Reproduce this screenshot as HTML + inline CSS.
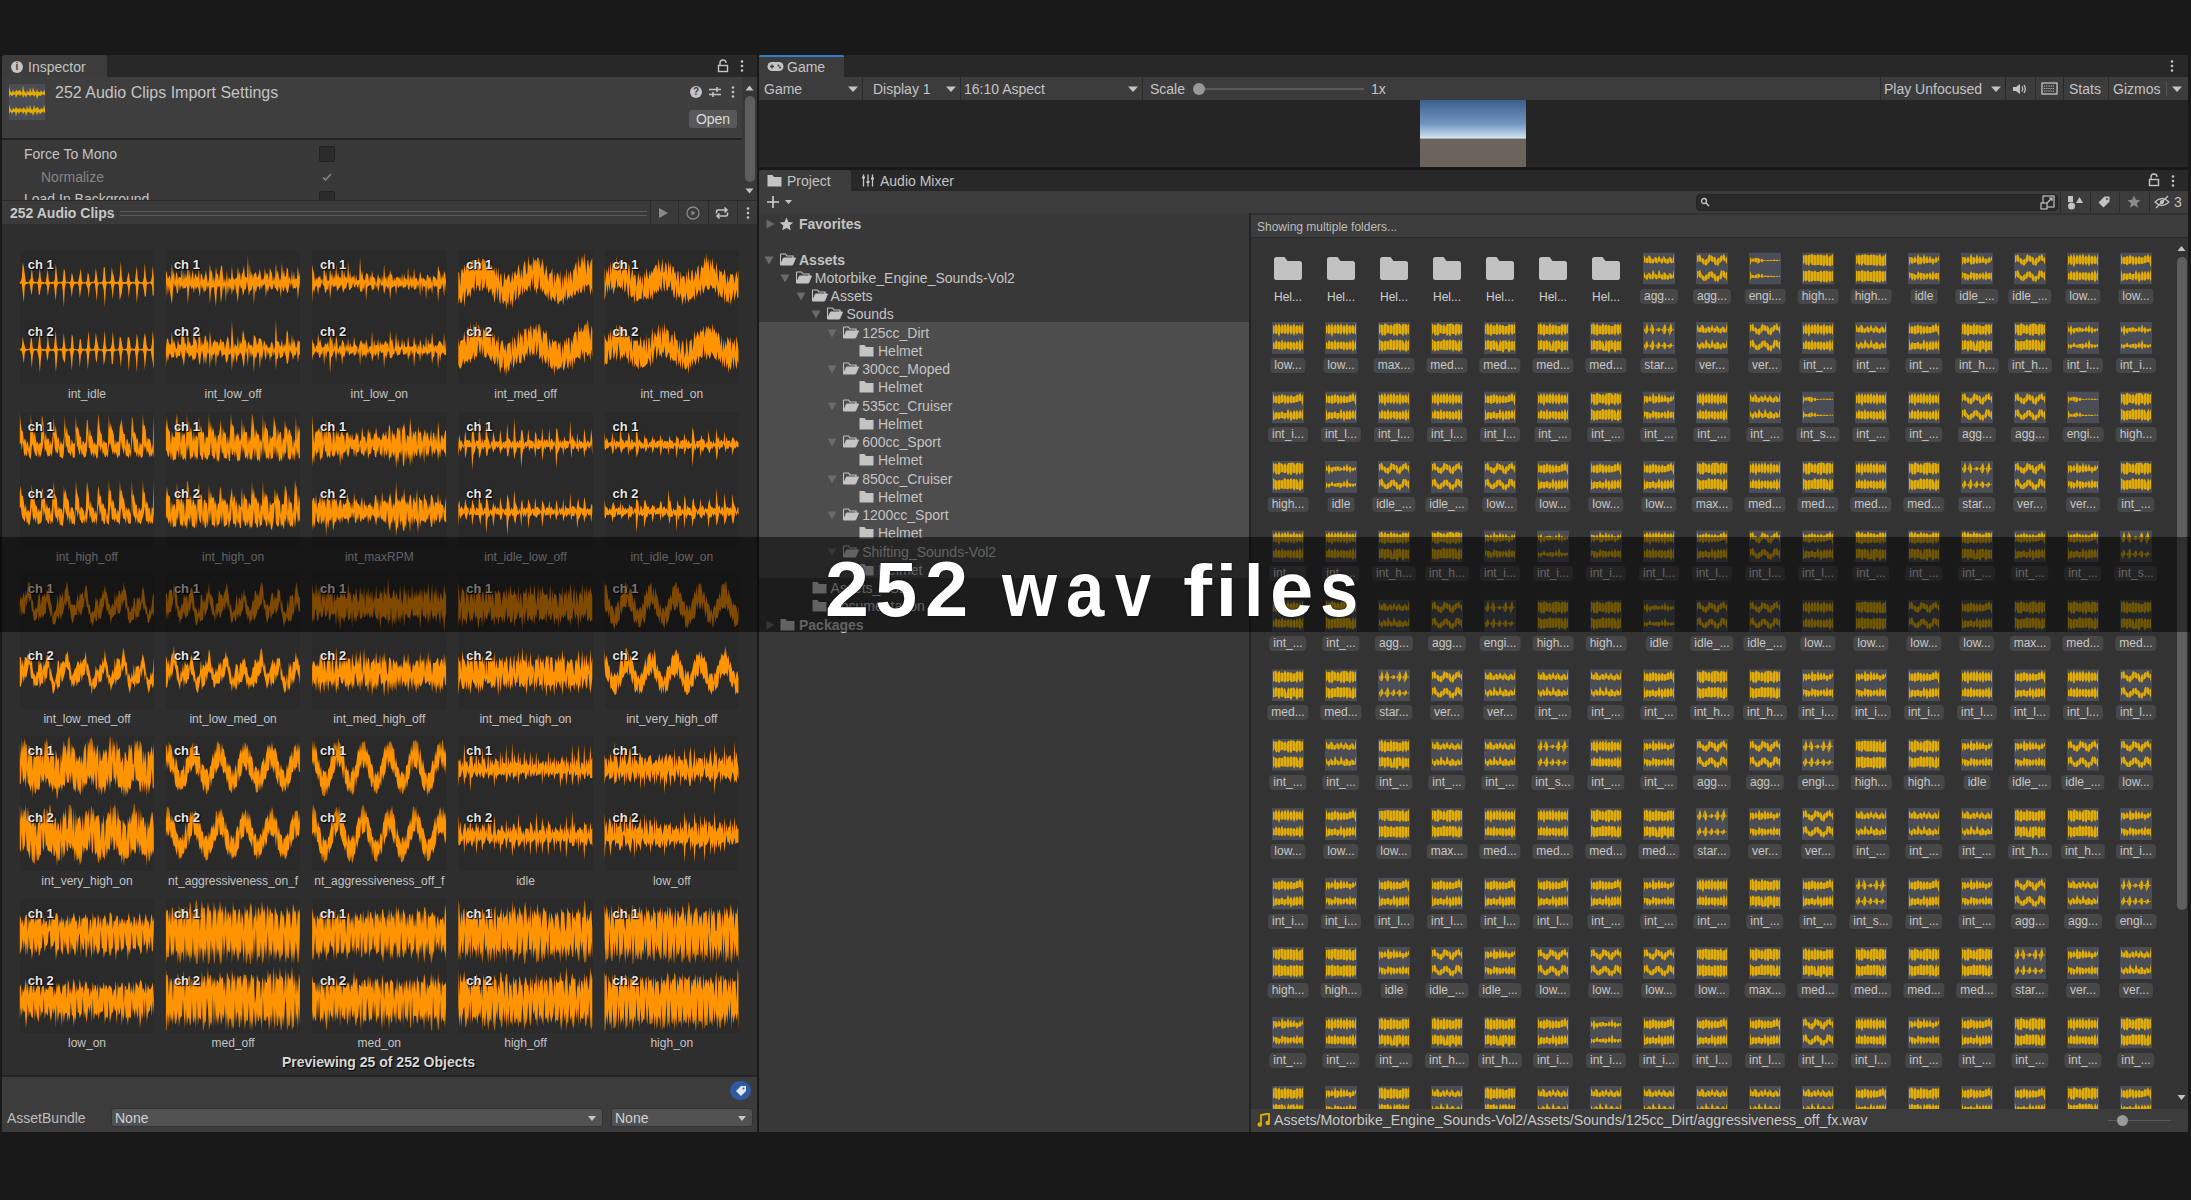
<!DOCTYPE html><html><head><meta charset="utf-8"><style>
html,body{margin:0;padding:0;}
body{width:2191px;height:1200px;overflow:hidden;background:#191919;position:relative;font-family:"Liberation Sans", sans-serif;}
body div{position:absolute;box-sizing:border-box;}
.t{white-space:nowrap;}
.lb{white-space:nowrap;transform:translateX(-50%);padding:0 4px;height:15px;line-height:15px;font-size:12px;color:#c8c8c8;background:#474747;border-radius:4px;}
svg{position:absolute;overflow:hidden;}
</style></head><body>
<div style="left:2px;top:55px;width:755px;height:22px;background:#282828;"></div>
<div style="left:2px;top:55px;width:105px;height:22px;background:#3c3c3c;border-radius:3px 3px 0 0"></div>
<div style="left:11px;top:61px;width:12px;height:12px;border-radius:6px;background:#c4c4c4"></div>
<div class="t" style="left:11px;top:60px;width:12px;text-align:center;font-size:10px;line-height:14px;font-weight:bold;color:#3c3c3c">i</div>
<div class="t" style="left:28px;top:58.0px;font-size:14px;line-height:18px;color:#c4c4c4;font-weight:normal;">Inspector</div>
<svg style="left:716px;top:59px" width="14" height="14" viewBox="0 0 14 14"><path d="M4 6V4a3 3 0 0 1 6 0" fill="none" stroke="#c4c4c4" stroke-width="1.4"/><rect x="2.5" y="6.5" width="9" height="6" fill="none" stroke="#c4c4c4" stroke-width="1.4"/></svg>
<svg style="left:738px;top:59px" width="8" height="14" viewBox="0 0 8 14"><circle cx="4" cy="2.5" r="1.3" fill="#c4c4c4"/><circle cx="4" cy="7" r="1.3" fill="#c4c4c4"/><circle cx="4" cy="11.5" r="1.3" fill="#c4c4c4"/></svg>
<div style="left:2px;top:77px;width:740px;height:61px;background:#3e3e3e;"></div>
<div style="left:9px;top:84px;width:36px;height:36px;background:#4a4d55;"></div>
<svg style="left:9px;top:84px" width="36" height="36" viewBox="0 0 36 36"><path transform="translate(0 1)" d="M0 0.5 1 5.5 2 7.0 3 7.4 4 4.3 5 7.2 6 7.1 7 5.2 8 5.2 9 6.6 10 5.3 11 5.1 12 6.6 13 7.7 14 0.5 15 5.4 16 6.7 17 9.1 18 4.9 19 6.4 20 7.8 21 2.6 22 5.9 23 7.6 24 2.1 25 5.3 26 7.1 27 7.4 28 3.7 29 6.4 30 7.2 31 7.0 32 5.3 33 7.0 34 7.2 35 4.7 36 6.9 36 9.4 35 10.5 34 9.3 33 9.5 32 10.5 31 11.2 30 10.0 29 11.5 28 14.7 27 9.4 26 10.4 25 11.9 24 9.8 23 9.9 22 9.9 21 11.9 20 9.9 19 9.9 18 10.0 17 13.1 16 10.2 15 10.3 14 13.5 13 9.2 12 10.0 11 11.0 10 9.6 9 9.7 8 10.6 7 13.2 6 9.6 5 9.5 4 10.3 3 11.4 2 10.3 1 9.7 0 12.6Z" fill="#e2ad00"/><path transform="translate(0 18)" d="M0 2.2 1 5.9 2 7.1 3 9.1 4 5.5 5 7.0 6 7.2 7 4.4 8 6.7 9 6.3 10 7.6 11 5.4 12 6.7 13 7.6 14 5.7 15 5.4 16 6.9 17 7.9 18 3.3 19 6.5 20 6.9 21 3.0 22 6.3 23 7.8 24 7.2 25 2.8 26 5.8 27 7.1 28 5.1 29 5.3 30 7.1 31 8.0 32 5.7 33 6.7 34 7.2 35 3.1 36 6.4 36 10.1 35 11.3 34 9.3 33 10.6 32 11.1 31 12.4 30 9.9 29 10.4 28 13.6 27 10.3 26 9.4 25 11.7 24 14.0 23 10.2 22 11.6 21 11.1 20 10.1 19 9.7 18 11.4 17 14.2 16 9.8 15 10.4 14 12.6 13 9.2 12 10.6 11 9.8 10 12.3 9 10.1 8 10.5 7 14.2 6 9.9 5 9.9 4 10.0 3 12.2 2 9.7 1 10.1 0 12.3Z" fill="#e2ad00"/></svg>
<div class="t" style="left:55px;top:83.0px;font-size:16px;line-height:20px;color:#c4c4c4;font-weight:normal;">252 Audio Clips Import Settings</div>
<div style="left:690px;top:86px;width:12px;height:12px;border-radius:6px;background:#c4c4c4"></div>
<div class="t" style="left:690px;top:85px;width:12px;text-align:center;font-size:10px;line-height:14px;font-weight:bold;color:#3e3e3e">?</div>
<svg style="left:708px;top:85px" width="14" height="14" viewBox="0 0 14 14"><path d="M1 4.5h12M1 9.5h12" stroke="#c4c4c4" stroke-width="1.4"/><path d="M9 2v5M5 7v5" stroke="#c4c4c4" stroke-width="1.6"/></svg>
<svg style="left:729px;top:85px" width="8" height="14" viewBox="0 0 8 14"><circle cx="4" cy="2.5" r="1.3" fill="#c4c4c4"/><circle cx="4" cy="7" r="1.3" fill="#c4c4c4"/><circle cx="4" cy="11.5" r="1.3" fill="#c4c4c4"/></svg>
<div style="left:689px;top:110px;width:48px;height:18px;background:#585858;border-radius:3px"></div>
<div class="t" style="left:689.0px;top:110.0px;width:48px;text-align:center;font-size:14px;line-height:18px;color:#dcdcdc;font-weight:normal;">Open</div>
<div style="left:2px;top:138px;width:740px;height:2px;background:#242424;"></div>
<div style="left:2px;top:140px;width:740px;height:60px;background:#383838;"></div>
<div class="t" style="left:24px;top:145.0px;font-size:14px;line-height:18px;color:#c4c4c4;font-weight:normal;">Force To Mono</div>
<div style="left:319px;top:146px;width:16px;height:16px;background:#2b2b2b;border:1px solid #222;border-radius:2px"></div>
<div class="t" style="left:41px;top:168.0px;font-size:14px;line-height:18px;color:#858585;font-weight:normal;">Normalize</div>
<svg style="left:320px;top:170px" width="14" height="14" viewBox="0 0 14 14"><path d="M3 7.5l2.5 2.5L11 4" fill="none" stroke="#8a8a8a" stroke-width="1.5"/></svg>
<div style="left:2px;top:140px;width:740px;height:60px;overflow:hidden"><div class="t" style="left:22px;top:50px;font-size:14px;line-height:18px;color:#c4c4c4">Load In Background</div><div style="left:317px;top:51px;width:16px;height:16px;background:#2b2b2b;border:1px solid #222;border-radius:2px"></div></div>
<div style="left:742px;top:77px;width:15px;height:123px;background:#383838;"></div>
<svg style="left:742px;top:80px" width="15" height="120" viewBox="0 0 15 120"><path d="M3.5 10.5h8l-4-5z" fill="#c4c4c4"/><rect x="3" y="16" width="10" height="86" rx="5" fill="#5e5e5e"/><path d="M3.5 108.5h8l-4 5z" fill="#c4c4c4"/></svg>
<div style="left:2px;top:200px;width:755px;height:24px;background:#3a3a3a;border-top:1px solid #2a2a2a"></div>
<div class="t" style="left:10px;top:204.0px;font-size:14px;line-height:18px;color:#c8c8c8;font-weight:bold;">252 Audio Clips</div>
<div style="left:120px;top:211px;width:527px;height:1px;background:#5a5a5a;"></div>
<div style="left:120px;top:215px;width:527px;height:1px;background:#5a5a5a;"></div>
<div style="left:650px;top:201px;width:1px;height:23px;background:#2c2c2c;"></div>
<div style="left:678px;top:201px;width:1px;height:23px;background:#2c2c2c;"></div>
<div style="left:708px;top:201px;width:1px;height:23px;background:#2c2c2c;"></div>
<div style="left:737px;top:201px;width:1px;height:23px;background:#2c2c2c;"></div>
<svg style="left:656px;top:206px" width="14" height="14" viewBox="0 0 14 14"><path d="M3 2l9 5-9 5z" fill="#8a8a8a"/></svg>
<svg style="left:685px;top:205px" width="16" height="16" viewBox="0 0 16 16"><circle cx="8" cy="8" r="6" fill="none" stroke="#8a8a8a" stroke-width="1.3"/><path d="M6.5 5.5l4 2.5-4 2.5z" fill="#8a8a8a"/></svg>
<svg style="left:714px;top:205px" width="16" height="16" viewBox="0 0 16 16"><path d="M2.5 8.5V6.5A1.5 1.5 0 0 1 4 5h8.5M10.5 2.5l2.5 2.5-2.5 2.5M13.5 7.5v2A1.5 1.5 0 0 1 12 11H3.5M5.5 13.5L3 11l2.5-2.5" fill="none" stroke="#c4c4c4" stroke-width="1.6"/></svg>
<svg style="left:744px;top:206px" width="8" height="14" viewBox="0 0 8 14"><circle cx="4" cy="2.5" r="1.3" fill="#c4c4c4"/><circle cx="4" cy="7" r="1.3" fill="#c4c4c4"/><circle cx="4" cy="11.5" r="1.3" fill="#c4c4c4"/></svg>
<div style="left:2px;top:224px;width:755px;height:851px;background:#2e2e2e;"></div>
<div style="left:19.75px;top:249.75px;width:134.4px;height:134.4px;background:#2a2a2a"></div>
<div class="t" style="left:12.0px;top:386.2px;width:150px;text-align:center;font-size:12px;line-height:16px;color:#c4c4c4;font-weight:normal;">int_idle</div>
<div style="left:165.95px;top:249.75px;width:134.4px;height:134.4px;background:#2a2a2a"></div>
<div class="t" style="left:158.1px;top:386.2px;width:150px;text-align:center;font-size:12px;line-height:16px;color:#c4c4c4;font-weight:normal;">int_low_off</div>
<div style="left:312.15px;top:249.75px;width:134.4px;height:134.4px;background:#2a2a2a"></div>
<div class="t" style="left:304.3px;top:386.2px;width:150px;text-align:center;font-size:12px;line-height:16px;color:#c4c4c4;font-weight:normal;">int_low_on</div>
<div style="left:458.35px;top:249.75px;width:134.4px;height:134.4px;background:#2a2a2a"></div>
<div class="t" style="left:450.5px;top:386.2px;width:150px;text-align:center;font-size:12px;line-height:16px;color:#c4c4c4;font-weight:normal;">int_med_off</div>
<div style="left:604.55px;top:249.75px;width:134.4px;height:134.4px;background:#2a2a2a"></div>
<div class="t" style="left:596.8px;top:386.2px;width:150px;text-align:center;font-size:12px;line-height:16px;color:#c4c4c4;font-weight:normal;">int_med_on</div>
<div style="left:19.75px;top:411.95px;width:134.4px;height:134.4px;background:#2a2a2a"></div>
<div class="t" style="left:12.0px;top:548.5px;width:150px;text-align:center;font-size:12px;line-height:16px;color:#c4c4c4;font-weight:normal;">int_high_off</div>
<div style="left:165.95px;top:411.95px;width:134.4px;height:134.4px;background:#2a2a2a"></div>
<div class="t" style="left:158.1px;top:548.5px;width:150px;text-align:center;font-size:12px;line-height:16px;color:#c4c4c4;font-weight:normal;">int_high_on</div>
<div style="left:312.15px;top:411.95px;width:134.4px;height:134.4px;background:#2a2a2a"></div>
<div class="t" style="left:304.3px;top:548.5px;width:150px;text-align:center;font-size:12px;line-height:16px;color:#c4c4c4;font-weight:normal;">int_maxRPM</div>
<div style="left:458.35px;top:411.95px;width:134.4px;height:134.4px;background:#2a2a2a"></div>
<div class="t" style="left:450.5px;top:548.5px;width:150px;text-align:center;font-size:12px;line-height:16px;color:#c4c4c4;font-weight:normal;">int_idle_low_off</div>
<div style="left:604.55px;top:411.95px;width:134.4px;height:134.4px;background:#2a2a2a"></div>
<div class="t" style="left:596.8px;top:548.5px;width:150px;text-align:center;font-size:12px;line-height:16px;color:#c4c4c4;font-weight:normal;">int_idle_low_on</div>
<div style="left:19.75px;top:574.15px;width:134.4px;height:134.4px;background:#2a2a2a"></div>
<div class="t" style="left:12.0px;top:710.6px;width:150px;text-align:center;font-size:12px;line-height:16px;color:#c4c4c4;font-weight:normal;">int_low_med_off</div>
<div style="left:165.95px;top:574.15px;width:134.4px;height:134.4px;background:#2a2a2a"></div>
<div class="t" style="left:158.1px;top:710.6px;width:150px;text-align:center;font-size:12px;line-height:16px;color:#c4c4c4;font-weight:normal;">int_low_med_on</div>
<div style="left:312.15px;top:574.15px;width:134.4px;height:134.4px;background:#2a2a2a"></div>
<div class="t" style="left:304.3px;top:710.6px;width:150px;text-align:center;font-size:12px;line-height:16px;color:#c4c4c4;font-weight:normal;">int_med_high_off</div>
<div style="left:458.35px;top:574.15px;width:134.4px;height:134.4px;background:#2a2a2a"></div>
<div class="t" style="left:450.5px;top:710.6px;width:150px;text-align:center;font-size:12px;line-height:16px;color:#c4c4c4;font-weight:normal;">int_med_high_on</div>
<div style="left:604.55px;top:574.15px;width:134.4px;height:134.4px;background:#2a2a2a"></div>
<div class="t" style="left:596.8px;top:710.6px;width:150px;text-align:center;font-size:12px;line-height:16px;color:#c4c4c4;font-weight:normal;">int_very_high_off</div>
<div style="left:19.75px;top:736.35px;width:134.4px;height:134.4px;background:#2a2a2a"></div>
<div class="t" style="left:12.0px;top:872.8px;width:150px;text-align:center;font-size:12px;line-height:16px;color:#c4c4c4;font-weight:normal;">int_very_high_on</div>
<div style="left:165.95px;top:736.35px;width:134.4px;height:134.4px;background:#2a2a2a"></div>
<div class="t" style="left:158.1px;top:872.8px;width:150px;text-align:center;font-size:12px;line-height:16px;color:#c4c4c4;font-weight:normal;">nt_aggressiveness_on_f</div>
<div style="left:312.15px;top:736.35px;width:134.4px;height:134.4px;background:#2a2a2a"></div>
<div class="t" style="left:304.3px;top:872.8px;width:150px;text-align:center;font-size:12px;line-height:16px;color:#c4c4c4;font-weight:normal;">nt_aggressiveness_off_f</div>
<div style="left:458.35px;top:736.35px;width:134.4px;height:134.4px;background:#2a2a2a"></div>
<div class="t" style="left:450.5px;top:872.8px;width:150px;text-align:center;font-size:12px;line-height:16px;color:#c4c4c4;font-weight:normal;">idle</div>
<div style="left:604.55px;top:736.35px;width:134.4px;height:134.4px;background:#2a2a2a"></div>
<div class="t" style="left:596.8px;top:872.8px;width:150px;text-align:center;font-size:12px;line-height:16px;color:#c4c4c4;font-weight:normal;">low_off</div>
<div style="left:19.75px;top:898.55px;width:134.4px;height:134.4px;background:#2a2a2a"></div>
<div class="t" style="left:12.0px;top:1035.0px;width:150px;text-align:center;font-size:12px;line-height:16px;color:#c4c4c4;font-weight:normal;">low_on</div>
<div style="left:165.95px;top:898.55px;width:134.4px;height:134.4px;background:#2a2a2a"></div>
<div class="t" style="left:158.1px;top:1035.0px;width:150px;text-align:center;font-size:12px;line-height:16px;color:#c4c4c4;font-weight:normal;">med_off</div>
<div style="left:312.15px;top:898.55px;width:134.4px;height:134.4px;background:#2a2a2a"></div>
<div class="t" style="left:304.3px;top:1035.0px;width:150px;text-align:center;font-size:12px;line-height:16px;color:#c4c4c4;font-weight:normal;">med_on</div>
<div style="left:458.35px;top:898.55px;width:134.4px;height:134.4px;background:#2a2a2a"></div>
<div class="t" style="left:450.5px;top:1035.0px;width:150px;text-align:center;font-size:12px;line-height:16px;color:#c4c4c4;font-weight:normal;">high_off</div>
<div style="left:604.55px;top:898.55px;width:134.4px;height:134.4px;background:#2a2a2a"></div>
<div class="t" style="left:596.8px;top:1035.0px;width:150px;text-align:center;font-size:12px;line-height:16px;color:#c4c4c4;font-weight:normal;">high_on</div>
<svg style="left:0;top:0" width="760" height="1080" viewBox="0 0 760 1080"><defs><linearGradient id="og" gradientUnits="userSpaceOnUse" x1="0" y1="0" x2="0" y2="66"><stop offset="0" stop-color="#8a5210"/><stop offset="0.25" stop-color="#ff9300"/><stop offset="0.75" stop-color="#ff9300"/><stop offset="1" stop-color="#8a5210"/></linearGradient></defs><path transform="translate(19.8 249.8)" d="M0 32.4 1 31.8 2 27.7 3 12.7 4 17.2 5 24.7 6 32.2 7 31.9 8 32.3 9 32.4 10 30.3 11 28.6 12 16.8 13 27.5 14 32.3 15 31.8 16 32.1 17 32.2 18 32.0 19 27.8 20 17.1 21 28.3 22 32.2 23 32.1 24 32.2 25 32.6 26 32.2 27 25.4 28 19.4 29 30.7 30 32.2 31 32.5 32 32.2 33 31.8 34 32.1 35 29.4 36 13.6 37 23.7 38 32.6 39 31.9 40 32.0 41 32.1 42 31.9 43 30.6 44 19.1 45 20.5 46 31.3 47 32.6 48 31.8 49 32.0 50 32.4 51 30.6 52 22.6 53 26.3 54 32.0 55 31.9 56 32.0 57 32.0 58 32.8 59 29.1 60 24.3 61 18.6 62 30.0 63 32.6 64 32.4 65 32.3 66 32.4 67 30.9 68 22.4 69 24.9 70 32.5 71 32.6 72 31.9 73 32.0 74 32.2 75 29.6 76 18.3 77 25.0 78 32.4 79 32.6 80 32.3 81 32.4 82 32.2 83 30.8 84 17.1 85 17.7 86 30.8 87 32.3 88 32.3 89 31.8 90 31.9 91 30.2 92 17.3 93 23.8 94 25.9 95 32.2 96 32.0 97 32.4 98 31.8 99 31.8 100 25.0 101 11.1 102 27.0 103 32.8 104 32.0 105 32.2 106 32.1 107 31.5 108 25.5 109 21.9 110 30.5 111 32.4 112 31.9 113 32.0 114 32.3 115 32.4 116 23.9 117 16.4 118 29.0 119 31.6 120 32.0 121 32.4 122 32.3 123 32.5 124 27.6 125 13.1 126 26.4 127 32.0 128 32.6 129 32.7 130 31.9 131 31.9 132 27.4 133 15.7 134 28.1 134 45.3 133 46.4 132 35.2 131 33.9 130 33.2 129 34.2 128 34.2 127 34.5 126 47.0 125 46.6 124 39.6 123 34.8 122 34.0 121 33.8 120 34.0 119 33.9 118 43.9 117 53.7 116 36.3 115 33.7 114 34.0 113 33.3 112 34.2 111 34.1 110 38.0 109 47.9 108 36.8 107 34.0 106 33.9 105 34.1 104 34.2 103 34.6 102 42.9 101 46.7 100 50.7 99 36.1 98 34.0 97 34.2 96 34.1 95 34.3 94 37.2 93 49.8 92 40.0 91 34.0 90 34.3 89 33.5 88 33.7 87 34.0 86 39.3 85 58.3 84 41.0 83 35.7 82 33.8 81 34.2 80 33.4 79 34.3 78 36.6 77 51.6 76 41.2 75 33.8 74 33.2 73 33.4 72 33.4 71 34.4 70 36.7 69 48.2 68 39.3 67 36.2 66 33.6 65 33.8 64 33.8 63 34.1 62 34.2 61 41.4 60 48.1 59 36.4 58 34.1 57 33.6 56 33.9 55 34.3 54 35.4 53 38.4 52 47.6 51 39.2 50 34.2 49 33.8 48 33.2 47 33.7 46 33.4 45 38.6 44 58.2 43 40.9 42 34.0 41 33.4 40 33.8 39 33.7 38 34.8 37 37.5 36 51.1 35 42.8 34 34.1 33 34.0 32 34.3 31 34.0 30 34.2 29 39.7 28 46.2 27 35.5 26 34.4 25 33.5 24 34.4 23 33.9 22 33.9 21 37.9 20 44.7 19 45.2 18 34.6 17 33.4 16 33.4 15 33.9 14 33.3 13 35.3 12 45.5 11 41.1 10 34.7 9 33.6 8 33.6 7 34.3 6 34.4 5 36.2 4 52.6 3 43.8 2 33.7 1 33.9 0 33.9Z" fill="url(#og)"/><path transform="translate(19.8 316.8)" d="M0 32.3 1 31.9 2 30.5 3 20.1 4 26.0 5 29.6 6 32.5 7 32.2 8 31.9 9 32.1 10 31.7 11 21.5 12 21.4 13 31.2 14 32.2 15 31.9 16 32.2 17 31.9 18 32.0 19 23.0 20 14.4 21 29.2 22 32.1 23 32.5 24 32.2 25 32.4 26 32.4 27 30.1 28 18.0 29 27.5 30 31.9 31 32.2 32 32.6 33 32.3 34 31.6 35 22.1 36 13.6 37 28.7 38 32.0 39 32.5 40 32.0 41 31.8 42 32.2 43 29.1 44 16.2 45 26.2 46 32.3 47 31.9 48 32.1 49 32.8 50 31.7 51 31.0 52 17.3 53 20.0 54 31.6 55 32.4 56 32.1 57 32.7 58 32.1 59 31.7 60 22.2 61 22.5 62 31.5 63 32.1 64 31.7 65 32.6 66 31.8 67 31.5 68 21.6 69 14.2 70 30.0 71 32.3 72 32.6 73 32.3 74 32.0 75 28.3 76 16.0 77 22.1 78 27.1 79 32.0 80 31.9 81 32.5 82 32.5 83 32.1 84 24.3 85 13.3 86 29.5 87 32.4 88 32.6 89 32.2 90 32.1 91 31.2 92 27.1 93 14.1 94 25.8 95 32.4 96 32.5 97 32.6 98 32.2 99 30.5 100 19.6 101 21.0 102 26.0 103 31.5 104 32.1 105 31.9 106 32.3 107 31.3 108 19.6 109 20.5 110 23.1 111 31.4 112 32.0 113 31.8 114 32.1 115 32.0 116 28.7 117 16.6 118 22.3 119 31.4 120 32.7 121 31.9 122 32.0 123 32.3 124 22.0 125 16.2 126 20.6 127 29.5 128 31.8 129 32.7 130 32.2 131 32.1 132 27.8 133 13.8 134 24.9 134 52.1 133 46.0 132 40.7 131 33.6 130 34.2 129 34.3 128 34.0 127 33.4 126 43.0 125 53.0 124 37.1 123 33.7 122 34.0 121 33.1 120 33.6 119 33.9 118 38.5 117 55.9 116 40.8 115 33.5 114 34.2 113 33.4 112 33.8 111 34.2 110 40.2 109 54.7 108 39.2 107 34.1 106 33.9 105 32.7 104 33.5 103 33.5 102 38.0 101 50.5 100 39.9 99 33.7 98 33.7 97 33.6 96 33.6 95 34.4 94 34.9 93 47.8 92 47.0 91 34.7 90 34.1 89 34.3 88 34.1 87 34.1 86 36.4 85 43.7 84 48.4 83 35.5 82 34.2 81 33.5 80 34.0 79 33.4 78 35.3 77 46.3 76 43.0 75 34.3 74 33.7 73 33.7 72 34.0 71 34.2 70 34.3 69 41.9 68 52.7 67 38.0 66 34.0 65 34.0 64 33.8 63 33.7 62 35.8 61 39.2 60 50.6 59 37.3 58 33.9 57 34.1 56 33.3 55 33.1 54 35.0 53 39.5 52 54.0 51 40.7 50 34.1 49 33.9 48 33.8 47 34.3 46 35.8 45 46.5 44 43.9 43 41.8 42 33.8 41 34.3 40 33.5 39 33.8 38 33.7 37 45.6 36 55.6 35 36.7 34 33.7 33 34.1 32 34.3 31 33.6 30 34.3 29 35.3 28 44.2 27 40.8 26 34.3 25 34.1 24 33.9 23 34.1 22 33.5 21 44.2 20 55.9 19 41.7 18 36.6 17 33.5 16 33.6 15 33.7 14 33.9 13 38.9 12 51.3 11 38.1 10 33.7 9 33.3 8 33.4 7 33.7 6 34.2 5 36.1 4 46.7 3 39.7 2 34.4 1 33.8 0 33.3Z" fill="url(#og)"/><path transform="translate(165.9 249.8)" d="M0 20.6 1 23.6 2 29.2 3 26.9 4 25.1 5 31.7 6 13.7 7 25.9 8 20.8 9 32.4 10 24.4 11 21.9 12 30.5 13 26.8 14 27.4 15 28.0 16 17.0 17 32.7 18 21.1 19 29.8 20 23.3 21 28.7 22 10.4 23 28.0 24 20.2 25 31.2 26 24.6 27 20.2 28 30.6 29 25.8 30 23.5 31 28.3 32 26.4 33 18.7 34 33.7 35 23.9 36 24.3 37 29.8 38 30.0 39 26.3 40 20.6 41 27.2 42 33.7 43 29.2 44 14.3 45 23.1 46 19.6 47 32.2 48 26.2 49 33.0 50 16.6 51 24.0 52 24.3 53 31.3 54 23.6 55 17.0 56 15.1 57 25.1 58 33.2 59 27.7 60 33.8 61 20.3 62 33.1 63 26.6 64 29.2 65 30.0 66 16.2 67 27.1 68 29.6 69 29.7 70 28.3 71 28.3 72 16.8 73 25.8 74 21.7 75 31.0 76 24.3 77 22.5 78 15.7 79 26.8 80 27.3 81 28.3 82 4.7 83 30.6 84 15.0 85 26.2 86 22.4 87 29.2 88 24.1 89 23.7 90 22.0 91 27.7 92 26.9 93 23.7 94 19.0 95 26.8 96 31.1 97 29.0 98 28.7 99 18.2 100 26.2 101 22.7 102 24.7 103 30.7 104 17.7 105 21.2 106 23.3 107 32.0 108 26.1 109 30.8 110 12.7 111 24.7 112 20.3 113 27.4 114 31.2 115 28.3 116 12.1 117 26.5 118 19.7 119 27.0 120 26.8 121 17.7 122 19.2 123 29.8 124 26.2 125 32.3 126 20.3 127 31.2 128 21.4 129 30.0 130 28.1 131 29.4 132 16.0 133 27.4 134 22.3 134 33.6 133 38.9 132 50.0 131 35.9 130 38.9 129 38.2 128 38.2 127 39.4 126 32.3 125 37.4 124 32.5 123 37.7 122 43.2 121 42.7 120 38.6 119 36.4 118 41.3 117 41.1 116 35.8 115 47.5 114 39.6 113 36.2 112 42.0 111 40.6 110 38.8 109 37.9 108 33.1 107 38.5 106 39.9 105 39.3 104 35.6 103 37.6 102 42.8 101 38.4 100 47.6 99 33.6 98 36.0 97 34.4 96 39.4 95 35.5 94 41.0 93 37.5 92 36.1 91 37.4 90 43.3 89 39.3 88 55.0 87 34.6 86 39.4 85 41.0 84 41.3 83 46.2 82 37.5 81 31.5 80 40.0 79 38.7 78 43.1 77 46.1 76 38.1 75 38.6 74 34.8 73 39.3 72 53.2 71 45.2 70 40.1 69 33.5 68 41.5 67 38.5 66 45.4 65 37.2 64 40.3 63 35.6 62 45.3 61 35.0 60 52.8 59 35.1 58 40.9 57 35.5 56 46.6 55 53.2 54 36.1 53 37.6 52 35.7 51 40.7 50 56.9 49 47.3 48 37.0 47 38.3 46 37.0 45 41.7 44 54.4 43 35.2 42 39.7 41 35.2 40 41.3 39 40.2 38 43.1 37 36.4 36 39.5 35 33.8 34 47.3 33 41.2 32 36.8 31 37.8 30 40.0 29 36.2 28 43.5 27 37.0 26 39.7 25 37.2 24 35.2 23 41.0 22 54.8 21 36.0 20 38.1 19 38.7 18 37.6 17 39.5 16 35.7 15 36.3 14 41.0 13 33.3 12 43.8 11 42.9 10 35.4 9 37.6 8 32.3 7 41.3 6 54.7 5 48.2 4 41.2 3 36.2 2 45.2 1 33.1 0 49.0Z" fill="url(#og)"/><path transform="translate(165.9 316.8)" d="M0 31.5 1 22.5 2 21.1 3 26.0 4 28.0 5 27.6 6 14.6 7 27.5 8 22.8 9 26.8 10 31.1 11 32.2 12 22.3 13 27.1 14 28.0 15 28.2 16 13.5 17 15.4 18 16.5 19 27.7 20 25.9 21 31.6 22 11.2 23 27.3 24 24.3 25 29.2 26 29.0 27 27.6 28 9.6 29 23.8 30 21.9 31 26.4 32 32.9 33 12.1 34 14.8 35 30.7 36 23.4 37 28.7 38 26.3 39 19.0 40 19.2 41 26.8 42 22.7 43 34.0 44 14.0 45 23.4 46 31.8 47 25.8 48 24.8 49 22.4 50 26.2 51 24.4 52 25.7 53 29.1 54 24.6 55 21.3 56 26.2 57 24.9 58 24.8 59 32.8 60 27.1 61 22.2 62 19.1 63 25.3 64 33.9 65 28.6 66 3.2 67 19.8 68 32.1 69 26.4 70 28.6 71 29.6 72 19.1 73 33.0 74 23.1 75 27.6 76 24.8 77 12.9 78 16.8 79 24.4 80 22.5 81 33.4 82 26.1 83 24.8 84 29.3 85 27.6 86 28.5 87 31.2 88 18.0 89 19.4 90 21.4 91 27.8 92 27.7 93 21.3 94 21.6 95 21.9 96 24.8 97 31.2 98 23.5 99 25.2 100 29.2 101 27.2 102 31.5 103 30.2 104 31.2 105 26.6 106 24.4 107 28.0 108 33.7 109 29.4 110 0.5 111 24.1 112 24.6 113 25.2 114 29.7 115 28.7 116 22.2 117 31.7 118 26.7 119 29.6 120 25.5 121 12.6 122 15.9 123 29.8 124 24.0 125 31.1 126 17.7 127 27.5 128 21.6 129 26.7 130 31.5 131 29.1 132 22.9 133 24.9 134 24.8 134 37.2 133 38.8 132 46.3 131 32.6 130 38.6 129 37.8 128 39.7 127 43.3 126 36.8 125 35.9 124 32.5 123 40.2 122 47.0 121 46.6 120 39.9 119 36.8 118 33.6 117 39.4 116 40.1 115 41.1 114 41.6 113 34.0 112 42.0 111 41.8 110 53.3 109 34.7 108 39.5 107 33.8 106 40.1 105 39.3 104 44.6 103 34.9 102 39.2 101 33.2 100 43.7 99 40.3 98 30.9 97 37.0 96 43.2 95 38.4 94 52.0 93 37.2 92 34.7 91 37.9 90 42.3 89 39.4 88 57.0 87 36.5 86 40.5 85 35.2 84 41.2 83 30.6 82 49.5 81 38.7 80 33.8 79 39.2 78 50.9 77 45.8 76 39.3 75 36.8 74 35.8 73 39.4 72 37.7 71 46.4 70 41.3 69 34.8 68 46.2 67 40.0 66 54.7 65 35.6 64 38.4 63 36.6 62 42.5 61 46.4 60 44.6 59 37.1 58 38.4 57 37.7 56 41.2 55 33.9 54 33.1 53 37.2 52 40.6 51 36.9 50 50.2 49 35.1 48 38.8 47 37.3 46 44.9 45 36.9 44 51.8 43 37.4 42 35.3 41 38.9 40 48.0 39 38.7 38 47.8 37 37.1 36 33.6 35 39.2 34 48.5 33 45.1 32 36.9 31 35.0 30 40.4 29 42.9 28 41.9 27 44.3 26 39.3 25 38.2 24 39.7 23 41.0 22 35.7 21 37.7 20 31.9 19 40.0 18 49.5 17 43.0 16 40.0 15 34.0 14 39.7 13 38.9 12 39.0 11 41.7 10 40.7 9 33.7 8 40.8 7 40.3 6 41.4 5 38.6 4 36.1 3 38.6 2 45.0 1 38.3 0 50.7Z" fill="url(#og)"/><path transform="translate(312.1 249.8)" d="M0 14.7 1 20.2 2 23.4 3 31.9 4 27.4 5 30.3 6 27.1 7 27.3 8 26.0 9 31.1 10 28.8 11 32.8 12 10.4 13 27.4 14 21.9 15 30.3 16 31.1 17 30.2 18 17.3 19 27.4 20 22.4 21 30.5 22 24.5 23 29.2 24 14.4 25 28.0 26 22.5 27 27.9 28 27.0 29 29.1 30 12.1 31 29.6 32 20.2 33 28.0 34 25.6 35 30.0 36 11.5 37 29.0 38 21.1 39 29.5 40 26.1 41 28.1 42 24.3 43 31.5 44 24.7 45 31.0 46 30.1 47 30.1 48 6.8 49 26.8 50 20.6 51 28.2 52 30.8 53 29.7 54 23.1 55 23.9 56 24.7 57 32.6 58 25.1 59 29.3 60 20.6 61 27.1 62 27.4 63 28.9 64 34.4 65 29.8 66 23.8 67 29.5 68 27.1 69 33.3 70 25.7 71 31.9 72 14.7 73 29.2 74 25.9 75 31.9 76 24.8 77 28.1 78 20.3 79 24.8 80 25.0 81 32.4 82 27.6 83 31.1 84 27.5 85 27.6 86 26.4 87 29.4 88 26.7 89 32.3 90 22.9 91 32.8 92 23.8 93 28.6 94 28.4 95 30.7 96 17.2 97 32.9 98 24.6 99 30.1 100 26.3 101 31.0 102 18.1 103 29.0 104 27.6 105 28.9 106 32.6 107 29.2 108 21.5 109 26.7 110 29.6 111 27.9 112 28.6 113 30.1 114 31.7 115 24.8 116 25.5 117 29.3 118 26.0 119 30.1 120 33.8 121 25.7 122 26.8 123 27.7 124 28.8 125 31.1 126 15.8 127 20.8 128 23.3 129 30.9 130 24.2 131 29.1 132 21.1 133 24.0 134 32.0 134 42.3 133 32.0 132 46.7 131 37.4 130 33.6 129 38.7 128 39.2 127 39.2 126 52.4 125 36.1 124 37.1 123 35.7 122 38.3 121 33.3 120 45.0 119 37.0 118 39.7 117 37.9 116 42.0 115 34.1 114 50.3 113 35.9 112 37.8 111 35.7 110 42.1 109 31.8 108 47.1 107 32.9 106 39.2 105 34.2 104 39.9 103 38.8 102 40.4 101 35.1 100 38.4 99 37.4 98 34.6 97 40.2 96 39.2 95 34.0 94 36.5 93 38.0 92 37.3 91 38.9 90 34.9 89 37.1 88 36.3 87 36.9 86 38.1 85 34.8 84 45.3 83 36.8 82 36.0 81 37.7 80 37.3 79 39.1 78 50.2 77 36.2 76 39.8 75 37.5 74 35.9 73 40.1 72 44.9 71 36.3 70 34.9 69 37.0 68 31.9 67 38.9 66 42.1 65 34.8 64 38.8 63 33.4 62 39.0 61 39.6 60 40.6 59 35.9 58 34.9 57 36.2 56 36.3 55 38.7 54 50.8 53 32.7 52 40.6 51 37.3 50 41.7 49 42.3 48 41.1 47 33.5 46 39.2 45 36.5 44 34.2 43 37.6 42 37.2 41 32.5 40 37.6 39 38.3 38 40.2 37 40.3 36 32.1 35 33.6 34 38.9 33 38.1 32 40.5 31 43.0 30 36.9 29 34.7 28 37.8 27 37.7 26 40.0 25 41.5 24 34.9 23 37.2 22 36.5 21 37.8 20 34.3 19 39.8 18 49.1 17 33.3 16 40.7 15 38.8 14 42.0 13 43.4 12 36.0 11 35.8 10 31.4 9 35.0 8 38.5 7 36.9 6 45.3 5 37.2 4 35.7 3 37.7 2 43.0 1 38.9 0 52.4Z" fill="url(#og)"/><path transform="translate(312.1 316.8)" d="M0 21.8 1 26.3 2 27.0 3 32.8 4 27.9 5 29.6 6 16.2 7 26.4 8 21.9 9 27.3 10 31.1 11 29.9 12 30.8 13 25.7 14 28.1 15 27.3 16 24.5 17 32.5 18 12.5 19 25.2 20 20.3 21 32.5 22 25.5 23 30.7 24 18.6 25 23.9 26 33.3 27 30.1 28 27.7 29 31.1 30 22.9 31 24.1 32 26.8 33 32.4 34 26.6 35 30.8 36 21.2 37 31.7 38 25.9 39 29.8 40 30.2 41 29.5 42 19.9 43 27.2 44 28.8 45 29.5 46 33.8 47 29.0 48 25.6 49 22.9 50 25.8 51 27.9 52 25.5 53 29.3 54 22.7 55 26.4 56 33.4 57 29.1 58 30.2 59 28.6 60 14.4 61 32.8 62 22.4 63 28.9 64 28.2 65 28.6 66 21.7 67 30.9 68 24.0 69 29.1 70 25.8 71 28.8 72 27.1 73 24.2 74 24.4 75 27.5 76 25.5 77 32.6 78 13.1 79 24.8 80 21.6 81 27.9 82 34.1 83 28.6 84 15.4 85 30.5 86 21.9 87 28.8 88 31.0 89 29.3 90 21.4 91 31.1 92 23.3 93 29.4 94 30.3 95 30.0 96 19.5 97 28.3 98 30.1 99 29.6 100 30.1 101 29.3 102 19.3 103 28.5 104 26.8 105 33.3 106 27.3 107 31.1 108 22.4 109 26.1 110 33.8 111 27.2 112 28.6 113 31.0 114 18.3 115 33.0 116 21.7 117 28.5 118 25.8 119 28.0 120 15.3 121 26.4 122 31.2 123 27.7 124 29.8 125 29.1 126 27.1 127 24.0 128 24.4 129 25.7 130 27.8 131 29.8 132 16.4 133 33.2 134 21.7 134 38.7 133 38.3 132 37.7 131 35.8 130 36.2 129 38.3 128 44.5 127 35.9 126 52.8 125 35.8 124 36.2 123 33.2 122 40.2 121 40.4 120 47.2 119 34.8 118 35.1 117 37.5 116 35.9 115 39.6 114 35.8 113 35.5 112 37.2 111 36.3 110 39.9 109 34.2 108 45.3 107 36.6 106 37.6 105 36.6 104 33.8 103 38.1 102 50.1 101 34.6 100 39.0 99 32.7 98 39.0 97 38.7 96 44.0 95 34.9 94 37.7 93 37.0 92 38.1 91 37.5 90 31.9 89 33.2 88 37.8 87 37.9 86 38.2 85 38.9 84 34.4 83 33.9 82 37.7 81 37.3 80 40.7 79 41.4 78 41.4 77 35.6 76 33.9 75 38.2 74 41.7 73 37.7 72 51.0 71 34.7 70 36.4 69 35.9 68 33.2 67 36.8 66 43.6 65 35.0 64 38.4 63 39.0 62 36.5 61 40.5 60 44.9 59 36.9 58 36.5 57 33.7 56 38.4 55 34.9 54 42.0 53 37.4 52 39.0 51 37.5 50 41.3 49 32.3 48 49.2 47 34.0 46 38.4 45 32.4 44 37.8 43 37.4 42 39.6 41 35.0 40 37.0 39 36.7 38 36.9 37 39.1 36 32.9 35 36.5 34 32.2 33 37.3 32 40.6 31 38.8 30 48.5 29 36.0 28 38.8 27 34.5 26 38.2 25 33.6 24 45.1 23 36.1 22 33.3 21 37.3 20 39.8 19 40.8 18 57.3 17 35.8 16 34.0 15 35.9 14 42.1 13 35.2 12 48.6 11 33.0 10 38.2 9 36.4 8 41.5 7 40.3 6 35.0 5 36.8 4 34.2 3 35.3 2 37.6 1 38.2 0 44.0Z" fill="url(#og)"/><path transform="translate(458.3 249.8)" d="M0 21.8 1 23.6 2 36.6 3 20.4 4 18.6 5 24.2 6 14.7 7 21.8 8 15.1 9 12.9 10 12.3 11 23.8 12 10.7 13 12.4 14 10.7 15 10.5 16 22.8 17 11.5 18 11.0 19 11.8 20 7.5 21 10.5 22 13.7 23 13.2 24 9.3 25 8.9 26 11.0 27 10.2 28 18.4 29 15.6 30 15.9 31 15.5 32 15.8 33 15.3 34 17.5 35 22.0 36 17.5 37 27.0 38 17.9 39 28.6 40 17.4 41 34.0 42 25.3 43 23.4 44 37.7 45 35.9 46 21.6 47 29.4 48 30.7 49 27.3 50 24.9 51 24.7 52 34.0 53 30.4 54 20.9 55 32.5 56 23.5 57 21.0 58 26.5 59 23.6 60 14.0 61 19.5 62 29.6 63 18.5 64 30.2 65 17.8 66 10.7 67 13.1 68 25.1 69 22.8 70 5.5 71 14.5 72 16.8 73 13.4 74 21.7 75 5.9 76 11.7 77 9.1 78 12.0 79 7.8 80 7.9 81 9.7 82 19.1 83 15.3 84 8.2 85 14.1 86 26.1 87 21.5 88 15.1 89 24.0 90 32.7 91 23.1 92 24.2 93 22.3 94 17.9 95 38.7 96 21.9 97 34.4 98 27.7 99 22.4 100 24.5 101 30.2 102 20.5 103 42.1 104 25.3 105 38.7 106 23.8 107 32.0 108 17.7 109 34.6 110 21.5 111 31.9 112 20.1 113 24.9 114 33.9 115 20.2 116 19.4 117 14.8 118 11.7 119 26.9 120 5.6 121 16.2 122 18.8 123 9.5 124 6.0 125 13.5 126 2.7 127 10.6 128 25.4 129 10.9 130 9.5 131 19.9 132 12.9 133 10.1 134 7.5 134 43.6 133 37.9 132 46.2 131 35.8 130 34.3 129 36.1 128 36.6 127 33.6 126 43.8 125 34.5 124 39.6 123 43.5 122 42.6 121 37.3 120 45.3 119 40.1 118 41.2 117 45.8 116 45.5 115 40.3 114 49.1 113 46.4 112 44.6 111 49.2 110 46.6 109 51.1 108 38.1 107 50.1 106 45.8 105 56.1 104 47.6 103 52.3 102 50.8 101 52.1 100 55.0 99 52.9 98 42.5 97 51.9 96 50.7 95 48.3 94 46.6 93 52.0 92 48.1 91 39.8 90 51.8 89 42.8 88 47.4 87 44.9 86 44.0 85 38.9 84 43.2 83 36.4 82 41.6 81 24.9 80 38.5 79 38.9 78 44.4 77 36.5 76 41.6 75 23.7 74 37.0 73 26.6 72 42.1 71 35.6 70 36.8 69 41.7 68 40.2 67 38.6 66 43.8 65 36.5 64 46.5 63 35.0 62 45.2 61 44.5 60 50.4 59 34.0 58 48.7 57 51.4 56 39.5 55 51.1 54 59.3 53 48.7 52 56.2 51 40.9 50 55.6 49 52.1 48 60.8 47 51.0 46 51.5 45 54.6 44 51.5 43 40.7 42 55.2 41 50.7 40 37.1 39 50.7 38 36.5 37 47.1 36 53.8 35 41.7 34 47.0 33 38.4 32 39.6 31 40.9 30 43.7 29 35.7 28 39.8 27 28.5 26 39.0 25 37.1 24 42.3 23 27.9 22 41.3 21 40.9 20 35.8 19 35.3 18 41.5 17 23.6 16 42.4 15 38.5 14 37.4 13 39.4 12 48.8 11 41.8 10 45.9 9 46.7 8 37.2 7 47.4 6 57.7 5 40.7 4 50.0 3 53.8 2 52.6 1 47.4 0 55.8Z" fill="url(#og)"/><path transform="translate(458.3 316.8)" d="M0 21.1 1 30.4 2 24.3 3 23.6 4 23.3 5 22.9 6 14.5 7 23.6 8 29.0 9 11.7 10 10.1 11 26.3 12 4.6 13 16.0 14 21.4 15 8.3 16 9.3 17 13.3 18 3.7 19 20.3 20 7.8 21 8.9 22 22.3 23 10.4 24 25.2 25 10.7 26 14.6 27 11.9 28 9.4 29 16.3 30 9.6 31 18.2 32 13.6 33 31.0 34 14.8 35 21.9 36 17.0 37 30.7 38 22.6 39 26.4 40 18.7 41 38.3 42 28.9 43 24.1 44 23.3 45 27.1 46 34.1 47 27.3 48 37.3 49 27.6 50 26.2 51 26.7 52 24.0 53 39.3 54 17.9 55 33.7 56 19.9 57 23.5 58 32.4 59 25.0 60 11.3 61 28.0 62 15.1 63 20.8 64 16.9 65 30.0 66 11.6 67 12.6 68 10.9 69 25.9 70 10.3 71 15.8 72 8.1 73 10.2 74 23.5 75 9.4 76 13.4 77 11.5 78 6.6 79 17.7 80 8.1 81 6.5 82 10.1 83 20.3 84 26.7 85 13.2 86 16.3 87 17.4 88 12.7 89 21.9 90 35.0 91 21.3 92 26.3 93 31.6 94 21.8 95 25.6 96 25.0 97 24.0 98 23.6 99 34.0 100 24.7 101 28.5 102 24.1 103 42.7 104 26.7 105 37.4 106 22.3 107 29.0 108 20.1 109 29.5 110 20.7 111 21.2 112 38.3 113 21.8 114 28.3 115 20.9 116 15.9 117 15.1 118 14.4 119 27.4 120 4.9 121 14.9 122 15.2 123 10.0 124 15.5 125 13.7 126 8.8 127 7.3 128 8.3 129 2.6 130 5.9 131 15.7 132 24.3 133 8.0 134 12.9 134 40.5 133 31.9 132 44.1 131 36.0 130 38.5 129 39.6 128 35.3 127 35.2 126 47.3 125 33.5 124 39.1 123 31.1 122 43.0 121 41.3 120 41.2 119 39.5 118 41.5 117 40.9 116 48.1 115 40.0 114 54.1 113 41.4 112 50.6 111 42.3 110 52.2 109 50.5 108 40.6 107 48.2 106 52.2 105 54.1 104 43.8 103 52.0 102 49.8 101 52.7 100 51.3 99 54.2 98 49.3 97 49.8 96 59.0 95 47.1 94 52.6 93 51.5 92 49.8 91 40.0 90 52.5 89 38.5 88 46.3 87 46.6 86 42.8 85 37.0 84 48.0 83 38.3 82 41.0 81 42.8 80 24.4 79 34.7 78 39.3 77 23.4 76 39.8 75 36.2 74 38.6 73 31.5 72 39.9 71 36.1 70 28.5 69 40.2 68 35.8 67 38.9 66 45.4 65 39.8 64 36.5 63 46.2 62 46.5 61 46.0 60 36.6 59 43.9 58 47.6 57 40.3 56 47.4 55 52.5 54 36.9 53 48.9 52 44.1 51 52.9 50 55.1 49 48.5 48 59.7 47 50.2 46 57.2 45 38.6 44 51.4 43 50.1 42 57.3 41 50.1 40 40.1 39 50.4 38 38.8 37 46.7 36 47.6 35 42.7 34 38.7 33 44.9 32 42.7 31 39.6 30 38.3 29 35.4 28 41.0 27 40.7 26 40.0 25 28.7 24 40.2 23 26.3 22 38.0 21 34.4 20 23.6 19 37.6 18 40.9 17 38.7 16 44.4 15 34.8 14 41.6 13 42.1 12 46.8 11 41.6 10 43.0 9 46.1 8 43.6 7 44.7 6 47.8 5 41.9 4 47.0 3 50.5 2 52.1 1 50.5 0 47.6Z" fill="url(#og)"/><path transform="translate(604.5 249.8)" d="M0 16.5 1 33.2 2 19.2 3 24.3 4 15.4 5 30.8 6 11.2 7 24.6 8 11.4 9 17.3 10 11.4 11 17.2 12 6.1 13 22.7 14 13.0 15 11.3 16 11.5 17 25.5 18 19.6 19 15.0 20 20.8 21 15.9 22 15.7 23 27.5 24 13.5 25 16.5 26 31.8 27 23.5 28 17.9 29 28.1 30 24.9 31 24.9 32 37.7 33 29.4 34 22.4 35 31.4 36 25.0 37 35.7 38 25.0 39 40.3 40 21.9 41 29.8 42 17.9 43 25.9 44 29.9 45 21.1 46 26.4 47 20.9 48 23.5 49 19.1 50 18.1 51 15.1 52 14.6 53 21.6 54 8.1 55 15.8 56 22.9 57 16.4 58 7.9 59 23.2 60 21.4 61 12.2 62 14.7 63 26.3 64 9.9 65 20.0 66 12.3 67 25.7 68 16.9 69 16.4 70 23.6 71 21.6 72 32.1 73 21.7 74 21.7 75 38.5 76 21.1 77 29.6 78 26.8 79 25.9 80 26.9 81 35.5 82 21.1 83 31.3 84 17.7 85 28.9 86 31.7 87 21.2 88 19.5 89 32.0 90 28.1 91 19.9 92 26.2 93 17.4 94 15.2 95 31.7 96 23.0 97 15.0 98 18.2 99 18.0 100 6.5 101 14.0 102 3.4 103 13.1 104 8.4 105 22.8 106 8.7 107 18.5 108 7.2 109 18.6 110 18.6 111 24.2 112 11.8 113 23.1 114 33.5 115 19.4 116 22.5 117 21.1 118 26.3 119 24.7 120 18.9 121 25.0 122 36.5 123 24.8 124 33.8 125 28.5 126 23.4 127 25.1 128 24.0 129 26.8 130 34.4 131 26.3 132 21.2 133 29.7 134 19.4 134 47.0 133 48.9 132 40.2 131 45.5 130 51.9 129 39.1 128 46.6 127 50.2 126 55.8 125 41.9 124 53.9 123 51.0 122 53.0 121 42.5 120 54.5 119 36.4 118 47.9 117 47.4 116 46.1 115 41.5 114 48.5 113 40.6 112 34.6 111 43.8 110 38.5 109 37.7 108 39.2 107 36.0 106 35.0 105 39.0 104 40.4 103 39.7 102 36.2 101 35.8 100 39.1 99 43.9 98 41.0 97 33.1 96 46.9 95 40.4 94 40.3 93 44.5 92 47.2 91 36.1 90 51.7 89 45.2 88 47.1 87 48.8 86 49.7 85 49.1 84 52.9 83 49.4 82 41.8 81 54.5 80 45.7 79 49.4 78 55.9 77 48.7 76 43.1 75 47.9 74 47.5 73 41.6 72 52.4 71 34.4 70 48.5 69 46.1 68 39.5 67 41.4 66 29.9 65 37.7 64 36.4 63 41.1 62 40.0 61 28.4 60 42.6 59 37.4 58 25.5 57 42.2 56 39.0 55 35.5 54 42.4 53 39.6 52 44.2 51 40.2 50 44.7 49 39.5 48 51.5 47 43.8 46 49.9 45 37.9 44 49.6 43 47.5 42 50.2 41 47.3 40 46.3 39 50.7 38 37.9 37 49.3 36 49.3 35 48.4 34 50.1 33 51.5 32 51.6 31 39.8 30 55.0 29 44.6 28 47.0 27 47.9 26 45.5 25 33.0 24 50.2 23 41.9 22 31.8 21 40.6 20 42.6 19 28.4 18 40.9 17 36.2 16 39.0 15 37.0 14 35.5 13 39.1 12 28.2 11 37.3 10 39.5 9 44.9 8 36.1 7 41.2 6 29.0 5 42.3 4 34.3 3 44.5 2 33.1 1 46.5 0 50.5Z" fill="url(#og)"/><path transform="translate(604.5 316.8)" d="M0 17.8 1 22.2 2 24.2 3 25.6 4 15.4 5 24.3 6 12.0 7 25.7 8 17.6 9 14.4 10 12.5 11 16.1 12 7.1 13 17.7 14 12.3 15 8.8 16 9.2 17 16.9 18 9.8 19 14.2 20 21.9 21 15.8 22 20.8 23 16.9 24 19.1 25 19.2 26 26.7 27 19.7 28 36.2 29 23.5 30 24.0 31 24.0 32 23.8 33 23.5 34 29.3 35 28.2 36 19.1 37 26.5 38 32.4 39 23.6 40 22.3 41 35.0 42 17.1 43 37.8 44 21.1 45 21.4 46 33.2 47 20.3 48 10.8 49 27.5 50 15.2 51 17.3 52 21.3 53 15.0 54 6.2 55 20.6 56 9.3 57 29.4 58 8.0 59 17.7 60 4.4 61 18.6 62 11.4 63 13.5 64 13.7 65 27.0 66 24.6 67 18.3 68 17.8 69 30.4 70 12.5 71 21.3 72 23.7 73 23.0 74 34.4 75 22.7 76 38.5 77 28.4 78 23.2 79 27.7 80 41.5 81 35.7 82 20.7 83 28.9 84 40.2 85 24.9 86 23.6 87 22.3 88 34.6 89 25.1 90 13.8 91 22.5 92 19.4 93 14.5 94 17.3 95 20.8 96 12.2 97 15.4 98 14.0 99 8.7 100 20.9 101 13.7 102 8.6 103 12.4 104 8.8 105 12.7 106 11.2 107 16.8 108 5.6 109 14.6 110 11.3 111 17.8 112 14.4 113 20.8 114 14.9 115 19.8 116 29.7 117 18.9 118 36.3 119 21.9 120 33.2 121 23.7 122 30.0 123 19.6 124 22.5 125 26.7 126 19.7 127 35.2 128 24.0 129 28.1 130 21.7 131 35.7 132 19.0 133 25.7 134 33.5 134 47.0 133 43.4 132 52.9 131 47.6 130 39.2 129 53.1 128 39.6 127 48.6 126 53.7 125 48.9 124 56.3 123 45.6 122 51.8 121 39.9 120 52.3 119 42.4 118 50.6 117 37.9 116 46.9 115 40.9 114 44.2 113 34.3 112 43.7 111 42.2 110 41.3 109 38.6 108 36.6 107 34.7 106 39.6 105 42.2 104 37.9 103 37.3 102 44.0 101 33.9 100 41.0 99 26.2 98 40.2 97 41.5 96 39.3 95 39.8 94 47.6 93 38.6 92 43.4 91 48.9 90 44.4 89 41.2 88 50.1 87 42.2 86 52.0 85 44.5 84 57.6 83 47.9 82 52.1 81 52.9 80 51.1 79 44.1 78 53.3 77 40.8 76 52.4 75 43.4 74 49.3 73 34.6 72 50.5 71 43.5 70 43.8 69 44.3 68 43.1 67 39.9 66 45.1 65 37.3 64 35.3 63 38.5 62 41.5 61 39.6 60 29.2 59 36.5 58 34.7 57 41.1 56 36.9 55 39.7 54 30.3 53 37.3 52 43.3 51 28.2 50 32.4 49 41.1 48 47.4 47 33.6 46 50.8 45 44.5 44 40.6 43 46.9 42 47.4 41 49.0 40 49.7 39 50.2 38 51.3 37 49.1 36 51.3 35 40.2 34 53.2 33 50.1 32 49.4 31 46.7 30 50.8 29 38.2 28 50.9 27 41.1 26 46.7 25 32.6 24 48.0 23 41.2 22 41.0 21 33.7 20 40.4 19 36.9 18 42.0 17 38.0 16 44.7 15 35.1 14 24.8 13 38.5 12 44.4 11 33.2 10 39.6 9 42.7 8 28.0 7 39.9 6 43.1 5 42.6 4 32.0 3 46.5 2 47.7 1 46.1 0 49.2Z" fill="url(#og)"/><path transform="translate(19.8 411.9)" d="M0 0.5 1 11.6 2 18.5 3 19.1 4 29.3 5 26.3 6 29.2 7 32.9 8 28.7 9 36.9 10 32.7 11 0.5 12 16.8 13 14.4 14 24.5 15 19.5 16 27.1 17 31.8 18 29.3 19 33.5 20 30.6 21 31.1 22 3.4 23 5.6 24 14.5 25 30.1 26 20.3 27 28.7 28 26.0 29 27.0 30 34.3 31 28.5 32 33.3 33 21.1 34 4.2 35 21.7 36 13.6 37 22.8 38 28.3 39 24.3 40 35.8 41 28.7 42 31.7 43 32.8 44 26.0 45 3.1 46 22.5 47 14.5 48 22.4 49 23.7 50 24.0 51 35.0 52 27.2 53 31.1 54 31.9 55 31.7 56 3.7 57 17.4 58 14.1 59 19.4 60 24.9 61 24.7 62 34.7 63 29.1 64 29.7 65 32.5 66 29.8 67 8.2 68 7.8 69 27.0 70 16.4 71 23.5 72 23.8 73 28.3 74 32.8 75 30.0 76 33.1 77 32.5 78 7.3 79 1.8 80 17.6 81 20.8 82 23.1 83 32.5 84 28.0 85 30.6 86 30.5 87 31.0 88 38.5 89 2.1 90 16.7 91 11.2 92 16.8 93 19.1 94 22.9 95 34.3 96 28.0 97 31.9 98 29.4 99 30.1 100 14.3 101 10.5 102 7.0 103 18.6 104 22.1 105 22.1 106 35.0 107 26.3 108 28.3 109 33.1 110 30.5 111 39.7 112 4.4 113 6.4 114 21.6 115 19.6 116 23.4 117 28.4 118 25.7 119 38.9 120 29.5 121 32.6 122 32.8 123 0.5 124 13.0 125 13.7 126 19.1 127 32.0 128 25.1 129 27.9 130 26.7 131 31.3 132 38.0 133 31.8 134 1.2 134 46.4 133 39.9 132 45.2 131 42.4 130 45.6 129 42.2 128 38.6 127 42.0 126 33.7 125 38.0 124 32.2 123 44.1 122 46.4 121 45.4 120 41.6 119 46.4 118 40.0 117 45.4 116 40.4 115 40.5 114 37.3 113 23.6 112 31.9 111 45.8 110 40.3 109 46.6 108 44.2 107 44.5 106 43.1 105 35.5 104 42.3 103 38.0 102 34.7 101 28.1 100 44.6 99 42.8 98 47.2 97 43.6 96 39.7 95 43.0 94 39.1 93 42.5 92 38.1 91 33.4 90 30.5 89 34.4 88 45.9 87 42.6 86 45.2 85 45.1 84 40.3 83 43.2 82 34.0 81 40.1 80 35.2 79 32.9 78 45.0 77 47.4 76 43.8 75 40.5 74 46.0 73 39.8 72 44.1 71 41.6 70 36.0 69 36.1 68 22.3 67 39.0 66 44.7 65 45.4 64 45.5 63 41.3 62 43.6 61 36.2 60 43.3 59 40.3 58 35.7 57 33.9 56 16.8 55 46.0 54 45.6 53 45.5 52 38.5 51 44.4 50 41.7 49 41.0 48 40.0 47 33.5 46 36.0 45 19.3 44 41.5 43 46.7 42 46.4 41 45.0 40 44.9 39 35.1 38 42.6 37 40.2 36 40.9 35 36.0 34 22.6 33 35.9 32 45.4 31 41.1 30 44.0 29 43.8 28 44.8 27 41.9 26 36.9 25 40.3 24 25.7 23 34.8 22 39.4 21 45.4 20 42.3 19 46.4 18 37.3 17 44.3 16 43.8 15 41.1 14 38.1 13 32.2 12 34.8 11 47.9 10 45.6 9 44.1 8 37.7 7 44.5 6 42.0 5 44.6 4 40.5 3 29.9 2 38.1 1 30.6 0 33.1Z" fill="url(#og)"/><path transform="translate(19.8 478.9)" d="M0 13.2 1 6.2 2 17.2 3 16.6 4 22.6 5 30.1 6 25.1 7 33.7 8 31.1 9 31.7 10 34.0 11 16.5 12 5.4 13 19.8 14 15.2 15 23.2 16 26.4 17 27.3 18 34.1 19 29.1 20 33.1 21 31.1 22 10.6 23 9.4 24 20.8 25 18.4 26 30.5 27 24.2 28 28.8 29 29.9 30 27.7 31 36.7 32 30.8 33 12.8 34 1.7 35 15.1 36 17.3 37 19.9 38 31.8 39 27.7 40 30.1 41 29.5 42 30.3 43 35.8 44 7.0 45 15.0 46 10.0 47 19.3 48 20.0 49 22.9 50 35.1 51 28.9 52 28.4 53 28.9 54 32.4 55 38.0 56 0.5 57 11.1 58 16.6 59 19.7 60 32.8 61 27.7 62 28.5 63 30.2 64 32.1 65 38.2 66 29.8 67 2.8 68 6.0 69 14.5 70 28.5 71 21.7 72 29.0 73 28.0 74 30.2 75 35.6 76 31.2 77 35.9 78 10.6 79 6.6 80 18.3 81 16.2 82 26.5 83 24.1 84 25.6 85 30.0 86 29.3 87 38.3 88 33.1 89 0.5 90 12.6 91 10.5 92 24.6 93 20.3 94 23.7 95 30.3 96 28.7 97 36.4 98 30.2 99 33.4 100 0.5 101 12.1 102 10.9 103 18.3 104 20.0 105 25.3 106 32.7 107 27.9 108 32.0 109 28.3 110 32.5 111 35.6 112 0.6 113 17.6 114 14.8 115 22.5 116 26.0 117 25.9 118 36.7 119 28.4 120 29.8 121 32.3 122 28.8 123 0.6 124 13.2 125 13.7 126 26.0 127 21.5 128 25.4 129 30.4 130 28.7 131 38.5 132 28.1 133 29.6 134 0.5 134 34.8 133 45.5 132 42.6 131 45.4 130 41.0 129 45.8 128 41.8 127 43.0 126 40.8 125 27.2 124 34.8 123 38.6 122 41.6 121 45.5 120 44.3 119 42.5 118 45.1 117 37.5 116 44.0 115 38.5 114 37.5 113 33.8 112 17.9 111 44.7 110 44.8 109 44.9 108 43.1 107 36.6 106 44.8 105 40.0 104 40.4 103 38.2 102 28.9 101 32.2 100 46.0 99 44.0 98 43.4 97 43.4 96 38.5 95 43.7 94 40.0 93 41.3 92 39.7 91 26.1 90 31.9 89 46.5 88 44.7 87 44.1 86 36.7 85 45.7 84 44.9 83 41.3 82 42.8 81 31.9 80 37.2 79 24.6 78 30.3 77 46.9 76 39.2 75 44.6 74 41.7 73 44.1 72 43.4 71 36.2 70 40.0 69 28.7 68 33.6 67 45.0 66 38.6 65 44.8 64 40.4 63 44.5 62 44.0 61 41.6 60 40.4 59 31.6 58 38.3 57 32.1 56 29.7 55 47.1 54 44.3 53 44.9 52 45.4 51 38.6 50 45.4 49 36.2 48 42.2 47 36.5 46 34.0 45 27.5 44 39.0 43 47.6 42 46.6 41 45.6 40 46.1 39 36.6 38 44.3 37 38.9 36 39.0 35 35.0 34 25.4 33 44.7 32 41.6 31 46.0 30 38.7 29 45.1 28 44.2 27 41.1 26 41.8 25 31.8 24 38.0 23 26.9 22 41.9 21 44.2 20 44.7 19 44.8 18 46.2 17 37.3 16 44.4 15 38.6 14 41.7 13 38.4 12 27.5 11 38.8 10 45.2 9 46.8 8 42.9 7 44.6 6 35.6 5 43.4 4 40.9 3 39.7 2 37.2 1 28.1 0 29.4Z" fill="url(#og)"/><path transform="translate(165.9 411.9)" d="M0 15.4 1 5.2 2 15.9 3 18.2 4 20.1 5 33.6 6 19.1 7 25.2 8 24.5 9 25.9 10 8.5 11 0.5 12 10.6 13 15.4 14 15.9 15 32.4 16 19.8 17 24.6 18 21.3 19 22.6 20 33.9 21 0.5 22 16.5 23 8.5 24 20.5 25 14.9 26 21.3 27 30.1 28 19.9 29 29.5 30 23.4 31 24.0 32 26.1 33 4.7 34 21.3 35 13.2 36 18.8 37 21.2 38 20.0 39 33.7 40 23.9 41 26.4 42 24.7 43 0.5 44 18.7 45 9.5 46 21.2 47 15.1 48 19.6 49 27.6 50 21.9 51 32.3 52 23.2 53 23.3 54 16.6 55 7.6 56 30.9 57 15.4 58 22.1 59 19.3 60 22.9 61 32.7 62 24.0 63 32.7 64 22.9 65 0.5 66 12.3 67 13.2 68 15.5 69 31.1 70 21.7 71 24.9 72 20.4 73 24.4 74 29.9 75 26.1 76 5.5 77 25.2 78 12.0 79 20.5 80 20.2 81 19.9 82 33.8 83 23.9 84 30.4 85 22.6 86 1.3 87 4.1 88 12.7 89 26.9 90 16.8 91 21.2 92 23.0 93 22.2 94 30.8 95 26.6 96 31.2 97 0.9 98 25.8 99 8.2 100 16.1 101 16.6 102 19.8 103 34.2 104 22.5 105 27.1 106 25.9 107 24.1 108 3.1 109 10.2 110 15.1 111 30.4 112 15.8 113 24.8 114 19.7 115 20.7 116 34.6 117 25.3 118 28.0 119 7.9 120 17.1 121 14.3 122 24.1 123 17.0 124 18.3 125 23.0 126 24.7 127 37.8 128 26.8 129 31.8 130 2.9 131 28.6 132 12.9 133 21.0 134 14.7 134 45.8 133 47.0 132 38.8 131 44.2 130 34.0 129 49.8 128 41.5 127 48.6 126 38.8 125 46.4 124 48.6 123 46.5 122 46.6 121 28.4 120 42.3 119 39.7 118 46.7 117 39.1 116 50.1 115 45.7 114 49.6 113 48.7 112 38.1 111 46.1 110 33.3 109 43.7 108 33.2 107 46.7 106 46.0 105 48.0 104 38.9 103 48.5 102 44.8 101 46.8 100 45.8 99 36.5 98 43.2 97 27.1 96 46.4 95 35.3 94 50.6 93 46.6 92 49.2 91 47.0 90 36.1 89 47.0 88 35.0 87 40.5 86 49.2 85 46.2 84 48.7 83 39.2 82 48.7 81 43.7 80 47.0 79 44.6 78 35.5 77 41.4 76 31.6 75 39.6 74 49.3 73 47.7 72 50.1 71 46.9 70 38.1 69 46.2 68 38.3 67 43.3 66 42.5 65 34.9 64 49.3 63 49.0 62 39.8 61 47.2 60 46.2 59 46.6 58 45.3 57 39.9 56 42.3 55 31.5 54 41.7 53 50.6 52 47.4 51 49.8 50 37.8 49 46.6 48 46.8 47 44.3 46 43.7 45 29.4 44 43.1 43 43.4 42 46.6 41 48.7 40 45.4 39 46.5 38 39.5 37 47.8 36 48.1 35 44.2 34 43.1 33 22.8 32 44.9 31 48.3 30 43.9 29 47.0 28 37.6 27 45.8 26 44.2 25 47.9 24 45.5 23 31.6 22 40.2 21 32.6 20 49.7 19 45.6 18 47.2 17 48.4 16 41.6 15 46.7 14 33.3 13 46.6 12 38.6 11 38.6 10 47.7 9 47.3 8 48.1 7 48.8 6 39.8 5 48.5 4 37.9 3 44.8 2 44.6 1 39.8 0 38.2Z" fill="url(#og)"/><path transform="translate(165.9 478.9)" d="M0 20.2 1 7.2 2 14.5 3 17.8 4 16.8 5 35.6 6 22.6 7 28.7 8 25.1 9 25.8 10 32.0 11 3.2 12 14.4 13 11.4 14 25.5 15 19.4 16 20.0 17 26.9 18 21.3 19 38.1 20 24.2 21 2.3 22 1.8 23 10.4 24 22.3 25 15.8 26 27.8 27 19.5 28 22.6 29 27.3 30 24.0 31 33.5 32 13.0 33 3.1 34 14.3 35 17.7 36 15.2 37 34.6 38 21.0 39 20.8 40 24.4 41 23.9 42 34.2 43 4.5 44 22.0 45 11.8 46 19.3 47 18.4 48 18.6 49 26.2 50 21.6 51 32.8 52 24.1 53 25.0 54 10.0 55 7.5 56 23.4 57 18.6 58 22.8 59 20.0 60 22.9 61 26.6 62 23.7 63 35.7 64 22.7 65 15.9 66 8.4 67 24.1 68 16.3 69 19.1 70 27.7 71 20.6 72 36.5 73 23.8 74 27.1 75 28.7 76 7.3 77 29.0 78 13.7 79 18.7 80 20.7 81 19.8 82 32.0 83 23.3 84 25.0 85 27.2 86 0.5 87 16.5 88 9.1 89 20.6 90 17.5 91 21.4 92 25.6 93 21.8 94 35.7 95 23.8 96 27.8 97 0.5 98 22.7 99 12.4 100 18.5 101 14.9 102 21.6 103 35.8 104 21.5 105 26.7 106 25.4 107 24.2 108 24.0 109 8.5 110 21.8 111 12.9 112 17.2 113 21.1 114 21.9 115 36.7 116 24.5 117 25.7 118 25.4 119 5.7 120 8.7 121 13.7 122 34.7 123 15.7 124 24.1 125 22.5 126 25.2 127 35.3 128 27.3 129 0.5 130 5.9 131 9.6 132 28.7 133 15.9 134 23.8 134 43.7 133 40.2 132 44.1 131 31.3 130 40.7 129 48.9 128 36.7 127 49.1 126 45.6 125 47.9 124 47.2 123 40.3 122 46.6 121 34.2 120 44.1 119 38.8 118 50.7 117 47.0 116 45.0 115 47.9 114 36.4 113 46.5 112 48.1 111 46.0 110 44.8 109 23.2 108 39.1 107 45.7 106 51.1 105 49.8 104 41.5 103 46.9 102 39.5 101 48.4 100 46.1 99 40.0 98 42.1 97 34.2 96 46.2 95 46.1 94 48.6 93 37.8 92 48.3 91 48.8 90 44.0 89 45.2 88 29.7 87 42.6 86 49.7 85 46.8 84 50.1 83 40.0 82 47.4 81 42.4 80 47.0 79 46.8 78 40.5 77 43.8 76 29.1 75 49.2 74 49.0 73 42.7 72 45.3 71 38.3 70 49.8 69 44.7 68 45.5 67 43.7 66 26.4 65 41.1 64 43.8 63 50.0 62 38.5 61 45.8 60 46.5 59 47.6 58 47.5 57 32.5 56 45.6 55 35.7 54 42.0 53 46.6 52 44.9 51 49.1 50 36.1 49 49.0 48 46.6 47 45.9 46 46.5 45 30.8 44 43.1 43 31.9 42 48.5 41 41.6 40 48.5 39 49.4 38 41.2 37 47.1 36 33.9 35 44.8 34 42.9 33 39.6 32 30.2 31 49.2 30 39.7 29 49.8 28 48.0 27 47.9 26 46.4 25 34.7 24 44.5 23 38.5 22 41.3 21 50.5 20 45.8 19 48.2 18 40.5 17 48.6 16 45.3 15 47.3 14 44.1 13 30.7 12 41.6 11 37.9 10 48.7 9 46.7 8 48.4 7 48.1 6 38.2 5 48.4 4 40.8 3 45.3 2 41.4 1 37.4 0 40.0Z" fill="url(#og)"/><path transform="translate(312.1 411.9)" d="M0 1.5 1 16.0 2 32.3 3 21.1 4 19.6 5 19.8 6 17.9 7 15.9 8 21.1 9 16.5 10 19.6 11 30.4 12 16.9 13 26.0 14 5.4 15 27.5 16 14.6 17 20.1 18 19.4 19 24.7 20 33.0 21 16.8 22 17.9 23 32.3 24 17.5 25 25.2 26 19.2 27 25.2 28 25.7 29 20.3 30 18.9 31 23.9 32 22.8 33 33.5 34 21.4 35 20.6 36 20.9 37 27.7 38 21.8 39 28.4 40 21.6 41 28.2 42 28.2 43 26.5 44 19.8 45 24.1 46 20.8 47 33.9 48 27.7 49 29.6 50 14.7 51 23.4 52 25.5 53 24.3 54 32.0 55 26.8 56 16.3 57 22.7 58 18.9 59 28.5 60 25.3 61 29.0 62 21.5 63 22.6 64 15.4 65 23.0 66 27.0 67 24.0 68 27.3 69 28.7 70 25.6 71 20.4 72 22.8 73 24.5 74 18.7 75 27.9 76 25.5 77 12.1 78 15.4 79 33.1 80 17.3 81 24.1 82 20.9 83 25.1 84 28.0 85 16.6 86 15.3 87 19.6 88 14.4 89 34.9 90 17.9 91 14.5 92 11.2 93 19.0 94 32.4 95 23.4 96 23.6 97 25.3 98 5.4 99 16.1 100 28.7 101 18.8 102 23.5 103 19.9 104 19.3 105 34.5 106 13.7 107 22.1 108 19.1 109 21.7 110 31.0 111 25.1 112 20.8 113 17.0 114 25.7 115 19.8 116 22.6 117 29.6 118 26.7 119 16.5 120 31.2 121 21.1 122 20.7 123 29.2 124 21.6 125 32.2 126 9.1 127 19.8 128 33.4 129 24.7 130 22.5 131 28.2 132 24.4 133 19.0 134 18.4 134 46.1 133 41.0 132 40.3 131 36.4 130 39.6 129 35.8 128 46.2 127 38.9 126 49.0 125 39.0 124 36.0 123 40.3 122 42.4 121 37.8 120 46.2 119 35.0 118 33.0 117 39.9 116 44.8 115 40.8 114 45.5 113 32.6 112 52.3 111 34.0 110 44.9 109 40.0 108 47.4 107 41.0 106 35.9 105 44.2 104 43.7 103 39.9 102 46.6 101 37.9 100 51.8 99 42.0 98 54.3 97 41.3 96 47.4 95 37.3 94 49.9 93 38.2 92 53.4 91 54.5 90 35.9 89 44.4 88 39.4 87 41.8 86 51.4 85 44.0 84 57.4 83 39.5 82 45.0 81 43.2 80 39.6 79 46.0 78 44.9 77 49.6 76 36.2 75 41.3 74 44.3 73 38.1 72 47.5 71 33.2 70 45.6 69 41.3 68 43.8 67 32.7 66 41.3 65 38.3 64 45.6 63 45.0 62 37.9 61 38.3 60 33.4 59 41.6 58 41.8 57 42.4 56 47.9 55 33.7 54 41.4 53 37.7 52 44.5 51 43.2 50 41.0 49 42.6 48 33.4 47 39.3 46 40.4 45 40.2 44 45.8 43 36.2 42 45.1 41 37.9 40 36.9 39 37.7 38 33.5 37 41.5 36 45.5 35 42.7 34 36.6 33 41.1 32 40.2 31 41.9 30 49.3 29 40.8 28 54.3 27 38.1 26 44.4 25 42.3 24 37.6 23 42.5 22 44.6 21 44.8 20 43.0 19 36.9 18 46.7 17 44.6 16 43.4 15 46.5 14 38.8 13 40.6 12 30.3 11 40.3 10 47.2 9 45.3 8 49.4 7 35.0 6 41.6 5 40.1 4 44.9 3 37.4 2 51.4 1 43.9 0 55.3Z" fill="url(#og)"/><path transform="translate(312.1 478.9)" d="M0 22.9 1 19.1 2 19.0 3 25.7 4 15.5 5 31.0 6 24.0 7 23.5 8 15.4 9 27.7 10 15.0 11 24.3 12 19.3 13 23.9 14 30.1 15 15.0 16 19.2 17 22.1 18 20.2 19 32.0 20 18.4 21 23.5 22 14.0 23 23.2 24 19.0 25 24.4 26 29.7 27 23.7 28 20.2 29 21.1 30 30.6 31 23.8 32 26.0 33 25.1 34 24.2 35 14.5 36 18.6 37 23.0 38 24.0 39 30.5 40 22.5 41 31.5 42 13.9 43 23.5 44 19.7 45 23.3 46 25.0 47 25.6 48 28.9 49 22.5 50 18.1 51 32.1 52 20.2 53 27.2 54 25.4 55 29.8 56 25.7 57 26.4 58 22.9 59 27.8 60 26.6 61 31.3 62 26.3 63 16.6 64 16.2 65 25.1 66 19.1 67 34.7 68 20.7 69 29.7 70 12.1 71 23.3 72 21.8 73 21.3 74 24.0 75 22.8 76 26.1 77 19.4 78 13.8 79 20.2 80 30.5 81 23.3 82 28.2 83 22.6 84 1.8 85 18.7 86 23.1 87 20.0 88 23.7 89 21.4 90 16.2 91 21.5 92 9.6 93 21.0 94 25.5 95 22.4 96 26.6 97 21.5 98 15.1 99 18.2 100 31.7 101 21.1 102 18.0 103 24.5 104 21.7 105 9.9 106 37.4 107 17.7 108 20.0 109 21.5 110 21.4 111 32.4 112 13.6 113 20.3 114 20.7 115 24.9 116 31.6 117 24.2 118 29.6 119 15.2 120 17.2 121 20.2 122 28.9 123 22.8 124 23.4 125 24.5 126 13.9 127 26.6 128 19.5 129 25.1 130 26.2 131 26.3 132 32.2 133 25.9 134 17.0 134 43.6 133 42.8 132 41.3 131 31.4 130 41.9 129 38.2 128 43.3 127 43.6 126 33.7 125 40.1 124 43.2 123 39.6 122 45.8 121 37.5 120 48.2 119 47.9 118 40.5 117 33.6 116 40.9 115 39.4 114 42.8 113 44.2 112 42.2 111 42.3 110 41.4 109 41.8 108 47.9 107 36.5 106 54.1 105 44.2 104 41.1 103 39.1 102 45.4 101 36.6 100 46.9 99 37.7 98 53.6 97 40.6 96 44.1 95 31.5 94 49.2 93 45.0 92 52.3 91 51.7 90 43.7 89 41.3 88 47.1 87 33.6 86 50.1 85 48.0 84 57.4 83 40.2 82 44.9 81 35.8 80 45.2 79 42.3 78 52.4 77 49.1 76 43.0 75 30.3 74 45.4 73 41.6 72 43.4 71 41.3 70 39.3 69 41.2 68 35.2 67 40.6 66 37.4 65 40.1 64 46.6 63 41.3 62 37.1 61 37.1 60 35.4 59 39.7 58 42.6 57 37.4 56 45.3 55 35.3 54 38.9 53 38.2 52 40.2 51 41.4 50 38.7 49 43.3 48 41.9 47 34.1 46 41.7 45 38.3 44 43.9 43 43.8 42 33.3 41 40.2 40 33.1 39 38.9 38 38.0 37 39.8 36 45.3 35 39.0 34 39.9 33 40.1 32 39.7 31 37.3 30 43.5 29 37.0 28 44.9 27 39.7 26 41.9 25 37.1 24 43.6 23 42.4 22 46.4 21 51.8 20 37.2 19 42.4 18 40.4 17 42.0 16 49.5 15 41.6 14 57.6 13 35.4 12 45.3 11 41.2 10 43.3 9 46.0 8 35.6 7 45.7 6 43.2 5 42.6 4 32.4 3 44.4 2 49.0 1 43.0 0 51.4Z" fill="url(#og)"/><path transform="translate(458.3 411.9)" d="M0 32.6 1 22.1 2 29.7 3 28.0 4 31.1 5 34.2 6 29.1 7 18.0 8 28.5 9 27.8 10 29.1 11 27.7 12 30.2 13 31.9 14 14.6 15 16.1 16 25.9 17 32.3 18 28.0 19 29.4 20 28.3 21 5.3 22 22.2 23 31.8 24 26.0 25 31.8 26 28.0 27 28.1 28 13.0 29 23.4 30 27.2 31 29.8 32 34.4 33 28.6 34 31.2 35 19.4 36 25.1 37 30.0 38 28.8 39 30.4 40 29.7 41 29.1 42 17.5 43 26.7 44 32.3 45 29.7 46 30.9 47 29.0 48 29.1 49 11.7 50 25.9 51 27.2 52 28.3 53 31.7 54 28.5 55 30.5 56 5.6 57 24.0 58 31.5 59 28.4 60 31.4 61 28.0 62 29.0 63 18.5 64 17.4 65 25.7 66 32.3 67 29.6 68 30.7 69 28.0 70 17.2 71 27.9 72 28.5 73 28.6 74 29.2 75 29.6 76 32.7 77 19.3 78 22.0 79 30.7 80 26.4 81 28.1 82 29.0 83 28.3 84 15.8 85 31.3 86 26.6 87 29.7 88 27.6 89 27.7 90 31.0 91 16.0 92 30.7 93 26.6 94 27.5 95 30.8 96 28.8 97 33.0 98 16.3 99 17.3 100 24.5 101 31.0 102 27.5 103 31.7 104 28.0 105 31.2 106 24.1 107 28.6 108 29.1 109 28.9 110 30.1 111 28.3 112 8.3 113 29.2 114 23.4 115 26.4 116 28.7 117 29.4 118 32.8 119 20.5 120 32.0 121 26.9 122 29.9 123 29.0 124 30.5 125 30.9 126 16.2 127 24.7 128 31.8 129 28.4 130 29.1 131 31.3 132 29.2 133 17.2 134 29.1 134 42.6 133 32.4 132 35.2 131 37.2 130 35.2 129 33.5 128 39.1 127 37.6 126 45.7 125 36.0 124 35.3 123 36.5 122 37.0 121 33.9 120 40.9 119 36.9 118 36.8 117 33.5 116 36.4 115 37.8 114 36.3 113 46.7 112 31.9 111 31.6 110 36.0 109 36.0 108 36.4 107 38.4 106 34.7 105 44.1 104 35.8 103 36.7 102 34.4 101 37.7 100 39.7 99 42.1 98 56.9 97 36.0 96 32.8 95 35.2 94 38.5 93 36.4 92 40.9 91 34.3 90 35.4 89 35.3 88 34.7 87 37.8 86 34.9 85 40.8 84 49.4 83 33.4 82 36.2 81 37.2 80 37.0 79 38.2 78 35.4 77 45.6 76 37.2 75 34.1 74 37.5 73 36.1 72 36.2 71 39.6 70 33.8 69 34.1 68 36.7 67 33.4 66 37.1 65 37.1 64 42.9 63 56.5 62 35.8 61 35.4 60 36.6 59 34.6 58 39.7 57 41.5 56 47.8 55 37.1 54 34.6 53 37.5 52 34.3 51 37.0 50 44.2 49 44.7 48 34.7 47 36.9 46 36.5 45 34.9 44 37.7 43 38.2 42 42.4 41 36.7 40 34.0 39 36.6 38 33.8 37 37.5 36 37.4 35 41.2 34 36.5 33 33.5 32 37.1 31 36.3 30 37.7 29 44.1 28 43.9 27 34.8 26 35.1 25 38.3 24 35.1 23 38.2 22 43.7 21 46.9 20 36.7 19 36.6 18 32.9 17 38.2 16 40.8 15 43.0 14 59.2 13 35.6 12 34.7 11 35.3 10 35.4 9 34.8 8 41.8 7 46.7 6 33.7 5 36.4 4 33.8 3 37.5 2 40.1 1 35.2 0 45.7Z" fill="url(#og)"/><path transform="translate(458.3 478.9)" d="M0 26.0 1 21.1 2 30.4 3 26.8 4 28.5 5 31.0 6 28.4 7 19.8 8 25.8 9 28.9 10 28.9 11 34.3 12 27.9 13 30.8 14 20.0 15 24.8 16 27.1 17 33.2 18 28.4 19 29.0 20 30.8 21 9.6 22 24.6 23 23.6 24 28.3 25 33.1 26 29.0 27 29.7 28 17.7 29 20.1 30 25.5 31 33.6 32 29.5 33 32.1 34 29.9 35 23.1 36 29.1 37 25.8 38 30.6 39 28.0 40 29.2 41 31.4 42 18.0 43 25.4 44 29.9 45 29.7 46 32.0 47 29.7 48 30.2 49 15.2 50 19.3 51 24.4 52 32.5 53 28.3 54 30.9 55 29.1 56 10.6 57 23.8 58 26.1 59 28.3 60 33.3 61 28.7 62 32.5 63 23.7 64 20.5 65 30.7 66 28.2 67 30.8 68 28.6 69 29.5 70 19.8 71 23.9 72 26.2 73 32.0 74 29.1 75 30.2 76 30.6 77 18.5 78 28.8 79 27.9 80 28.5 81 30.2 82 31.3 83 32.6 84 21.3 85 24.2 86 26.7 87 32.0 88 28.6 89 28.4 90 29.7 91 21.4 92 30.7 93 27.2 94 29.6 95 31.8 96 29.0 97 32.9 98 20.7 99 25.3 100 34.2 101 27.8 102 31.4 103 28.1 104 30.4 105 19.5 106 33.6 107 26.2 108 28.6 109 29.5 110 29.0 111 30.3 112 13.8 113 29.9 114 26.6 115 27.6 116 27.7 117 28.8 118 31.6 119 24.4 120 19.6 121 27.8 122 28.4 123 28.9 124 30.1 125 29.2 126 17.5 127 23.5 128 31.7 129 28.5 130 30.9 131 29.8 132 30.3 133 25.3 134 25.9 134 33.1 133 43.3 132 35.4 131 36.7 130 36.3 129 33.3 128 38.5 127 37.7 126 44.0 125 36.0 124 36.7 123 33.2 122 37.4 121 39.2 120 40.7 119 49.7 118 36.0 117 33.5 116 37.2 115 37.3 114 36.7 113 41.5 112 33.4 111 37.1 110 34.7 109 36.6 108 38.4 107 35.1 106 38.8 105 42.5 104 34.9 103 35.2 102 36.3 101 33.2 100 36.4 99 36.9 98 41.8 97 36.6 96 33.6 95 36.6 94 34.8 93 36.2 92 41.0 91 34.3 90 36.7 89 36.1 88 36.1 87 37.0 86 33.1 85 39.9 84 48.4 83 36.3 82 33.4 81 36.0 80 35.3 79 37.5 78 39.1 77 37.6 76 36.5 75 36.5 74 33.3 73 36.8 72 36.9 71 40.1 70 50.1 69 32.5 68 36.1 67 38.0 66 34.9 65 39.2 64 32.1 63 48.3 62 36.3 61 33.5 60 36.0 59 35.1 58 38.6 57 45.2 56 42.2 55 36.2 54 37.6 53 33.9 52 37.9 51 36.8 50 42.6 49 56.8 48 36.2 47 36.7 46 35.5 45 32.7 44 36.7 43 40.6 42 41.2 41 35.4 40 36.2 39 35.0 38 35.8 37 33.6 36 39.6 35 48.4 34 36.4 33 36.7 32 33.9 31 38.1 30 37.7 29 41.1 28 55.0 27 35.2 26 34.7 25 37.3 24 35.4 23 37.6 22 46.4 21 39.7 20 36.4 19 36.2 18 36.2 17 36.4 16 34.3 15 38.8 14 46.8 13 34.8 12 36.1 11 36.4 10 33.1 9 37.7 8 41.4 7 38.3 6 33.8 5 35.1 4 36.7 3 37.0 2 40.4 1 34.0 0 47.0Z" fill="url(#og)"/><path transform="translate(604.5 411.9)" d="M0 20.1 1 29.3 2 25.9 3 27.9 4 31.0 5 30.5 6 30.1 7 29.0 8 20.0 9 31.5 10 25.6 11 31.6 12 28.8 13 29.1 14 30.7 15 29.3 16 15.0 17 25.6 18 28.3 19 28.7 20 32.2 21 28.1 22 28.6 23 29.3 24 20.3 25 23.3 26 32.1 27 27.0 28 28.1 29 31.0 30 29.7 31 31.5 32 9.9 33 22.2 34 29.7 35 27.1 36 29.6 37 30.4 38 31.0 39 32.5 40 22.5 41 27.4 42 25.5 43 29.7 44 33.3 45 29.8 46 30.5 47 28.9 48 23.8 49 29.1 50 26.6 51 31.5 52 29.6 53 29.0 54 28.6 55 29.2 56 22.4 57 29.0 58 26.6 59 31.5 60 28.5 61 29.1 62 29.9 63 28.5 64 31.2 65 23.6 66 28.0 67 28.9 68 28.5 69 32.2 70 30.3 71 31.5 72 23.4 73 25.9 74 26.4 75 33.7 76 28.4 77 29.0 78 27.8 79 28.7 80 21.1 81 29.6 82 26.1 83 31.1 84 28.1 85 30.4 86 31.8 87 31.3 88 15.3 89 19.1 90 26.6 91 33.4 92 29.0 93 29.0 94 29.6 95 28.4 96 27.8 97 23.1 98 27.7 99 27.3 100 28.7 101 33.5 102 29.6 103 31.1 104 18.7 105 26.6 106 30.2 107 29.3 108 32.3 109 28.0 110 31.9 111 31.2 112 16.3 113 27.4 114 25.0 115 29.8 116 29.1 117 27.7 118 29.9 119 29.7 120 19.0 121 32.2 122 24.3 123 29.3 124 28.9 125 28.0 126 31.9 127 28.6 128 25.2 129 26.2 130 27.9 131 30.7 132 28.2 133 29.7 134 30.5 134 35.0 133 35.5 132 34.1 131 36.8 130 35.6 129 38.1 128 43.6 127 35.2 126 35.6 125 33.8 124 36.8 123 37.2 122 36.1 121 40.3 120 34.0 119 31.7 118 35.6 117 35.0 116 36.1 115 38.1 114 34.1 113 43.7 112 48.4 111 36.6 110 34.3 109 34.4 108 37.4 107 35.7 106 37.9 105 41.9 104 38.5 103 36.8 102 35.7 101 34.8 100 35.4 99 38.3 98 39.8 97 37.0 96 45.7 95 33.8 94 36.2 93 36.6 92 33.8 91 38.8 90 35.9 89 42.5 88 55.2 87 33.7 86 36.2 85 36.0 84 37.1 83 36.8 82 34.8 81 39.3 80 42.9 79 35.2 78 37.1 77 37.2 76 36.1 75 37.9 74 34.1 73 38.0 72 46.9 71 35.3 70 33.0 69 37.2 68 36.9 67 35.8 66 37.6 65 34.3 64 43.3 63 35.7 62 37.1 61 36.7 60 35.6 59 37.5 58 33.7 57 39.8 56 44.2 55 33.9 54 34.8 53 37.2 52 35.1 51 36.6 50 34.1 49 38.7 48 41.7 47 34.8 46 35.8 45 33.9 44 37.2 43 34.6 42 38.7 41 40.3 40 34.9 39 37.3 38 35.3 37 37.0 36 36.7 35 33.2 34 39.4 33 42.6 32 45.6 31 35.7 30 33.5 29 35.8 28 37.5 27 36.7 26 39.7 25 35.7 24 43.9 23 35.1 22 35.3 21 34.5 20 36.8 19 36.4 18 38.0 17 41.6 16 38.9 15 33.8 14 36.2 13 34.0 12 37.2 11 38.0 10 32.2 9 40.3 8 42.3 7 35.9 6 34.1 5 33.7 4 35.9 3 36.6 2 36.0 1 38.7 0 36.4Z" fill="url(#og)"/><path transform="translate(604.5 478.9)" d="M0 21.4 1 27.5 2 28.4 3 29.0 4 32.0 5 28.9 6 31.2 7 29.6 8 25.2 9 23.0 10 26.5 11 30.7 12 28.9 13 30.2 14 28.2 15 29.3 16 22.3 17 32.7 18 25.5 19 28.9 20 30.7 21 28.3 22 31.3 23 29.2 24 30.0 25 24.9 26 28.6 27 27.1 28 28.5 29 33.8 30 29.1 31 30.3 32 16.6 33 21.2 34 24.1 35 34.1 36 26.7 37 27.7 38 31.3 39 29.2 40 21.1 41 21.5 42 25.9 43 28.6 44 27.2 45 30.9 46 30.2 47 28.3 48 25.7 49 27.6 50 26.7 51 31.7 52 30.2 53 28.6 54 29.7 55 28.2 56 22.0 57 22.9 58 30.3 59 28.0 60 27.5 61 30.3 62 29.2 63 31.8 64 10.1 65 22.7 66 21.6 67 28.9 68 32.9 69 28.9 70 31.6 71 30.7 72 31.5 73 20.7 74 26.3 75 27.0 76 26.9 77 31.8 78 29.3 79 32.1 80 15.8 81 20.9 82 31.9 83 26.2 84 28.8 85 28.8 86 29.2 87 33.2 88 22.0 89 18.9 90 26.4 91 28.9 92 30.2 93 32.9 94 30.1 95 29.4 96 19.1 97 29.2 98 26.6 99 28.0 100 31.4 101 28.7 102 30.0 103 30.4 104 24.0 105 19.7 106 26.7 107 28.4 108 28.2 109 30.2 110 28.7 111 30.2 112 8.7 113 23.9 114 28.6 115 25.7 116 32.3 117 27.5 118 28.0 119 31.9 120 14.2 121 24.2 122 29.4 123 27.7 124 29.6 125 29.2 126 28.2 127 30.9 128 14.7 129 23.7 130 26.5 131 28.5 132 33.7 133 28.8 134 28.2 134 36.3 133 33.4 132 36.8 131 33.0 130 37.9 129 44.4 128 44.3 127 36.4 126 35.7 125 36.9 124 37.4 123 34.2 122 39.5 121 43.2 120 46.1 119 35.6 118 37.7 117 34.4 116 35.9 115 33.1 114 38.3 113 44.1 112 46.7 111 36.4 110 34.9 109 37.7 108 34.3 107 38.7 106 38.0 105 39.3 104 49.9 103 36.5 102 34.6 101 32.5 100 37.5 99 35.6 98 37.3 97 39.7 96 38.5 95 36.0 94 34.4 93 36.5 92 32.2 91 38.0 90 40.1 89 40.0 88 48.4 87 37.3 86 36.0 85 36.8 84 35.6 83 36.1 82 40.3 81 35.6 80 49.9 79 36.2 78 34.0 77 36.7 76 37.0 75 36.9 74 41.8 73 35.4 72 52.7 71 35.8 70 37.0 69 34.2 68 38.0 67 38.1 66 37.7 65 45.9 64 37.8 63 36.5 62 33.3 61 36.0 60 36.4 59 37.3 58 39.2 57 33.6 56 42.3 55 34.0 54 35.3 53 35.4 52 35.1 51 36.5 50 32.9 49 38.5 48 43.5 47 35.0 46 34.9 45 36.2 44 33.9 43 38.0 42 37.8 41 41.5 40 49.7 39 35.5 38 37.3 37 36.8 36 34.8 35 37.6 34 34.2 33 42.2 32 54.2 31 34.9 30 33.1 29 36.0 28 34.0 27 37.3 26 38.6 25 37.1 24 42.2 23 33.2 22 34.9 21 35.9 20 35.4 19 37.4 18 37.4 17 40.5 16 34.8 15 36.3 14 35.2 13 37.2 12 32.2 11 37.6 10 38.3 9 37.8 8 43.4 7 36.7 6 36.0 5 34.8 4 36.6 3 35.9 2 36.1 1 39.9 0 37.9Z" fill="url(#og)"/><path transform="translate(19.8 574.1)" d="M0 27.9 1 20.8 2 26.6 3 22.5 4 17.7 5 25.2 6 16.2 7 22.2 8 9.3 9 8.1 10 7.7 11 16.5 12 27.8 13 25.1 14 36.7 15 36.4 16 32.8 17 35.1 18 28.7 19 18.2 20 21.1 21 32.5 22 23.0 23 21.0 24 22.9 25 19.4 26 24.4 27 15.2 28 17.7 29 11.1 30 23.7 31 29.0 32 31.9 33 43.7 34 38.6 35 37.5 36 35.9 37 29.2 38 20.5 39 32.8 40 18.7 41 22.1 42 23.6 43 17.5 44 30.2 45 16.5 46 13.9 47 6.1 48 11.3 49 21.6 50 21.8 51 30.5 52 30.2 53 30.8 54 31.2 55 29.6 56 34.9 57 24.8 58 20.2 59 29.0 60 19.2 61 20.9 62 19.6 63 18.3 64 25.6 65 15.4 66 11.2 67 11.8 68 22.0 69 31.2 70 30.3 71 40.0 72 38.2 73 36.6 74 38.5 75 33.0 76 22.2 77 27.3 78 25.0 79 34.4 80 24.1 81 24.7 82 23.3 83 15.6 84 20.6 85 10.5 86 17.8 87 18.8 88 23.7 89 30.5 90 30.5 91 35.9 92 31.2 93 29.1 94 33.6 95 17.9 96 28.2 97 19.9 98 24.0 99 16.1 100 17.1 101 22.0 102 15.4 103 17.9 104 7.2 105 15.2 106 15.9 107 23.4 108 34.4 109 31.5 110 38.3 111 37.4 112 30.9 113 35.4 114 24.8 115 23.7 116 35.6 117 24.8 118 23.1 119 25.9 120 22.6 121 29.5 122 20.2 123 12.1 124 15.2 125 24.1 126 31.3 127 32.1 128 40.7 129 39.5 130 33.2 131 37.8 132 30.0 133 21.4 134 19.1 134 43.5 133 39.0 132 39.3 131 43.1 130 46.0 129 48.8 128 48.9 127 39.6 126 40.7 125 33.4 124 37.2 123 29.9 122 27.7 121 36.5 120 36.0 119 43.3 118 42.4 117 42.3 116 46.7 115 35.6 114 45.6 113 45.9 112 45.9 111 48.7 110 49.5 109 48.2 108 42.8 107 32.4 106 36.9 105 26.1 104 25.9 103 32.5 102 26.4 101 36.2 100 39.0 99 39.7 98 38.8 97 31.1 96 39.9 95 40.7 94 41.3 93 43.0 92 44.1 91 49.7 90 40.9 89 40.6 88 35.9 87 37.4 86 30.3 85 23.1 84 32.0 83 34.1 82 39.6 81 44.8 80 43.4 79 46.7 78 37.5 77 47.2 76 47.1 75 41.8 74 46.5 73 52.7 72 47.6 71 49.7 70 39.3 69 40.9 68 33.8 67 32.6 66 26.7 65 20.6 64 33.0 63 33.7 62 38.8 61 41.8 60 36.6 59 41.7 58 32.2 57 41.1 56 40.4 55 40.8 54 44.9 53 49.3 52 46.8 51 42.7 50 32.1 49 36.1 48 26.8 47 27.3 46 32.3 45 28.4 44 35.4 43 39.8 42 41.5 41 45.7 40 38.0 39 45.3 38 42.5 37 41.5 36 47.9 35 50.6 34 49.9 33 50.3 32 40.0 31 43.5 30 38.4 29 34.1 28 29.6 27 25.6 26 39.3 25 39.4 24 40.9 23 44.5 22 40.0 21 44.8 20 41.4 19 47.2 18 36.3 17 43.8 16 45.8 15 46.9 14 45.8 13 37.7 12 37.3 11 24.7 10 27.9 9 24.8 8 22.2 7 33.1 6 26.8 5 39.6 4 40.4 3 36.8 2 42.6 1 30.6 0 43.4Z" fill="url(#og)"/><path transform="translate(19.8 641.1)" d="M0 16.0 1 16.0 2 25.1 3 18.9 4 27.1 5 15.9 6 16.1 7 16.9 8 12.1 9 14.6 10 7.9 11 22.1 12 17.5 13 29.2 14 32.5 15 33.6 16 36.5 17 29.8 18 31.6 19 17.1 20 24.2 21 20.5 22 24.7 23 30.1 24 21.0 25 25.6 26 19.7 27 14.4 28 13.9 29 15.1 30 31.3 31 26.2 32 33.2 33 36.7 34 40.1 35 41.7 36 35.8 37 31.2 38 19.6 39 19.6 40 28.7 41 21.0 42 22.8 43 19.8 44 20.3 45 21.8 46 12.5 47 12.9 48 9.3 49 20.7 50 20.8 51 28.6 52 35.5 53 33.4 54 31.3 55 27.4 56 27.5 57 23.1 58 19.5 59 21.5 60 24.4 61 18.0 62 23.5 63 19.3 64 17.9 65 17.4 66 9.6 67 24.3 68 21.3 69 26.7 70 31.0 71 37.2 72 43.0 73 37.2 74 37.4 75 34.0 76 24.4 77 29.9 78 27.6 79 31.0 80 23.4 81 23.5 82 25.4 83 16.3 84 22.6 85 8.1 86 16.6 87 21.5 88 25.2 89 35.0 90 33.5 91 37.6 92 32.6 93 27.9 94 33.3 95 16.7 96 27.6 97 17.3 98 17.4 99 17.8 100 18.7 101 26.3 102 17.3 103 9.3 104 6.4 105 15.1 106 21.2 107 21.2 108 36.7 109 31.4 110 34.8 111 38.6 112 31.0 113 36.8 114 22.7 115 35.2 116 25.1 117 25.7 118 25.0 119 24.1 120 29.6 121 21.9 122 17.9 123 12.4 124 16.6 125 22.1 126 30.0 127 35.8 128 36.4 129 39.2 130 37.8 131 31.0 132 35.2 133 30.5 134 16.9 134 43.2 133 47.3 132 43.5 131 42.7 130 48.2 129 52.3 128 47.9 127 43.5 126 32.9 125 39.2 124 29.7 123 26.1 122 36.8 121 29.4 120 41.0 119 42.8 118 41.8 117 43.9 116 39.7 115 47.0 114 42.7 113 42.6 112 39.5 111 47.4 110 52.2 109 48.0 108 43.1 107 32.5 106 36.2 105 24.6 104 25.5 103 31.0 102 26.0 101 35.2 100 36.7 99 37.9 98 38.9 97 38.3 96 44.5 95 37.0 94 41.9 93 43.5 92 46.1 91 49.8 90 40.9 89 44.7 88 35.0 87 38.2 86 28.4 85 25.0 84 33.5 83 30.5 82 38.5 81 41.4 80 39.9 79 42.6 78 33.9 77 44.4 76 45.9 75 47.8 74 48.4 73 43.4 72 54.2 71 43.7 70 45.8 69 41.5 68 34.4 67 34.5 66 23.2 65 33.1 64 34.1 63 34.1 62 40.6 61 32.6 60 40.3 59 41.4 58 41.0 57 45.7 56 38.5 55 42.7 54 46.3 53 41.8 52 46.3 51 37.9 50 40.0 49 29.2 48 28.4 47 26.5 46 25.6 45 32.4 44 35.7 43 39.3 42 41.5 41 33.0 40 45.6 39 45.4 38 48.4 37 45.2 36 39.8 35 48.5 34 51.7 33 52.8 32 43.3 31 40.0 30 38.8 29 25.8 28 27.3 27 38.2 26 36.2 25 42.3 24 31.9 23 43.5 22 41.2 21 43.4 20 47.1 19 36.0 18 44.9 17 43.9 16 45.4 15 42.9 14 46.5 13 37.3 12 37.9 11 35.3 10 23.6 9 23.1 8 29.1 7 34.1 6 37.4 5 34.5 4 41.7 3 34.3 2 41.2 1 45.9 0 44.8Z" fill="url(#og)"/><path transform="translate(165.9 574.1)" d="M0 20.3 1 19.0 2 28.9 3 17.3 4 15.5 5 15.9 6 15.8 7 24.4 8 8.3 9 17.1 10 11.5 11 19.9 12 32.3 13 31.3 14 37.6 15 33.9 16 29.2 17 31.5 18 19.9 19 23.4 20 23.7 21 20.7 22 30.1 23 21.5 24 18.9 25 14.7 26 13.3 27 18.3 28 24.4 29 35.4 30 32.6 31 36.4 32 40.3 33 32.8 34 39.0 35 19.3 36 22.0 37 29.6 38 24.4 39 29.1 40 23.9 41 16.5 42 21.4 43 7.7 44 21.7 45 19.3 46 23.0 47 23.9 48 35.0 49 40.5 50 30.4 51 29.4 52 28.9 53 16.1 54 18.2 55 21.2 56 20.4 57 25.4 58 19.7 59 17.4 60 13.1 61 8.0 62 16.4 63 21.9 64 34.4 65 28.3 66 37.3 67 39.2 68 34.7 69 38.0 70 26.1 71 20.5 72 34.6 73 22.9 74 24.3 75 27.1 76 18.0 77 25.6 78 14.3 79 23.2 80 20.8 81 29.8 82 31.8 83 33.2 84 37.4 85 35.6 86 31.3 87 24.5 88 28.7 89 17.1 90 16.8 91 23.0 92 18.9 93 23.0 94 14.9 95 9.7 96 7.6 97 12.1 98 26.7 99 24.9 100 31.2 101 31.5 102 29.2 103 33.7 104 30.4 105 22.9 106 18.6 107 19.1 108 28.1 109 21.2 110 25.7 111 22.4 112 13.7 113 16.7 114 16.0 115 31.3 116 25.3 117 34.5 118 38.3 119 37.4 120 41.0 121 33.4 122 25.3 123 35.0 124 20.4 125 22.8 126 21.5 127 20.0 128 31.1 129 18.3 130 11.5 131 7.7 132 18.2 133 23.4 134 22.9 134 36.3 133 38.4 132 31.5 131 27.5 130 35.8 129 27.3 128 40.8 127 37.4 126 43.4 125 48.2 124 45.0 123 48.0 122 46.4 121 42.1 120 46.6 119 47.9 118 53.7 117 45.5 116 39.8 115 36.1 114 26.7 113 29.6 112 35.3 111 37.2 110 40.6 109 32.9 108 39.9 107 39.1 106 41.7 105 45.6 104 34.7 103 43.3 102 45.9 101 49.4 100 42.3 99 33.4 98 35.9 97 22.8 96 28.7 95 31.1 94 31.9 93 35.7 92 34.7 91 39.2 90 42.4 89 45.2 88 47.0 87 39.9 86 47.0 85 44.8 84 51.2 83 41.0 82 46.4 81 40.7 80 39.7 79 29.6 78 25.2 77 36.2 76 36.6 75 41.1 74 43.4 73 38.7 72 44.8 71 38.7 70 47.9 69 46.3 68 40.7 67 46.4 66 50.0 65 46.5 64 39.0 63 31.4 62 35.7 61 27.6 60 29.7 59 36.3 58 30.9 57 36.5 56 36.9 55 41.8 54 44.4 53 37.2 52 38.7 51 44.0 50 37.5 49 48.5 48 39.7 47 42.4 46 38.4 45 32.9 44 30.0 43 22.3 42 33.9 41 36.5 40 39.7 39 42.9 38 33.1 37 46.7 36 45.3 35 47.3 34 46.7 33 41.7 32 47.4 31 51.2 30 50.8 29 44.2 28 35.8 27 37.4 26 26.8 25 31.2 24 38.7 23 34.2 22 42.7 21 40.8 20 44.8 19 41.9 18 37.6 17 40.0 16 44.8 15 44.8 14 49.9 13 42.0 12 43.6 11 31.8 10 37.4 9 25.3 8 17.8 7 29.0 6 32.2 5 38.1 4 38.3 3 38.0 2 44.6 1 36.9 0 47.7Z" fill="url(#og)"/><path transform="translate(165.9 641.1)" d="M0 14.5 1 18.8 2 23.9 3 18.4 4 28.9 5 17.8 6 11.9 7 12.6 8 4.4 9 14.6 10 12.7 11 23.8 12 24.6 13 33.5 14 40.5 15 28.7 16 32.6 17 22.7 18 30.7 19 20.1 20 23.5 21 24.3 22 22.0 23 27.8 24 21.8 25 15.8 26 14.0 27 20.3 28 27.1 29 31.4 30 40.7 31 36.7 32 35.7 33 35.1 34 31.9 35 18.3 36 29.6 37 23.3 38 23.8 39 26.5 40 18.4 41 24.6 42 18.8 43 7.9 44 10.9 45 22.0 46 28.4 47 25.1 48 33.6 49 33.1 50 26.9 51 31.4 52 27.5 53 20.8 54 24.6 55 20.3 56 30.5 57 19.0 58 17.7 59 16.7 60 9.1 61 18.1 62 14.8 63 26.9 64 24.6 65 31.9 66 39.6 67 34.2 68 38.7 69 30.2 70 22.5 71 23.4 72 25.0 73 34.9 74 23.0 75 21.1 76 24.5 77 16.9 78 20.0 79 16.5 80 25.9 81 25.9 82 32.9 83 35.9 84 37.0 85 36.4 86 32.3 87 25.3 88 26.9 89 17.9 90 19.5 91 23.0 92 17.8 93 22.0 94 12.9 95 7.7 96 7.3 97 17.2 98 26.7 99 21.2 100 31.4 101 33.8 102 31.1 103 33.2 104 28.4 105 25.4 106 20.9 107 17.9 108 23.9 109 19.9 110 26.3 111 17.3 112 16.9 113 17.8 114 16.5 115 31.1 116 25.9 117 36.8 118 33.9 119 37.2 120 41.5 121 32.0 122 42.1 123 20.7 124 27.3 125 21.6 126 32.6 127 20.9 128 20.9 129 20.3 130 10.0 131 20.0 132 15.6 133 24.7 134 23.8 134 43.4 133 35.3 132 32.6 131 28.1 130 29.8 129 35.8 128 42.9 127 37.6 126 44.4 125 36.2 124 49.6 123 45.9 122 50.2 121 39.0 120 48.8 119 52.7 118 49.4 117 44.5 116 39.1 115 38.5 114 24.2 113 28.6 112 35.9 111 33.1 110 40.4 109 32.2 108 44.0 107 41.5 106 42.1 105 46.4 104 34.5 103 41.5 102 44.7 101 48.0 100 42.1 99 37.3 98 33.2 97 26.8 96 24.4 95 32.1 94 32.1 93 36.2 92 33.7 91 42.2 90 42.7 89 39.8 88 47.1 87 45.1 86 42.5 85 46.3 84 42.4 83 49.1 82 41.5 81 45.5 80 39.5 79 32.9 78 33.4 77 36.6 76 41.3 75 40.9 74 40.9 73 44.6 72 39.0 71 46.7 70 49.4 69 43.6 68 47.3 67 41.5 66 51.0 65 42.3 64 43.6 63 35.6 62 29.9 61 25.5 60 25.8 59 33.1 58 37.1 57 34.8 56 40.8 55 33.3 54 41.3 53 43.0 52 42.1 51 42.6 50 42.0 49 45.9 48 46.9 47 39.1 46 38.7 45 30.9 44 32.3 43 30.2 42 31.8 41 40.3 40 33.9 39 43.5 38 45.3 37 44.8 36 49.4 35 33.8 34 41.1 33 46.1 32 52.4 31 50.4 30 47.6 29 38.9 28 42.0 27 34.2 26 34.3 25 32.0 24 26.1 23 38.3 22 37.6 21 41.8 20 43.1 19 39.0 18 45.9 17 34.5 16 41.5 15 39.3 14 48.7 13 43.9 12 40.4 11 38.2 10 29.4 9 25.8 8 21.3 7 29.9 6 36.4 5 31.9 4 39.9 3 33.8 2 41.8 1 46.4 0 46.4Z" fill="url(#og)"/><path transform="translate(312.1 574.1)" d="M0 7.9 1 20.0 2 17.8 3 23.9 4 7.5 5 23.0 6 13.5 7 23.0 8 9.2 9 31.1 10 18.0 11 25.2 12 13.3 13 28.6 14 19.5 15 25.7 16 11.3 17 24.3 18 14.4 19 23.1 20 17.5 21 32.3 22 19.4 23 26.3 24 26.5 25 20.2 26 23.6 27 23.6 28 22.5 29 17.4 30 17.4 31 24.4 32 12.5 33 22.1 34 24.4 35 24.2 36 9.1 37 20.1 38 17.6 39 23.0 40 29.6 41 19.4 42 20.4 43 23.0 44 13.6 45 22.5 46 29.2 47 25.7 48 12.1 49 21.4 50 18.0 51 25.4 52 11.4 53 34.0 54 17.1 55 23.7 56 12.8 57 26.0 58 17.2 59 25.8 60 15.1 61 30.6 62 21.0 63 26.2 64 11.6 65 23.8 66 24.8 67 24.2 68 15.7 69 20.4 70 18.1 71 28.4 72 11.3 73 20.9 74 18.4 75 23.8 76 2.5 77 18.5 78 22.8 79 24.4 80 24.2 81 18.3 82 14.7 83 24.4 84 18.5 85 21.4 86 25.9 87 24.9 88 10.7 89 23.0 90 31.3 91 25.0 92 9.8 93 22.6 94 15.5 95 32.0 96 14.5 97 25.2 98 20.9 99 25.9 100 10.1 101 26.4 102 17.8 103 24.5 104 15.5 105 24.2 106 18.3 107 22.6 108 13.2 109 23.2 110 13.9 111 30.4 112 13.0 113 21.5 114 17.2 115 22.5 116 8.9 117 19.7 118 29.0 119 21.8 120 9.0 121 31.0 122 16.4 123 22.5 124 11.3 125 28.7 126 16.3 127 28.8 128 21.7 129 17.9 130 26.1 131 23.7 132 9.4 133 21.7 134 16.1 134 38.3 133 44.9 132 59.5 131 40.8 130 45.6 129 33.8 128 51.7 127 42.3 126 37.1 125 41.3 124 47.6 123 41.1 122 42.0 121 45.8 120 40.6 119 34.2 118 47.9 117 40.4 116 51.4 115 36.7 114 44.8 113 44.3 112 40.8 111 43.1 110 32.4 109 43.4 108 55.3 107 39.0 106 44.7 105 42.7 104 40.1 103 42.4 102 40.8 101 43.2 100 33.7 99 37.6 98 46.2 97 43.0 96 43.8 95 41.5 94 38.9 93 42.7 92 52.8 91 35.6 90 45.8 89 39.1 88 49.8 87 40.9 86 48.5 85 34.2 84 50.4 83 43.0 82 50.7 81 43.0 80 54.7 79 32.1 78 47.0 77 45.3 76 51.5 75 38.9 74 46.3 73 43.6 72 43.2 71 41.7 70 43.4 69 44.6 68 55.7 67 36.5 66 47.5 65 44.2 64 43.9 63 40.1 62 31.7 61 42.1 60 44.2 59 39.5 58 44.5 57 41.2 56 38.0 55 42.6 54 38.7 53 42.3 52 43.3 51 37.1 50 44.0 49 43.7 48 45.6 47 34.2 46 42.7 45 41.2 44 49.4 43 42.0 42 47.7 41 35.2 40 53.5 39 36.6 38 46.3 37 43.8 36 47.3 35 32.3 34 42.8 33 43.1 32 49.0 31 42.3 30 46.1 29 42.0 28 57.2 27 39.7 26 49.7 25 33.9 24 51.9 23 40.2 22 39.1 21 41.4 20 39.0 19 40.6 18 45.6 17 46.9 16 33.7 15 40.3 14 41.9 13 42.9 12 31.2 11 40.3 10 42.9 9 43.3 8 36.6 7 40.5 6 47.2 5 45.9 4 34.4 3 36.5 2 47.7 1 43.5 0 49.7Z" fill="url(#og)"/><path transform="translate(312.1 641.1)" d="M0 24.6 1 20.4 2 20.0 3 23.9 4 25.8 5 21.6 6 26.2 7 24.0 8 12.2 9 17.7 10 15.8 11 29.9 12 11.7 13 21.3 14 32.1 15 21.2 16 17.8 17 19.5 18 15.7 19 32.5 20 13.1 21 20.6 22 33.6 23 24.6 24 5.7 25 19.1 26 29.5 27 22.7 28 12.9 29 26.9 30 18.4 31 24.4 32 7.2 33 25.1 34 14.2 35 22.9 36 16.8 37 18.0 38 17.6 39 31.7 40 12.0 41 20.8 42 26.4 43 23.6 44 9.9 45 23.6 46 16.7 47 24.2 48 8.6 49 18.5 50 33.9 51 21.5 52 6.3 53 28.2 54 14.8 55 23.5 56 16.5 57 18.4 58 30.1 59 21.7 60 21.0 61 19.1 62 16.6 63 24.8 64 9.9 65 23.0 66 21.1 67 22.3 68 13.0 69 30.0 70 14.7 71 22.4 72 10.1 73 22.2 74 17.3 75 33.3 76 32.4 77 16.5 78 16.4 79 20.3 80 30.4 81 17.9 82 19.8 83 23.6 84 19.4 85 21.5 86 27.5 87 23.8 88 26.3 89 22.0 90 28.0 91 23.0 92 12.1 93 22.3 94 18.6 95 23.7 96 11.7 97 26.1 98 20.3 99 31.9 100 29.8 101 21.0 102 25.5 103 23.8 104 18.8 105 20.7 106 18.7 107 28.4 108 11.2 109 22.9 110 17.6 111 21.7 112 15.8 113 32.1 114 17.1 115 26.0 116 10.5 117 22.6 118 17.1 119 24.7 120 34.8 121 21.4 122 22.2 123 21.6 124 20.9 125 17.2 126 17.2 127 25.8 128 22.5 129 18.3 130 17.6 131 24.4 132 12.1 133 26.2 134 14.3 134 44.7 133 43.2 132 33.9 131 42.8 130 49.3 129 43.5 128 52.4 127 40.0 126 48.1 125 42.7 124 53.3 123 40.8 122 46.8 121 39.0 120 51.3 119 38.7 118 43.9 117 44.4 116 39.5 115 40.9 114 42.2 113 43.2 112 33.6 111 38.7 110 42.9 109 44.6 108 45.4 107 40.7 106 48.9 105 41.9 104 52.5 103 42.0 102 45.5 101 36.0 100 48.8 99 41.3 98 36.2 97 43.3 96 51.6 95 39.6 94 44.9 93 45.5 92 40.5 91 40.5 90 45.8 89 32.9 88 46.7 87 37.7 86 45.7 85 34.7 84 50.5 83 40.1 82 48.6 81 40.4 80 51.1 79 41.2 78 48.5 77 38.6 76 54.6 75 39.9 74 38.9 73 43.1 72 55.8 71 42.5 70 41.5 69 44.7 68 32.4 67 33.8 66 47.0 65 42.5 64 49.2 63 41.3 62 48.5 61 44.0 60 55.5 59 36.8 58 45.8 57 38.2 56 52.1 55 42.6 54 45.9 53 44.4 52 30.9 51 37.0 50 46.4 49 37.8 48 50.1 47 39.1 46 45.8 45 43.4 44 36.5 43 30.6 42 47.3 41 42.5 40 48.5 39 39.7 38 44.7 37 43.5 36 50.8 35 42.3 34 46.2 33 45.1 32 37.2 31 41.5 30 43.2 29 41.4 28 35.7 27 35.9 26 49.3 25 43.6 24 53.2 23 37.1 22 45.4 21 40.1 20 46.4 19 42.6 18 39.1 17 40.8 16 51.0 15 37.4 14 45.6 13 39.0 12 52.5 11 41.1 10 41.2 9 44.9 8 53.4 7 39.6 6 48.9 5 33.9 4 50.4 3 41.1 2 43.9 1 38.3 0 46.7Z" fill="url(#og)"/><path transform="translate(458.3 574.1)" d="M0 7.6 1 19.2 2 29.8 3 21.2 4 12.9 5 16.3 6 17.7 7 31.5 8 14.1 9 22.2 10 19.0 11 31.5 12 20.0 13 20.2 14 19.5 15 28.2 16 13.3 17 30.2 18 17.7 19 22.4 20 12.4 21 17.5 22 18.2 23 29.4 24 18.2 25 17.9 26 29.4 27 21.6 28 12.6 29 29.1 30 14.4 31 24.0 32 10.7 33 27.8 34 15.6 35 23.5 36 33.3 37 16.5 38 17.8 39 20.8 40 15.4 41 18.7 42 18.5 43 32.5 44 25.5 45 18.6 46 16.8 47 24.9 48 12.1 49 27.7 50 16.3 51 23.0 52 10.0 53 19.4 54 21.1 55 20.9 56 15.4 57 20.5 58 19.8 59 29.0 60 11.0 61 30.6 62 18.3 63 22.9 64 35.2 65 16.1 66 19.6 67 18.9 68 12.7 69 27.3 70 17.7 71 23.6 72 9.7 73 20.3 74 19.5 75 21.8 76 9.6 77 21.1 78 32.2 79 22.4 80 11.0 81 28.1 82 13.8 83 23.5 84 11.0 85 18.4 86 19.7 87 21.6 88 19.8 89 19.3 90 28.2 91 22.1 92 9.1 93 30.4 94 15.4 95 27.0 96 19.1 97 20.4 98 21.3 99 27.6 100 34.2 101 18.5 102 19.6 103 23.5 104 11.2 105 33.4 106 17.9 107 21.9 108 14.7 109 26.7 110 16.3 111 22.3 112 8.7 113 17.5 114 30.4 115 20.4 116 11.8 117 33.9 118 15.9 119 22.5 120 31.6 121 19.5 122 18.0 123 22.1 124 7.0 125 31.1 126 13.1 127 22.6 128 10.5 129 23.9 130 15.1 131 20.2 132 11.8 133 18.4 134 22.7 134 47.4 133 45.6 132 48.4 131 42.8 130 46.3 129 47.6 128 33.6 127 43.9 126 40.0 125 44.8 124 39.4 123 42.6 122 48.8 121 37.6 120 55.2 119 42.5 118 39.9 117 45.9 116 38.2 115 33.6 114 46.8 113 43.4 112 51.9 111 43.9 110 47.4 109 44.7 108 34.9 107 43.4 106 41.1 105 45.0 104 40.1 103 43.8 102 49.6 101 39.3 100 54.2 99 42.6 98 47.2 97 42.9 96 51.7 95 42.4 94 37.9 93 45.4 92 46.4 91 39.4 90 43.9 89 34.4 88 50.4 87 38.8 86 46.3 85 44.1 84 46.6 83 44.1 82 44.6 81 47.9 80 34.0 79 35.9 78 44.7 77 40.3 76 51.8 75 39.2 74 49.2 73 45.4 72 45.3 71 40.4 70 47.2 69 46.1 68 33.6 67 42.1 66 49.9 65 37.7 64 56.6 63 42.6 62 43.3 61 44.8 60 36.8 59 40.9 58 45.2 57 45.8 56 53.0 55 36.0 54 48.4 53 47.6 52 49.6 51 41.4 50 42.8 49 46.8 48 32.7 47 42.8 46 48.9 45 41.9 44 49.7 43 42.5 42 42.6 41 44.0 40 51.3 39 42.0 38 45.7 37 41.0 36 52.1 35 42.7 34 46.3 33 46.6 32 32.3 31 42.6 30 36.8 29 44.5 28 45.3 27 41.3 26 49.4 25 33.6 24 52.8 23 43.5 22 43.6 21 46.2 20 55.6 19 44.6 18 41.4 17 46.0 16 36.2 15 41.5 14 47.8 13 44.0 12 48.7 11 42.0 10 35.8 9 44.7 8 51.0 7 44.2 6 46.8 5 43.9 4 53.4 3 32.2 2 47.8 1 43.5 0 52.2Z" fill="url(#og)"/><path transform="translate(458.3 641.1)" d="M0 14.2 1 21.4 2 18.3 3 31.6 4 9.6 5 17.8 6 18.6 7 22.5 8 27.0 9 18.6 10 16.0 11 25.4 12 10.7 13 21.5 14 16.6 15 33.5 16 9.1 17 19.8 18 14.3 19 20.7 20 29.4 21 15.9 22 19.0 23 20.9 24 14.1 25 23.8 26 17.2 27 34.6 28 13.2 29 34.9 30 16.1 31 22.7 32 6.7 33 22.3 34 16.1 35 21.3 36 11.1 37 27.8 38 18.1 39 26.3 40 27.3 41 16.2 42 19.1 43 20.7 44 16.0 45 27.9 46 19.6 47 21.8 48 14.6 49 19.2 50 34.2 51 24.3 52 14.3 53 20.9 54 28.3 55 20.5 56 13.3 57 33.8 58 19.0 59 21.5 60 9.9 61 24.7 62 16.9 63 23.7 64 6.2 65 19.1 66 18.7 67 21.6 68 11.1 69 28.0 70 18.6 71 27.7 72 10.9 73 22.5 74 26.4 75 22.6 76 33.2 77 18.9 78 17.9 79 19.9 80 12.5 81 30.5 82 15.4 83 21.6 84 20.9 85 17.3 86 28.9 87 20.8 88 14.0 89 17.4 90 13.9 91 30.7 92 16.3 93 16.2 94 16.1 95 30.3 96 31.3 97 17.7 98 20.0 99 22.2 100 13.5 101 21.5 102 16.8 103 22.2 104 7.6 105 19.4 106 14.7 107 33.7 108 27.7 109 19.2 110 20.5 111 22.8 112 19.2 113 17.6 114 19.7 115 27.1 116 35.0 117 20.4 118 18.0 119 23.5 120 8.4 121 17.9 122 29.7 123 22.3 124 9.1 125 27.8 126 13.9 127 26.3 128 12.3 129 25.0 130 19.7 131 31.0 132 7.6 133 23.6 134 16.3 134 37.3 133 45.2 132 52.8 131 42.6 130 31.3 129 44.4 128 47.9 127 41.6 126 37.2 125 43.6 124 48.7 123 33.4 122 47.6 121 44.0 120 52.8 119 41.7 118 45.6 117 40.1 116 50.0 115 42.8 114 45.2 113 43.9 112 52.3 111 41.6 110 48.9 109 33.2 108 48.2 107 42.8 106 39.2 105 44.0 104 54.7 103 38.8 102 47.1 101 42.8 100 39.9 99 42.3 98 48.8 97 38.2 96 55.2 95 43.2 94 44.2 93 45.1 92 51.1 91 44.5 90 43.3 89 44.7 88 56.1 87 40.7 86 48.0 85 31.9 84 51.1 83 42.8 82 43.9 81 45.8 80 33.8 79 40.8 78 47.4 77 38.7 76 51.3 75 32.0 74 44.2 73 42.1 72 45.9 71 44.4 70 33.9 69 46.3 68 53.4 67 40.9 66 46.4 65 45.9 64 44.2 63 41.5 62 46.3 61 45.5 60 33.2 59 41.9 58 40.9 57 46.3 56 39.0 55 33.6 54 46.8 53 42.6 52 49.7 51 36.3 50 47.4 49 38.9 48 48.1 47 41.3 46 46.2 45 42.6 44 31.8 43 42.9 42 51.4 41 34.6 40 55.3 39 44.0 38 34.1 37 44.3 36 46.9 35 43.4 34 46.5 33 46.8 32 40.1 31 42.5 30 41.8 29 42.8 28 37.4 27 41.9 26 36.4 25 44.3 24 49.7 23 43.0 22 51.0 21 42.2 20 53.5 19 41.0 18 48.0 17 46.0 16 42.4 15 41.6 14 38.0 13 45.3 12 53.5 11 42.2 10 49.1 9 40.1 8 50.0 7 38.6 6 47.5 5 48.0 4 47.5 3 42.6 2 36.7 1 43.2 0 54.0Z" fill="url(#og)"/><path transform="translate(604.5 574.1)" d="M0 8.0 1 11.6 2 10.5 3 19.1 4 26.5 5 23.5 6 33.4 7 31.1 8 31.8 9 35.6 10 41.8 11 31.9 12 32.9 13 28.4 14 26.3 15 37.8 16 21.9 17 21.9 18 14.9 19 12.2 20 12.5 21 7.2 22 11.7 23 9.4 24 23.3 25 13.7 26 15.7 27 15.1 28 21.8 29 30.6 30 23.3 31 29.0 32 37.5 33 33.5 34 37.9 35 33.8 36 32.7 37 36.9 38 29.0 39 31.3 40 20.0 41 22.3 42 14.9 43 20.6 44 10.8 45 12.4 46 9.7 47 8.4 48 23.4 49 12.4 50 25.4 51 12.8 52 20.3 53 22.5 54 28.4 55 35.2 56 29.0 57 40.7 58 33.7 59 33.8 60 39.0 61 30.8 62 33.7 63 29.9 64 23.9 65 26.0 66 20.4 67 24.8 68 12.7 69 12.6 70 11.7 71 8.1 72 8.3 73 15.5 74 12.5 75 20.0 76 17.9 77 22.3 78 27.7 79 27.4 80 27.0 81 37.1 82 30.1 83 31.9 84 37.8 85 29.6 86 36.7 87 29.5 88 24.4 89 24.4 90 16.7 91 21.1 92 10.7 93 23.3 94 10.0 95 9.5 96 9.6 97 11.2 98 23.5 99 17.9 100 18.4 101 29.1 102 21.2 103 29.3 104 29.6 105 31.3 106 38.6 107 33.9 108 41.3 109 33.5 110 30.6 111 33.9 112 26.6 113 23.9 114 25.3 115 17.8 116 24.8 117 11.2 118 10.1 119 9.3 120 10.6 121 6.3 122 8.3 123 23.7 124 14.8 125 20.2 126 23.5 127 25.8 128 32.3 129 28.5 130 31.8 131 30.1 132 32.8 133 40.2 134 30.8 134 45.1 133 51.1 132 51.2 131 52.5 130 53.1 129 43.1 128 47.5 127 40.5 126 44.1 125 39.3 124 33.7 123 37.7 122 29.3 121 35.7 120 33.2 119 33.8 118 35.1 117 32.1 116 37.9 115 35.1 114 39.9 113 44.3 112 43.3 111 48.9 110 39.8 109 51.8 108 53.4 107 41.0 106 50.5 105 46.7 104 47.8 103 48.4 102 35.3 101 44.5 100 36.1 99 27.3 98 36.6 97 27.8 96 34.6 95 34.4 94 27.0 93 35.9 92 28.2 91 40.1 90 45.3 89 43.1 88 45.1 87 45.5 86 50.4 85 45.2 84 50.5 83 54.8 82 51.3 81 54.7 80 41.6 79 40.7 78 43.8 77 39.5 76 41.8 75 36.6 74 25.4 73 35.1 72 31.7 71 35.9 70 36.6 69 33.0 68 28.3 67 37.6 66 35.2 65 40.8 64 46.4 63 47.8 62 51.8 61 41.2 60 54.8 59 52.2 58 48.2 57 50.8 56 40.1 55 49.9 54 42.7 53 42.7 52 41.0 51 33.7 50 36.2 49 28.4 48 31.5 47 26.5 46 30.7 45 36.6 44 30.4 43 36.1 42 30.7 41 43.7 40 49.7 39 46.7 38 42.6 37 48.1 36 52.9 35 53.6 34 52.3 33 44.0 32 49.7 31 46.0 30 49.4 29 45.5 28 36.1 27 37.9 26 36.8 25 32.5 24 33.1 23 22.9 22 32.2 21 33.3 20 32.4 19 32.3 18 34.3 17 40.9 16 33.6 15 46.8 14 46.1 13 49.1 12 52.0 11 48.2 10 56.2 9 52.6 8 48.3 7 50.0 6 48.6 5 35.4 4 44.0 3 35.5 2 38.7 1 37.5 0 31.9Z" fill="url(#og)"/><path transform="translate(604.5 641.1)" d="M0 7.8 1 20.1 2 13.8 3 19.0 4 25.2 5 24.7 6 36.5 7 29.5 8 35.5 9 35.3 10 31.2 11 33.8 12 34.7 13 29.6 14 36.5 15 25.5 16 18.9 17 20.0 18 16.4 19 27.6 20 16.8 21 8.0 22 6.5 23 10.2 24 12.9 25 21.5 26 13.8 27 17.9 28 18.6 29 23.9 30 30.4 31 28.6 32 31.7 33 37.1 34 33.6 35 39.0 36 34.1 37 31.0 38 33.8 39 27.8 40 23.3 41 16.9 42 27.3 43 16.1 44 13.2 45 11.5 46 11.1 47 20.9 48 10.8 49 18.8 50 7.3 51 13.3 52 29.1 53 22.7 54 30.3 55 29.4 56 31.0 57 35.3 58 35.3 59 41.4 60 34.0 61 37.6 62 29.1 63 24.8 64 26.1 65 23.4 66 26.7 67 16.9 68 13.2 69 15.5 70 13.4 71 9.5 72 8.0 73 12.8 74 11.1 75 22.2 76 18.1 77 23.6 78 24.5 79 29.9 80 39.3 81 27.9 82 34.4 83 30.4 84 30.1 85 40.0 86 33.3 87 30.9 88 27.4 89 22.4 90 17.7 91 21.9 92 12.3 93 13.5 94 14.6 95 9.6 96 18.9 97 9.9 98 17.0 99 17.4 100 15.0 101 20.5 102 20.7 103 28.2 104 39.2 105 31.8 106 33.3 107 32.2 108 32.7 109 41.3 110 31.3 111 33.4 112 28.2 113 24.1 114 25.1 115 18.8 116 18.3 117 11.6 118 13.9 119 14.9 120 10.4 121 5.0 122 12.2 123 18.4 124 14.0 125 25.0 126 19.6 127 26.0 128 30.9 129 29.2 130 31.1 131 38.3 132 31.6 133 29.9 134 37.8 134 50.9 133 53.2 132 50.9 131 54.5 130 43.6 129 40.6 128 46.4 127 45.5 126 40.6 125 40.7 124 26.5 123 35.9 122 32.3 121 31.6 120 34.9 119 33.1 118 32.1 117 33.3 116 38.6 115 29.9 114 42.4 113 46.5 112 46.9 111 50.1 110 42.2 109 51.0 108 49.4 107 53.8 106 51.0 105 47.5 104 50.8 103 42.1 102 43.2 101 41.6 100 36.5 99 38.3 98 33.8 97 31.3 96 33.8 95 22.7 94 34.6 93 36.0 92 32.9 91 39.7 90 32.4 89 44.9 88 45.2 87 46.6 86 43.0 85 50.8 84 51.6 83 53.9 82 53.6 81 50.3 80 51.5 79 41.7 78 46.7 77 40.2 76 36.6 75 38.2 74 25.5 73 35.9 72 31.3 71 33.8 70 37.5 69 33.3 68 34.5 67 32.4 66 40.5 65 36.5 64 44.4 63 50.5 62 48.9 61 53.0 60 42.1 59 52.9 58 44.6 57 53.9 56 46.2 55 50.6 54 44.2 53 35.6 52 42.1 51 37.5 50 37.1 49 30.3 48 25.5 47 34.0 46 29.5 45 34.9 44 34.9 43 31.8 42 39.6 41 38.0 40 45.5 39 43.0 38 49.9 37 52.3 36 49.7 35 53.8 34 41.4 33 51.8 32 48.1 31 51.8 30 49.4 29 36.3 28 43.6 27 39.0 26 32.0 25 34.4 24 23.8 23 34.5 22 30.7 21 32.0 20 33.1 19 36.4 18 36.3 17 41.0 16 46.1 15 41.1 14 48.9 13 40.6 12 52.6 11 53.9 10 53.4 9 50.9 8 49.3 7 46.7 6 48.2 5 35.0 4 41.5 3 40.0 2 37.1 1 35.7 0 24.8Z" fill="url(#og)"/><path transform="translate(19.8 736.3)" d="M0 6.7 1 23.5 2 1.3 3 12.8 4 5.7 5 2.2 6 9.3 7 7.6 8 28.5 9 9.3 10 10.6 11 13.8 12 15.4 13 34.0 14 17.6 15 21.2 16 21.0 17 18.1 18 9.7 19 12.2 20 22.7 21 9.6 22 26.5 23 9.0 24 28.7 25 3.3 26 8.1 27 1.3 28 8.6 29 20.1 30 27.3 31 6.7 32 10.4 33 16.0 34 17.1 35 35.0 36 13.5 37 20.2 38 24.6 39 20.4 40 40.3 41 16.4 42 26.6 43 12.2 44 4.2 45 11.2 46 8.6 47 20.7 48 3.9 49 0.5 50 0.5 51 23.6 52 7.0 53 12.4 54 10.4 55 14.7 56 27.6 57 19.6 58 25.8 59 21.7 60 19.1 61 28.1 62 19.4 63 29.8 64 13.5 65 8.8 66 6.5 67 33.3 68 3.1 69 9.3 70 2.7 71 2.2 72 0.5 73 5.6 74 17.1 75 8.5 76 21.5 77 11.7 78 7.8 79 32.6 80 12.4 81 24.2 82 24.4 83 19.2 84 12.5 85 18.5 86 12.2 87 15.6 88 27.2 89 12.2 90 0.5 91 0.5 92 21.1 93 0.5 94 11.1 95 5.5 96 27.1 97 2.5 98 13.8 99 12.9 100 10.8 101 26.5 102 25.0 103 20.1 104 35.5 105 15.3 106 16.9 107 23.7 108 25.9 109 8.3 110 8.6 111 13.6 112 6.6 113 27.9 114 28.2 115 2.0 116 9.0 117 5.0 118 4.3 119 14.9 120 3.8 121 6.1 122 9.5 123 30.0 124 13.7 125 26.6 126 14.7 127 41.1 128 15.2 129 15.5 130 20.7 131 14.5 132 9.0 133 19.9 134 4.9 134 51.3 133 52.7 132 32.0 131 46.1 130 51.0 129 58.3 128 46.0 127 61.8 126 45.4 125 56.1 124 43.6 123 57.2 122 44.0 121 54.7 120 56.3 119 44.8 118 45.1 117 42.5 116 45.5 115 27.7 114 44.9 113 44.6 112 42.2 111 52.5 110 53.7 109 50.4 108 58.9 107 54.4 106 61.0 105 50.9 104 61.7 103 47.7 102 58.7 101 51.4 100 50.4 99 52.2 98 48.6 97 37.2 96 49.4 95 40.9 94 44.8 93 24.6 92 45.9 91 44.3 90 53.8 89 37.3 88 50.8 87 42.2 86 51.5 85 57.7 84 50.9 83 50.1 82 59.6 81 53.8 80 50.3 79 59.0 78 31.8 77 54.1 76 52.0 75 35.0 74 49.8 73 41.0 72 49.4 71 38.2 70 43.1 69 41.5 68 38.8 67 49.5 66 46.0 65 51.3 64 45.2 63 56.8 62 40.2 61 58.6 60 57.6 59 53.0 58 55.9 57 40.4 56 56.7 55 52.8 54 54.2 53 47.0 52 34.5 51 47.6 50 36.2 49 46.4 48 46.6 47 45.0 46 34.2 45 50.6 44 48.7 43 48.3 42 55.5 41 47.2 40 53.1 39 50.0 38 60.8 37 63.8 36 51.3 35 53.2 34 47.7 33 55.9 32 51.4 31 45.7 30 51.7 29 48.0 28 42.2 27 42.0 26 48.0 25 36.2 24 46.9 23 42.7 22 46.9 21 37.3 20 51.9 19 54.2 18 53.2 17 51.7 16 57.0 15 57.5 14 44.8 13 61.6 12 47.6 11 55.4 10 51.1 9 48.2 8 45.9 7 32.6 6 51.1 5 40.8 4 46.1 3 43.2 2 28.6 1 47.1 0 47.9Z" fill="url(#og)"/><path transform="translate(19.8 803.3)" d="M0 0.5 1 17.8 2 2.5 3 15.3 4 5.7 5 8.5 6 0.5 7 18.0 8 3.4 9 11.9 10 15.2 11 16.0 12 23.3 13 16.3 14 16.8 15 24.8 16 18.6 17 34.7 18 21.4 19 10.7 20 10.4 21 23.3 22 12.5 23 14.8 24 6.2 25 5.1 26 22.4 27 4.7 28 9.7 29 9.1 30 0.5 31 3.1 32 22.2 33 12.4 34 23.5 35 15.2 36 14.2 37 28.1 38 19.0 39 21.2 40 29.2 41 13.9 42 32.3 43 13.6 44 7.6 45 15.0 46 2.6 47 27.0 48 24.5 49 2.2 50 1.2 51 2.1 52 5.8 53 28.4 54 3.9 55 34.9 56 7.8 57 23.7 58 14.5 59 15.3 60 11.8 61 19.2 62 28.9 63 11.3 64 28.9 65 14.1 66 7.0 67 8.4 68 12.6 69 4.3 70 25.9 71 5.3 72 2.3 73 12.3 74 3.9 75 19.6 76 12.6 77 13.1 78 11.6 79 12.3 80 20.7 81 37.8 82 17.4 83 21.7 84 11.0 85 39.8 86 18.3 87 15.3 88 9.2 89 9.3 90 11.7 91 0.5 92 22.7 93 4.7 94 4.0 95 0.5 96 4.6 97 25.7 98 4.3 99 14.9 100 17.0 101 17.8 102 38.9 103 15.9 104 19.1 105 20.4 106 22.7 107 38.1 108 14.8 109 20.9 110 11.8 111 21.6 112 10.5 113 9.6 114 0.5 115 0.5 116 11.8 117 6.3 118 29.3 119 2.8 120 25.7 121 5.1 122 18.8 123 13.5 124 14.1 125 25.2 126 17.9 127 36.7 128 17.4 129 26.1 130 20.2 131 14.2 132 8.1 133 10.0 134 26.0 134 51.1 133 46.3 132 53.4 131 46.9 130 57.0 129 58.4 128 43.7 127 63.5 126 50.5 125 53.2 124 50.1 123 51.4 122 51.7 121 40.3 120 50.7 119 37.1 118 46.2 117 34.2 116 48.4 115 51.0 114 45.8 113 47.8 112 44.8 111 53.6 110 33.4 109 53.9 108 54.7 107 56.0 106 54.6 105 54.8 104 63.1 103 48.8 102 61.4 101 51.6 100 52.7 99 51.2 98 41.7 97 47.4 96 35.7 95 46.0 94 47.2 93 32.2 92 42.8 91 31.4 90 48.0 89 45.0 88 46.3 87 53.9 86 40.0 85 57.0 84 53.7 83 54.4 82 43.6 81 58.4 80 52.9 79 60.7 78 57.1 77 48.0 76 52.1 75 48.6 74 28.1 73 51.0 72 48.0 71 27.6 70 46.2 69 35.4 68 46.1 67 48.2 66 44.6 65 44.2 64 50.6 63 40.7 62 56.2 61 59.8 60 61.9 59 54.6 58 56.3 57 58.0 56 46.1 55 59.2 54 43.3 53 47.6 52 39.5 51 45.5 50 44.1 49 38.3 48 48.5 47 46.6 46 35.5 45 49.1 44 54.9 43 41.8 42 59.2 41 36.0 40 56.0 39 58.5 38 54.2 37 62.7 36 45.8 35 52.2 34 53.0 33 39.8 32 51.5 31 48.0 30 48.7 29 47.5 28 47.8 27 41.1 26 44.1 25 27.1 24 48.0 23 44.4 22 25.3 21 51.6 20 51.6 19 57.0 18 56.3 17 58.4 16 40.5 15 61.7 14 59.3 13 59.1 12 56.0 11 36.2 10 56.2 9 51.0 8 47.6 7 46.9 6 27.1 5 42.1 4 44.9 3 48.2 2 28.5 1 48.6 0 46.0Z" fill="url(#og)"/><path transform="translate(165.9 736.3)" d="M0 11.3 1 7.3 2 20.2 3 4.5 4 8.9 5 8.3 6 13.3 7 23.8 8 19.3 9 31.6 10 20.9 11 25.8 12 33.5 13 33.4 14 42.6 15 34.1 16 34.0 17 33.1 18 28.0 19 39.8 20 21.3 21 22.6 22 17.5 23 22.2 24 12.3 25 11.0 26 10.2 27 5.7 28 19.2 29 5.7 30 15.6 31 6.7 32 13.9 33 17.0 34 19.2 35 35.7 36 27.1 37 28.8 38 29.4 39 34.2 40 32.9 41 31.9 42 34.6 43 41.3 44 30.2 45 29.4 46 22.9 47 16.9 48 23.1 49 11.9 50 18.0 51 6.6 52 4.3 53 7.4 54 7.4 55 19.6 56 6.0 57 13.0 58 12.1 59 19.9 60 21.0 61 32.2 62 25.6 63 30.9 64 27.9 65 32.1 66 41.3 67 32.6 68 41.3 69 32.4 70 27.8 71 38.3 72 23.3 73 21.7 74 16.0 75 12.4 76 17.8 77 6.8 78 15.0 79 5.2 80 7.8 81 12.5 82 7.5 83 22.5 84 12.7 85 21.2 86 19.5 87 25.7 88 38.1 89 31.5 90 29.5 91 32.1 92 36.0 93 31.3 94 41.6 95 31.4 96 26.1 97 24.6 98 21.0 99 29.5 100 19.1 101 13.0 102 7.8 103 12.4 104 7.3 105 13.8 106 4.9 107 11.6 108 15.0 109 11.3 110 13.0 111 18.1 112 24.9 113 25.6 114 36.1 115 27.7 116 32.7 117 33.6 118 34.1 119 43.8 120 39.0 121 28.0 122 33.4 123 25.6 124 18.4 125 20.9 126 14.2 127 24.7 128 10.7 129 9.9 130 7.6 131 16.3 132 5.1 133 14.4 134 7.5 134 35.6 133 35.3 132 24.1 131 30.9 130 31.3 129 34.9 128 30.0 127 36.1 126 35.4 125 43.1 124 47.0 123 47.1 122 53.3 121 44.8 120 53.5 119 55.7 118 48.1 117 56.8 116 53.8 115 49.3 114 51.3 113 38.1 112 49.2 111 43.8 110 41.2 109 29.2 108 36.9 107 32.9 106 28.5 105 33.4 104 21.3 103 33.7 102 34.4 101 34.7 100 43.1 99 42.3 98 43.4 97 47.5 96 53.2 95 45.4 94 55.1 93 46.7 92 55.7 91 56.5 90 55.8 89 46.5 88 47.9 87 42.0 86 45.7 85 42.0 84 39.1 83 38.8 82 24.9 81 34.3 80 34.1 79 29.9 78 30.6 77 25.2 76 35.0 75 40.1 74 39.7 73 45.6 72 34.0 71 50.5 70 50.7 69 51.5 68 55.0 67 45.9 66 57.8 65 55.2 64 54.3 63 53.7 62 42.4 61 47.1 60 38.6 59 34.4 58 37.6 57 35.4 56 28.7 55 30.9 54 23.4 53 30.5 52 31.8 51 34.3 50 37.7 49 30.9 48 42.2 47 41.9 46 43.3 45 50.9 44 39.5 43 54.6 42 53.3 41 58.5 40 56.4 39 46.5 38 55.1 37 52.9 36 44.8 35 46.8 34 31.6 33 41.4 32 35.3 31 39.0 30 36.7 29 26.3 28 29.7 27 29.2 26 32.7 25 36.1 24 30.3 23 37.6 22 35.8 21 44.8 20 49.4 19 50.6 18 48.5 17 52.3 16 53.4 15 52.4 14 54.3 13 50.0 12 55.3 11 51.2 10 50.6 9 46.6 8 34.2 7 38.9 6 32.2 5 36.8 4 34.9 3 25.0 2 32.8 1 23.6 0 33.2Z" fill="url(#og)"/><path transform="translate(165.9 803.3)" d="M0 16.6 1 2.8 2 4.4 3 4.3 4 9.6 5 19.9 6 11.9 7 19.5 8 15.7 9 21.2 10 27.2 11 30.3 12 31.8 13 38.6 14 33.7 15 34.8 16 37.6 17 30.2 18 39.8 19 27.4 20 19.7 21 33.5 22 16.7 23 16.0 24 12.3 25 8.2 26 14.0 27 7.5 28 13.4 29 8.0 30 6.9 31 21.2 32 13.0 33 23.0 34 16.6 35 24.5 36 29.0 37 27.6 38 37.7 39 32.7 40 33.0 41 31.7 42 37.6 43 28.4 44 34.4 45 25.6 46 21.8 47 25.7 48 18.9 49 26.8 50 7.8 51 8.4 52 16.2 53 5.6 54 10.5 55 4.8 56 7.4 57 12.8 58 14.4 59 26.0 60 17.4 61 26.8 62 25.4 63 30.7 64 43.2 65 31.1 66 33.5 67 36.2 68 31.5 69 42.7 70 28.9 71 23.7 72 22.6 73 29.3 74 16.3 75 15.8 76 11.5 77 7.4 78 13.0 79 8.8 80 4.8 81 18.9 82 6.5 83 17.8 84 10.1 85 20.0 86 25.2 87 23.9 88 33.6 89 30.0 90 30.8 91 40.2 92 34.2 93 38.6 94 32.1 95 29.9 96 34.5 97 23.2 98 28.7 99 18.9 100 14.5 101 14.9 102 10.5 103 20.0 104 5.7 105 10.8 106 3.2 107 5.9 108 17.7 109 12.8 110 18.6 111 13.9 112 30.2 113 22.7 114 30.8 115 31.1 116 32.1 117 42.5 118 34.0 119 36.3 120 31.7 121 32.4 122 29.0 123 34.0 124 21.9 125 18.2 126 15.7 127 10.2 128 17.6 129 7.1 130 8.3 131 6.9 132 7.8 133 19.9 134 9.4 134 23.1 133 33.4 132 31.9 131 31.7 130 36.1 129 21.4 128 36.1 127 36.2 126 38.9 125 44.7 124 34.9 123 47.5 122 46.0 121 52.1 120 55.6 119 55.4 118 49.9 117 54.4 116 48.7 115 55.0 114 51.0 113 46.7 112 46.6 111 30.2 110 44.3 109 29.0 108 34.3 107 32.9 106 31.7 105 33.0 104 25.0 103 32.2 102 28.0 101 39.0 100 43.1 99 35.9 98 46.1 97 41.1 96 48.8 95 52.1 94 50.9 93 56.1 92 45.6 91 57.6 90 50.9 89 52.6 88 50.8 87 34.4 86 44.5 85 40.3 84 38.3 83 36.2 82 28.6 81 31.5 80 26.6 79 21.1 78 33.2 77 33.4 76 34.8 75 37.3 74 27.8 73 44.4 72 46.2 71 48.2 70 54.8 69 51.5 68 54.7 67 53.5 66 56.8 65 48.1 64 53.4 63 45.2 62 52.7 61 46.9 60 45.6 59 39.2 58 28.0 57 35.4 56 31.0 55 31.8 54 31.5 53 19.2 52 32.5 51 31.9 50 36.3 49 38.6 48 36.0 47 43.6 46 46.1 45 49.0 44 50.9 43 45.3 42 56.6 41 56.3 40 58.0 39 53.3 38 54.7 37 41.2 36 51.9 35 43.7 34 47.0 33 41.5 32 32.6 31 38.4 30 30.9 29 33.0 28 29.1 27 17.3 26 32.3 25 32.7 24 35.8 23 42.4 22 29.7 21 44.0 20 46.9 19 43.1 18 51.3 17 49.1 16 53.0 15 55.6 14 54.0 13 56.3 12 42.4 11 52.5 10 47.9 9 42.4 8 43.5 7 38.6 6 33.2 5 35.6 4 25.3 3 31.2 2 33.1 1 26.8 0 34.0Z" fill="url(#og)"/><path transform="translate(312.1 736.3)" d="M0 2.3 1 14.3 2 3.6 3 14.0 4 9.3 5 18.0 6 27.7 7 22.7 8 34.4 9 29.4 10 42.0 11 33.5 12 34.6 13 35.9 14 34.7 15 43.0 16 33.4 17 31.5 18 28.9 19 18.6 20 21.7 21 14.2 22 5.1 23 9.9 24 5.9 25 13.1 26 1.2 27 5.6 28 7.2 29 10.9 30 10.9 31 17.8 32 20.2 33 34.8 34 28.5 35 34.7 36 32.5 37 38.0 38 47.1 39 36.3 40 34.6 41 29.9 42 36.7 43 29.4 44 28.4 45 19.9 46 12.2 47 16.0 48 6.6 49 14.8 50 4.8 51 6.6 52 5.0 53 4.9 54 16.6 55 11.6 56 18.1 57 18.2 58 21.4 59 28.4 60 27.5 61 32.8 62 44.5 63 35.1 64 39.8 65 37.1 66 33.6 67 44.0 68 29.8 69 29.3 70 22.6 71 20.4 72 13.2 73 8.8 74 14.7 75 6.1 76 11.3 77 5.0 78 5.4 79 6.0 80 8.3 81 12.3 82 12.1 83 27.8 84 21.2 85 30.2 86 30.4 87 33.5 88 41.3 89 36.6 90 34.1 91 38.6 92 36.1 93 44.3 94 29.0 95 29.5 96 26.3 97 15.6 98 20.8 99 8.7 100 15.8 101 4.2 102 5.1 103 4.3 104 3.1 105 7.3 106 4.8 107 23.9 108 11.3 109 20.1 110 30.4 111 23.0 112 31.0 113 37.5 114 36.0 115 43.1 116 35.9 117 36.8 118 36.9 119 33.3 120 25.2 121 23.7 122 29.9 123 14.5 124 20.9 125 9.8 126 7.3 127 9.2 128 4.5 129 14.5 130 3.0 131 4.7 132 16.8 133 11.5 134 18.9 134 39.5 133 28.3 132 35.2 131 25.0 130 32.0 129 25.5 128 18.0 127 27.5 126 35.8 125 29.9 124 37.8 123 31.2 122 45.2 121 47.6 120 53.8 119 51.5 118 54.1 117 57.6 116 55.1 115 60.3 114 45.5 113 54.3 112 54.7 111 52.0 110 48.8 109 40.9 108 38.4 107 36.9 106 21.9 105 33.6 104 31.6 103 30.3 102 31.1 101 21.8 100 35.5 99 21.9 98 37.2 97 42.1 96 43.5 95 51.7 94 45.0 93 54.9 92 50.9 91 58.1 90 57.1 89 49.4 88 58.0 87 51.1 86 53.4 85 47.7 84 39.8 83 41.2 82 31.4 81 37.9 80 33.0 79 32.2 78 26.3 77 24.6 76 32.3 75 19.5 74 31.0 73 37.1 72 39.3 71 44.1 70 36.4 69 50.4 68 44.7 67 52.8 66 52.1 65 57.1 64 57.4 63 53.2 62 56.4 61 44.7 60 50.6 59 50.6 58 40.7 57 43.8 56 36.4 55 27.1 54 32.7 53 23.8 52 32.2 51 30.8 50 22.5 49 32.5 48 28.0 47 35.6 46 42.1 45 39.6 44 50.7 43 40.0 42 55.7 41 57.9 40 58.8 39 53.1 38 57.3 37 50.4 36 55.8 35 54.1 34 46.6 33 48.1 32 30.9 31 43.0 30 34.5 29 25.3 28 31.4 27 29.5 26 23.2 25 31.6 24 20.2 23 32.5 22 36.8 21 37.0 20 42.3 19 43.3 18 46.4 17 53.8 16 48.8 15 58.6 14 51.6 13 59.8 12 60.0 11 59.4 10 57.8 9 50.1 8 50.5 7 37.4 6 45.3 5 37.0 4 37.4 3 33.8 2 24.2 1 29.8 0 23.9Z" fill="url(#og)"/><path transform="translate(312.1 803.3)" d="M0 10.6 1 0.5 2 3.9 3 6.5 4 9.1 5 25.0 6 17.8 7 24.1 8 23.7 9 32.2 10 44.4 11 32.3 12 37.1 13 37.1 14 35.5 15 43.0 16 34.2 17 33.2 18 27.7 19 22.1 20 15.0 21 25.8 22 10.1 23 9.0 24 2.9 25 5.5 26 10.9 27 1.6 28 12.6 29 6.4 30 18.0 31 14.8 32 21.8 33 24.4 34 27.9 35 40.5 36 30.7 37 34.0 38 38.6 39 36.1 40 31.4 41 35.6 42 30.7 43 40.9 44 23.6 45 20.3 46 15.0 47 13.0 48 17.2 49 8.3 50 3.0 51 1.1 52 3.5 53 10.6 54 6.2 55 13.8 56 13.7 57 18.2 58 23.6 59 25.2 60 33.7 61 33.5 62 39.9 63 35.7 64 37.3 65 39.5 66 35.4 67 42.5 68 31.6 69 29.2 70 34.2 71 19.5 72 17.3 73 10.1 74 9.5 75 8.4 76 4.6 77 15.5 78 6.5 79 6.8 80 2.0 81 10.7 82 11.1 83 18.1 84 35.4 85 23.6 86 31.1 87 34.3 88 36.8 89 42.2 90 34.1 91 33.9 92 40.4 93 31.8 94 39.3 95 27.7 96 22.3 97 22.4 98 14.9 99 22.2 100 11.7 101 3.0 102 3.1 103 9.4 104 2.6 105 15.6 106 8.8 107 13.7 108 14.0 109 20.1 110 25.8 111 23.9 112 28.7 113 34.3 114 36.4 115 42.7 116 35.1 117 36.9 118 34.9 119 34.4 120 28.9 121 26.1 122 20.3 123 13.6 124 23.8 125 10.6 126 14.5 127 7.5 128 3.7 129 6.6 130 14.9 131 3.0 132 12.3 133 7.6 134 17.1 134 36.0 133 40.8 132 33.0 131 27.8 130 31.5 129 28.9 128 29.3 127 29.6 126 32.7 125 22.7 124 38.7 123 42.8 122 45.9 121 50.5 120 45.6 119 48.0 118 55.8 117 57.3 116 58.1 115 57.8 114 44.7 113 56.0 112 50.1 111 51.2 110 45.5 109 33.8 108 40.2 107 34.6 106 28.4 105 31.3 104 15.5 103 28.2 102 28.2 101 27.6 100 35.8 99 37.4 98 35.2 97 42.9 96 46.9 95 44.0 94 52.1 93 49.7 92 55.1 91 58.3 90 58.5 89 59.2 88 51.2 87 55.3 86 52.7 85 44.2 84 43.0 83 32.9 82 41.0 81 37.1 80 31.7 79 28.2 78 24.4 77 30.3 76 20.7 75 32.8 74 33.2 73 36.6 72 42.2 71 29.8 70 47.1 69 51.8 68 44.0 67 52.9 66 50.0 65 58.9 64 58.0 63 57.7 62 55.7 61 43.7 60 54.7 59 36.0 58 45.3 57 37.2 56 40.1 55 33.1 54 17.6 53 29.3 52 28.5 51 30.3 50 31.4 49 18.1 48 35.1 47 33.7 46 39.4 45 45.6 44 38.6 43 50.4 42 51.3 41 58.0 40 60.6 39 52.0 38 58.1 37 58.1 36 56.0 35 53.6 34 41.3 33 48.2 32 43.5 31 41.2 30 37.8 29 33.9 28 31.4 27 17.8 26 26.6 25 28.7 24 30.0 23 34.6 22 22.6 21 38.8 20 40.9 19 44.8 18 45.8 17 51.3 16 43.1 15 58.3 14 56.1 13 58.4 12 60.8 11 51.0 10 58.5 9 49.5 8 50.6 7 45.8 6 38.8 5 38.8 4 26.9 3 35.8 2 29.3 1 29.3 0 32.2Z" fill="url(#og)"/><path transform="translate(458.3 736.3)" d="M0 23.9 1 25.3 2 22.2 3 31.5 4 25.2 5 31.3 6 7.0 7 24.4 8 26.3 9 24.7 10 31.5 11 27.6 12 13.8 13 19.6 14 19.6 15 32.8 16 26.3 17 28.8 18 11.3 19 33.1 20 21.3 21 26.9 22 26.6 23 29.6 24 11.1 25 23.7 26 21.1 27 25.9 28 34.0 29 28.0 30 14.6 31 32.7 32 21.6 33 28.0 34 23.1 35 29.4 36 27.6 37 21.9 38 22.4 39 25.3 40 24.4 41 33.5 42 14.2 43 30.6 44 18.4 45 26.8 46 26.4 47 27.6 48 8.0 49 32.3 50 19.5 51 29.1 52 23.9 53 27.6 54 5.6 55 28.7 56 17.2 57 25.0 58 26.5 59 26.6 60 15.2 61 27.9 62 20.1 63 29.9 64 27.3 65 29.0 66 14.0 67 28.0 68 22.3 69 27.0 70 29.5 71 27.4 72 14.3 73 33.3 74 19.1 75 29.8 76 26.9 77 28.7 78 15.3 79 34.9 80 21.4 81 28.4 82 26.0 83 27.8 84 25.7 85 24.2 86 30.3 87 25.3 88 24.9 89 30.4 90 14.1 91 30.9 92 20.5 93 29.6 94 24.4 95 27.4 96 19.1 97 31.9 98 22.3 99 29.5 100 23.6 101 28.4 102 27.0 103 22.4 104 19.8 105 26.5 106 22.8 107 31.7 108 19.1 109 27.4 110 24.0 111 34.1 112 24.5 113 29.1 114 7.5 115 29.5 116 17.5 117 30.7 118 22.1 119 27.0 120 7.5 121 21.1 122 34.3 123 26.0 124 26.1 125 29.3 126 7.7 127 33.4 128 21.3 129 28.9 130 22.3 131 28.7 132 8.9 133 24.5 134 20.9 134 41.5 133 41.9 132 41.6 131 36.6 130 39.4 129 40.1 128 34.8 127 41.7 126 43.1 125 37.2 124 39.3 123 35.6 122 45.4 121 37.5 120 49.5 119 38.5 118 38.5 117 40.1 116 34.7 115 42.4 114 49.6 113 36.1 112 38.7 111 38.4 110 33.8 109 40.3 108 49.3 107 37.3 106 36.9 105 37.5 104 44.7 103 40.7 102 52.0 101 36.0 100 37.0 99 38.2 98 36.6 97 38.8 96 43.7 95 35.5 94 39.1 93 38.5 92 36.3 91 40.0 90 41.5 89 35.3 88 38.8 87 36.9 86 42.2 85 32.1 84 48.3 83 34.5 82 38.4 81 38.5 80 37.7 79 39.3 78 39.8 77 34.8 76 40.0 75 39.3 74 36.3 73 40.7 72 39.7 71 32.5 70 40.6 69 36.7 68 42.9 67 42.7 66 35.6 65 37.4 64 35.4 63 39.0 62 36.6 61 39.7 60 48.1 59 34.2 58 40.8 57 40.0 56 40.3 55 43.7 54 35.8 53 36.4 52 41.6 51 39.2 50 36.8 49 43.3 48 46.7 47 35.6 46 39.2 45 39.0 44 37.3 43 39.7 42 37.6 41 37.5 40 39.0 39 39.1 38 43.9 37 38.2 36 51.3 35 34.6 34 40.5 33 38.1 32 38.1 31 40.0 30 43.5 29 34.5 28 38.8 27 35.3 26 41.4 25 42.0 24 39.7 23 35.4 22 41.6 21 38.4 20 36.3 19 41.5 18 39.9 17 37.9 16 34.9 15 38.2 14 41.5 13 41.3 12 55.1 11 35.6 10 38.5 9 33.9 8 41.1 7 41.3 6 48.8 5 38.2 4 33.3 3 39.0 2 41.0 1 40.4 0 49.9Z" fill="url(#og)"/><path transform="translate(458.3 803.3)" d="M0 11.1 1 27.2 2 17.6 3 28.0 4 33.5 5 26.4 6 21.0 7 19.5 8 29.1 9 24.8 10 23.4 11 27.9 12 14.0 13 27.6 14 23.7 15 26.3 16 29.0 17 26.7 18 18.4 19 25.4 20 22.3 21 30.5 22 24.3 23 29.0 24 20.1 25 24.6 26 20.0 27 29.9 28 23.6 29 31.4 30 9.8 31 24.3 32 18.5 33 28.2 34 32.7 35 27.8 36 12.0 37 23.7 38 33.0 39 27.4 40 25.2 41 27.0 42 27.7 43 22.2 44 22.3 45 27.3 46 28.1 47 30.6 48 15.9 49 30.3 50 22.5 51 30.4 52 23.2 53 28.7 54 26.5 55 20.3 56 20.6 57 27.1 58 23.2 59 32.1 60 10.0 61 24.9 62 21.8 63 26.7 64 31.3 65 27.1 66 32.8 67 26.0 68 24.7 69 25.4 70 25.1 71 30.5 72 17.6 73 20.8 74 23.4 75 31.3 76 25.8 77 29.9 78 8.2 79 22.4 80 30.9 81 26.3 82 27.1 83 26.5 84 14.3 85 22.3 86 23.7 87 32.3 88 23.2 89 28.5 90 16.8 91 21.2 92 21.3 93 31.3 94 25.0 95 29.1 96 28.6 97 23.4 98 25.5 99 26.9 100 27.0 101 29.5 102 19.5 103 26.9 104 24.8 105 31.8 106 22.5 107 30.8 108 12.0 109 27.3 110 23.9 111 33.1 112 22.0 113 29.7 114 6.8 115 25.1 116 19.0 117 28.5 118 30.0 119 26.5 120 27.3 121 24.4 122 23.8 123 26.8 124 25.1 125 31.2 126 17.9 127 21.9 128 20.2 129 31.8 130 24.4 131 30.8 132 18.1 133 26.9 134 24.3 134 42.9 133 40.3 132 41.2 131 37.6 130 33.9 129 39.5 128 43.2 127 39.7 126 57.5 125 38.5 124 39.8 123 37.8 122 43.5 121 33.5 120 49.1 119 33.7 118 41.0 117 34.6 116 42.5 115 42.8 114 43.2 113 38.5 112 40.1 111 39.3 110 33.8 109 41.9 108 55.4 107 37.3 106 38.5 105 38.2 104 34.6 103 39.7 102 50.4 101 37.3 100 38.1 99 36.6 98 41.6 97 34.2 96 48.3 95 37.4 94 33.8 93 38.0 92 39.5 91 39.1 90 53.0 89 38.6 88 33.6 87 38.4 86 38.2 85 40.3 84 51.2 83 36.9 82 41.8 81 34.6 80 44.7 79 38.1 78 51.5 77 37.1 76 35.7 75 37.9 74 38.8 73 39.4 72 52.7 71 36.0 70 39.4 69 37.7 68 43.1 67 33.0 66 48.8 65 35.4 64 39.4 63 37.7 62 41.7 61 42.2 60 44.2 59 36.5 58 36.2 57 39.8 56 46.7 55 40.5 54 54.3 53 38.1 52 39.2 51 38.9 50 33.4 49 39.2 48 46.5 47 37.0 46 34.4 45 38.9 44 41.6 43 40.5 42 50.2 41 36.1 40 41.5 39 35.1 38 40.9 37 37.0 36 47.0 35 33.8 34 39.2 33 37.7 32 40.4 31 40.7 30 37.1 29 37.1 28 32.8 27 37.5 26 40.0 25 40.4 24 48.0 23 37.5 22 36.0 21 38.6 20 36.0 19 41.3 18 50.9 17 31.7 16 40.3 15 37.2 14 43.6 13 42.1 12 36.4 11 38.1 10 40.7 9 38.1 8 43.4 7 33.3 6 50.4 5 34.7 4 38.2 3 37.5 2 41.2 1 42.3 0 41.2Z" fill="url(#og)"/><path transform="translate(604.5 736.3)" d="M0 18.6 1 23.5 2 21.5 3 32.2 4 21.5 5 27.5 6 16.2 7 23.8 8 25.8 9 26.1 10 4.6 11 21.5 12 18.8 13 25.2 14 32.9 15 28.1 16 14.5 17 27.4 18 19.2 19 25.5 20 10.0 21 22.5 22 29.2 23 26.1 24 21.5 25 12.9 26 11.9 27 31.9 28 19.2 29 29.6 30 13.6 31 24.5 32 23.8 33 26.4 34 29.2 35 15.9 36 18.1 37 21.8 38 20.4 39 30.2 40 22.1 41 21.3 42 26.8 43 24.7 44 20.6 45 19.5 46 18.3 47 23.6 48 29.3 49 26.5 50 26.4 51 23.6 52 23.5 53 27.1 54 21.6 55 17.2 56 25.7 57 22.7 58 19.2 59 28.6 60 22.1 61 19.4 62 16.4 63 25.7 64 20.6 65 18.5 66 18.4 67 23.3 68 19.7 69 34.3 70 11.1 71 30.6 72 21.1 73 30.1 74 20.0 75 19.4 76 22.9 77 24.5 78 23.2 79 29.4 80 11.4 81 23.6 82 21.8 83 27.1 84 33.3 85 17.7 86 9.4 87 23.6 88 33.3 89 25.3 90 10.7 91 31.4 92 20.8 93 27.7 94 21.8 95 21.7 96 21.7 97 23.5 98 21.3 99 32.1 100 14.6 101 31.2 102 20.8 103 26.8 104 27.7 105 20.7 106 13.1 107 23.9 108 30.6 109 25.9 110 8.4 111 20.2 112 15.4 113 33.7 114 23.8 115 20.5 116 25.1 117 24.0 118 19.8 119 28.7 120 6.3 121 31.0 122 17.1 123 24.2 124 20.1 125 19.8 126 18.1 127 27.1 128 22.2 129 31.7 130 3.8 131 24.2 132 15.2 133 25.7 134 31.7 134 43.1 133 37.9 132 47.1 131 43.5 130 46.6 129 38.5 128 35.5 127 41.1 126 46.8 125 43.0 124 42.1 123 39.8 122 42.4 121 42.8 120 39.4 119 38.8 118 44.3 117 36.7 116 47.5 115 34.7 114 36.2 113 40.6 112 42.1 111 43.6 110 58.8 109 34.3 108 43.9 107 40.1 106 45.9 105 44.7 104 40.8 103 39.5 102 42.0 101 40.3 100 30.6 99 38.1 98 41.2 97 39.5 96 47.7 95 36.0 94 41.9 93 38.0 92 38.4 91 42.0 90 46.4 89 34.4 88 44.9 87 39.4 86 50.0 85 49.7 84 42.6 83 35.6 82 44.7 81 42.1 80 44.6 79 38.6 78 41.4 77 38.6 76 50.9 75 32.4 74 41.4 73 38.8 72 32.6 71 42.0 70 46.7 69 39.6 68 39.0 67 39.4 66 51.3 65 41.8 64 33.6 63 38.7 62 49.3 61 41.9 60 57.8 59 38.8 58 44.0 57 40.3 56 49.1 55 33.1 54 40.6 53 37.5 52 47.2 51 33.9 50 50.0 49 37.4 48 42.6 47 32.9 46 46.2 45 45.0 44 41.5 43 37.8 42 43.9 41 32.9 40 52.0 39 39.1 38 43.4 37 39.5 36 53.3 35 36.3 34 42.5 33 34.6 32 43.6 31 40.2 30 46.9 29 38.8 28 34.8 27 40.7 26 46.2 25 44.6 24 42.3 23 35.0 22 45.9 21 35.4 20 50.2 19 37.7 18 40.1 17 41.9 16 35.5 15 45.3 14 41.4 13 35.0 12 45.2 11 45.9 10 48.3 9 34.5 8 42.0 7 41.1 6 42.4 5 43.8 4 36.3 3 39.2 2 40.0 1 41.1 0 48.3Z" fill="url(#og)"/><path transform="translate(604.5 803.3)" d="M0 8.9 1 23.7 2 17.4 3 32.5 4 22.1 5 14.1 6 17.1 7 25.1 8 19.5 9 32.9 10 7.3 11 31.4 12 16.9 13 25.2 14 22.6 15 23.1 16 9.3 17 24.0 18 29.6 19 27.1 20 7.4 21 30.6 22 17.8 23 24.8 24 26.0 25 15.8 26 11.5 27 28.8 28 16.8 29 28.2 30 24.3 31 20.9 32 26.9 33 23.9 34 23.9 35 19.1 36 14.8 37 26.6 38 23.2 39 32.5 40 9.7 41 26.8 42 15.7 43 24.8 44 32.3 45 17.5 46 16.3 47 23.9 48 20.3 49 32.6 50 11.1 51 30.6 52 15.1 53 25.0 54 24.9 55 24.9 56 20.0 57 25.4 58 31.7 59 26.8 60 19.8 61 22.9 62 20.2 63 27.3 64 21.3 65 22.0 66 18.4 67 32.4 68 23.0 69 27.0 70 26.7 71 24.7 72 21.5 73 26.5 74 24.3 75 32.0 76 17.2 77 27.4 78 23.5 79 29.1 80 6.5 81 21.8 82 15.1 83 32.6 84 21.2 85 18.1 86 27.2 87 24.5 88 22.7 89 28.9 90 7.9 91 20.8 92 19.0 93 33.5 94 19.0 95 33.9 96 11.7 97 25.7 98 20.2 99 25.0 100 11.6 101 22.1 102 15.6 103 32.9 104 19.4 105 17.7 106 21.7 107 23.9 108 20.9 109 27.6 110 6.8 111 23.2 112 29.3 113 24.6 114 24.7 115 18.6 116 19.3 117 25.7 118 19.8 119 33.4 120 12.9 121 30.7 122 19.6 123 28.7 124 23.1 125 24.0 126 14.7 127 31.9 128 19.6 129 28.0 130 13.3 131 28.3 132 20.4 133 26.3 134 25.4 134 39.6 133 39.3 132 39.8 131 41.0 130 34.1 129 39.3 128 41.6 127 40.7 126 35.3 125 42.6 124 38.4 123 39.4 122 31.7 121 39.9 120 48.8 119 38.5 118 39.0 117 39.9 116 49.1 115 40.2 114 44.4 113 35.4 112 45.2 111 40.3 110 52.2 109 38.3 108 45.5 107 38.9 106 52.1 105 33.3 104 38.3 103 40.0 102 41.4 101 42.3 100 59.4 99 36.7 98 43.7 97 42.7 96 43.9 95 45.8 94 38.8 93 41.3 92 40.9 91 43.1 90 59.1 89 39.3 88 44.8 87 37.7 86 48.7 85 33.3 84 35.1 83 39.4 82 39.2 81 42.9 80 60.1 79 36.7 78 42.7 77 39.7 76 39.4 75 41.5 74 36.3 73 38.4 72 42.0 71 37.1 70 46.6 69 37.7 68 38.2 67 38.1 66 41.0 65 42.9 64 35.2 63 38.9 62 45.0 61 40.1 60 53.1 59 36.2 58 44.2 57 37.5 56 45.1 55 44.3 54 43.4 53 40.1 52 41.5 51 43.6 50 35.0 49 37.9 48 43.2 47 39.1 46 50.4 45 39.0 44 42.3 43 38.1 42 44.4 41 41.0 40 41.1 39 38.0 38 34.2 37 38.9 36 48.2 35 42.1 34 41.0 33 39.3 32 49.2 31 33.3 30 55.1 29 38.5 28 34.1 27 41.7 26 49.6 25 46.2 24 42.0 23 39.2 22 42.0 21 43.4 20 32.9 19 31.0 18 44.8 17 41.5 16 46.9 15 46.6 14 39.6 13 40.5 12 39.3 11 43.8 10 35.8 9 37.2 8 37.2 7 41.4 6 53.1 5 42.8 4 37.7 3 38.2 2 37.0 1 42.8 0 55.5Z" fill="url(#og)"/><path transform="translate(19.8 898.5)" d="M0 16.2 1 20.1 2 26.1 3 20.6 4 28.9 5 20.2 6 16.3 7 16.5 8 33.2 9 19.0 10 24.8 11 20.1 12 13.8 13 19.4 14 18.1 15 25.8 16 18.6 17 23.1 18 16.2 19 19.1 20 20.9 21 18.4 22 28.2 23 24.3 24 16.5 25 26.1 26 22.4 27 22.5 28 30.1 29 23.3 30 16.5 31 28.2 32 19.0 33 18.9 34 21.6 35 21.0 36 15.0 37 14.6 38 17.3 39 29.0 40 19.9 41 24.8 42 17.6 43 25.0 44 20.0 45 29.9 46 20.2 47 23.2 48 16.0 49 28.9 50 18.6 51 25.9 52 19.1 53 19.4 54 13.8 55 18.4 56 23.8 57 21.5 58 31.8 59 21.2 60 15.9 61 28.9 62 18.9 63 21.0 64 18.6 65 19.4 66 15.0 67 21.2 68 18.1 69 37.0 70 21.8 71 20.7 72 31.5 73 13.7 74 22.6 75 17.9 76 19.9 77 29.9 78 15.8 79 19.2 80 27.0 81 17.6 82 30.3 83 20.4 84 19.6 85 16.2 86 19.7 87 28.2 88 22.4 89 28.5 90 14.2 91 14.0 92 17.1 93 31.0 94 21.8 95 23.3 96 20.4 97 16.7 98 17.8 99 29.3 100 19.6 101 25.6 102 19.5 103 21.2 104 25.8 105 20.2 106 26.7 107 21.5 108 21.3 109 13.9 110 20.5 111 25.4 112 21.7 113 29.4 114 17.6 115 19.0 116 27.7 117 19.3 118 28.4 119 19.8 120 13.7 121 22.0 122 28.3 123 20.5 124 28.4 125 20.3 126 15.1 127 20.5 128 22.8 129 23.7 130 31.1 131 19.7 132 15.3 133 23.8 134 19.1 134 31.5 133 53.6 132 51.6 131 37.3 130 50.4 129 42.4 128 49.9 127 56.1 126 41.3 125 45.8 124 47.9 123 30.8 122 53.3 121 56.4 120 52.1 119 46.7 118 48.6 117 35.1 116 51.5 115 49.4 114 50.5 113 49.6 112 32.2 111 48.2 110 55.9 109 50.9 108 63.0 107 48.2 106 46.6 105 33.5 104 50.0 103 49.8 102 53.4 101 50.2 100 34.7 99 53.4 98 50.5 97 53.7 96 62.6 95 50.0 94 33.0 93 50.1 92 50.1 91 57.6 90 57.1 89 53.0 88 33.8 87 53.0 86 53.3 85 54.8 84 59.9 83 49.6 82 50.0 81 30.7 80 51.7 79 54.1 78 56.6 77 53.2 76 45.5 75 50.1 74 56.7 73 36.3 72 61.0 71 52.8 70 39.9 69 52.2 68 41.0 67 57.5 66 59.5 65 38.6 64 51.7 63 50.3 62 43.3 61 59.1 60 34.5 59 37.7 58 54.5 57 40.0 56 55.0 55 57.6 54 50.8 53 51.1 52 44.2 51 55.5 50 36.8 49 55.5 48 56.2 47 52.3 46 42.8 45 50.3 44 40.2 43 56.7 42 54.5 41 51.2 40 30.5 39 51.9 38 50.7 37 55.9 36 61.7 35 41.2 34 44.5 33 48.6 32 47.1 31 51.7 30 32.2 29 33.7 28 44.5 27 47.4 26 47.1 25 53.7 24 41.6 23 34.7 22 49.3 21 50.1 20 56.3 19 57.7 18 44.8 17 54.7 16 49.9 15 55.2 14 38.0 13 55.3 12 61.0 11 50.5 10 50.6 9 37.6 8 57.8 7 44.9 6 57.8 5 41.4 4 51.8 3 40.1 2 48.8 1 53.4 0 56.1Z" fill="url(#og)"/><path transform="translate(19.8 965.5)" d="M0 21.7 1 18.8 2 32.7 3 22.8 4 26.9 5 21.3 6 13.3 7 25.8 8 16.4 9 29.5 10 20.6 11 19.5 12 16.6 13 27.8 14 16.2 15 27.7 16 24.6 17 21.4 18 17.2 19 20.8 20 20.9 21 31.0 22 22.2 23 20.4 24 20.4 25 28.0 26 22.3 27 23.4 28 24.8 29 21.6 30 17.4 31 18.9 32 21.4 33 21.6 34 32.2 35 23.2 36 29.9 37 17.4 38 22.5 39 17.6 40 21.2 41 27.8 42 28.8 43 18.3 44 21.2 45 18.7 46 17.9 47 33.5 48 14.4 49 17.6 50 29.1 51 22.0 52 29.3 53 19.2 54 12.7 55 18.9 56 29.3 57 19.7 58 26.5 59 22.6 60 13.3 61 20.8 62 23.2 63 19.7 64 28.4 65 19.7 66 15.6 67 18.1 68 23.9 69 22.1 70 32.4 71 22.4 72 27.6 73 15.9 74 25.7 75 19.3 76 19.9 77 26.6 78 17.5 79 35.2 80 19.3 81 22.3 82 23.2 83 22.4 84 16.4 85 24.6 86 19.0 87 20.6 88 25.0 89 20.4 90 19.6 91 21.3 92 22.5 93 31.0 94 24.0 95 24.4 96 15.1 97 34.4 98 17.6 99 23.3 100 21.0 101 21.7 102 16.7 103 18.4 104 38.7 105 20.4 106 20.2 107 24.7 108 23.8 109 16.0 110 18.5 111 28.6 112 20.0 113 28.3 114 16.7 115 29.9 116 15.9 117 18.5 118 20.1 119 22.8 120 16.4 121 14.0 122 17.2 123 25.0 124 22.2 125 27.8 126 16.1 127 28.7 128 18.6 129 22.6 130 24.3 131 23.0 132 20.8 133 16.7 134 32.2 134 49.8 133 34.9 132 51.1 131 38.2 130 45.4 129 45.7 128 49.4 127 56.8 126 32.4 125 53.2 124 32.7 123 54.4 122 45.8 121 56.8 120 63.1 119 39.6 118 53.4 117 48.3 116 42.3 115 52.7 114 42.7 113 48.4 112 33.0 111 52.9 110 51.9 109 51.5 108 60.0 107 51.8 106 52.7 105 37.8 104 55.0 103 48.5 102 61.4 101 41.6 100 47.9 99 49.6 98 42.1 97 58.9 96 44.9 95 45.2 94 39.9 93 47.3 92 47.3 91 52.8 90 58.3 89 33.5 88 53.6 87 51.2 86 52.2 85 58.5 84 35.3 83 46.7 82 45.2 81 47.8 80 46.0 79 54.4 78 46.6 77 50.7 76 47.6 75 49.0 74 54.8 73 31.7 72 56.9 71 38.1 70 48.3 69 40.5 68 45.9 67 57.3 66 51.9 65 45.7 64 51.9 63 30.6 62 47.8 61 49.4 60 52.9 59 46.4 58 47.9 57 31.7 56 55.3 55 51.5 54 61.6 53 50.0 52 49.8 51 35.6 50 55.2 49 48.8 48 57.1 47 48.1 46 47.0 45 49.0 44 57.5 43 44.2 42 61.1 41 48.9 40 46.1 39 49.8 38 57.2 37 38.3 36 63.2 35 42.2 34 48.9 33 42.4 32 50.3 31 56.3 30 50.0 29 40.0 28 50.5 27 48.5 26 46.7 25 54.0 24 31.2 23 48.1 22 45.6 21 51.7 20 38.5 19 56.7 18 54.6 17 50.5 16 43.0 15 54.9 14 34.8 13 52.8 12 52.0 11 49.0 10 45.6 9 51.5 8 37.6 7 56.6 6 63.1 5 45.6 4 47.0 3 42.1 2 50.7 1 41.3 0 53.6Z" fill="url(#og)"/><path transform="translate(165.9 898.5)" d="M0 13.3 1 10.9 2 12.1 3 23.7 4 11.0 5 26.5 6 9.8 7 9.1 8 23.4 9 12.2 10 21.0 11 13.6 12 30.0 13 5.9 14 13.7 15 10.6 16 9.7 17 29.0 18 14.4 19 7.4 20 29.7 21 7.7 22 16.2 23 14.0 24 3.1 25 5.9 26 27.4 27 12.6 28 20.2 29 12.0 30 0.8 31 2.7 32 12.0 33 10.6 34 33.4 35 11.5 36 0.5 37 10.3 38 8.5 39 10.6 40 32.9 41 11.7 42 2.8 43 8.8 44 13.4 45 10.8 46 31.6 47 16.3 48 2.0 49 13.1 50 8.4 51 28.3 52 9.1 53 14.7 54 1.6 55 10.0 56 14.6 57 7.2 58 27.9 59 11.7 60 6.4 61 24.6 62 11.9 63 15.4 64 20.2 65 12.6 66 30.1 67 3.3 68 10.8 69 11.9 70 10.7 71 26.8 72 15.9 73 10.8 74 10.8 75 26.2 76 13.6 77 19.6 78 32.8 79 6.0 80 16.1 81 10.1 82 12.3 83 22.2 84 6.7 85 4.3 86 9.1 87 33.6 88 15.7 89 20.0 90 6.3 91 23.9 92 10.8 93 8.3 94 19.1 95 13.9 96 2.3 97 9.8 98 13.9 99 8.4 100 32.8 101 11.4 102 5.4 103 21.6 104 8.8 105 12.2 106 15.7 107 13.4 108 32.8 109 7.9 110 11.6 111 15.6 112 17.1 113 33.2 114 23.3 115 11.7 116 12.9 117 19.4 118 15.1 119 31.0 120 22.4 121 7.5 122 12.2 123 16.7 124 10.9 125 30.7 126 23.4 127 4.8 128 8.2 129 13.9 130 12.0 131 29.1 132 10.0 133 14.7 134 9.3 134 36.0 133 62.3 132 65.5 131 55.2 130 42.6 129 54.9 128 65.5 127 54.9 126 65.5 125 56.0 124 40.0 123 59.4 122 60.3 121 56.5 120 65.5 119 57.5 118 33.5 117 55.2 116 57.4 115 58.7 114 64.0 113 57.2 112 49.9 111 53.9 110 62.5 109 51.9 108 63.0 107 41.1 106 55.4 105 58.3 104 51.0 103 65.5 102 32.0 101 48.6 100 62.1 99 43.1 98 58.8 97 65.5 96 63.3 95 43.1 94 59.8 93 56.9 92 59.4 91 65.2 90 28.5 89 58.0 88 36.6 87 63.1 86 50.6 85 65.5 84 65.5 83 55.0 82 56.4 81 64.5 80 65.5 79 41.0 78 65.5 77 54.3 76 38.1 75 55.9 74 52.2 73 59.5 72 63.2 71 57.7 70 47.4 69 55.1 68 58.5 67 49.5 66 65.5 65 40.7 64 53.9 63 53.8 62 50.8 61 63.2 60 35.8 59 46.8 58 59.1 57 36.0 56 62.7 55 65.5 54 64.6 53 55.1 52 49.5 51 59.2 50 39.6 49 63.6 48 65.5 47 47.6 46 58.1 45 39.9 44 61.1 43 65.5 42 65.5 41 40.8 40 60.1 39 49.2 38 60.6 37 65.5 36 51.4 35 48.6 34 63.1 33 43.6 32 65.5 31 65.5 30 65.1 29 54.9 28 61.2 27 38.5 26 60.9 25 56.1 24 65.5 23 55.7 22 58.9 21 50.7 20 64.5 19 36.6 18 63.4 17 54.8 16 53.3 15 63.0 14 65.5 13 54.1 12 65.5 11 51.4 10 54.8 9 36.6 8 58.0 7 52.4 6 58.6 5 54.8 4 35.2 3 59.1 2 58.6 1 58.9 0 65.5Z" fill="url(#og)"/><path transform="translate(165.9 965.5)" d="M0 3.7 1 10.3 2 8.9 3 30.6 4 11.5 5 17.5 6 12.1 7 36.3 8 11.7 9 18.7 10 14.3 11 15.6 12 7.0 13 14.8 14 14.4 15 14.4 16 23.8 17 12.7 18 4.7 19 32.5 20 12.5 21 14.6 22 13.6 23 11.0 24 10.0 25 24.7 26 12.5 27 21.7 28 13.6 29 14.0 30 21.7 31 9.2 32 24.3 33 14.3 34 15.5 35 22.4 36 4.8 37 18.6 38 10.5 39 11.1 40 23.0 41 12.7 42 2.7 43 14.4 44 10.0 45 9.4 46 22.3 47 12.3 48 18.9 49 11.1 50 23.1 51 13.8 52 15.7 53 18.2 54 5.4 55 12.5 56 13.3 57 11.0 58 25.9 59 15.2 60 32.4 61 6.3 62 9.1 63 13.0 64 14.3 65 28.2 66 4.2 67 9.4 68 16.8 69 8.3 70 27.1 71 14.2 72 8.7 73 14.1 74 10.2 75 10.7 76 23.1 77 14.7 78 7.9 79 9.9 80 8.7 81 13.7 82 28.6 83 13.4 84 23.6 85 10.2 86 8.6 87 13.9 88 10.0 89 38.4 90 30.8 91 9.2 92 12.2 93 16.3 94 15.7 95 34.0 96 16.9 97 11.0 98 27.4 99 11.9 100 17.3 101 17.1 102 3.8 103 12.9 104 7.5 105 9.5 106 30.7 107 11.4 108 0.6 109 29.2 110 6.6 111 12.9 112 13.3 113 14.3 114 0.9 115 10.6 116 11.1 117 12.8 118 30.1 119 13.3 120 1.9 121 24.4 122 5.7 123 11.1 124 14.5 125 11.9 126 0.5 127 11.0 128 21.7 129 8.7 130 29.6 131 13.4 132 28.2 133 7.7 134 14.5 134 60.1 133 40.1 132 64.5 131 47.3 130 56.8 129 31.7 128 61.9 127 61.7 126 65.5 125 41.2 124 60.5 123 59.3 122 62.0 121 65.5 120 31.0 119 39.2 118 61.7 117 50.0 116 62.8 115 65.5 114 56.7 113 49.0 112 60.5 111 60.4 110 43.3 109 65.5 108 56.8 107 40.3 106 61.1 105 48.0 104 59.7 103 65.2 102 51.4 101 50.7 100 56.2 99 54.1 98 55.7 97 30.5 96 65.5 95 56.1 94 49.1 93 55.3 92 56.0 91 46.2 90 62.0 89 57.0 88 41.5 87 56.5 86 65.5 85 54.9 84 65.5 83 36.3 82 56.2 81 54.0 80 56.3 79 64.8 78 54.3 77 34.9 76 59.0 75 49.1 74 61.9 73 61.6 72 45.4 71 48.7 70 58.8 69 35.6 68 63.5 67 60.6 66 63.9 65 54.1 64 52.4 63 57.2 62 65.3 61 46.6 60 65.5 59 37.7 58 54.2 57 47.9 56 56.5 55 59.6 54 45.5 53 51.4 52 60.7 51 50.0 50 59.2 49 35.0 48 64.7 47 29.0 46 59.7 45 56.4 44 61.2 43 64.4 42 41.3 41 32.2 40 56.2 39 57.0 38 62.9 37 65.5 36 34.6 35 54.0 34 53.7 33 51.4 32 60.6 31 35.1 30 63.8 29 50.3 28 57.9 27 55.4 26 35.0 25 58.1 24 60.9 23 51.7 22 54.1 21 60.7 20 42.9 19 62.9 18 50.7 17 33.0 16 51.2 15 51.0 14 54.0 13 62.1 12 45.2 11 52.9 10 59.1 9 57.6 8 44.0 7 60.1 6 51.7 5 57.1 4 45.7 3 62.5 2 47.0 1 64.4 0 65.5Z" fill="url(#og)"/><path transform="translate(312.1 898.5)" d="M0 9.6 1 15.4 2 21.5 3 16.7 4 31.0 5 16.5 6 19.6 7 21.7 8 13.3 9 15.4 10 18.2 11 16.9 12 32.7 13 17.4 14 30.6 15 10.4 16 17.7 17 17.0 18 18.1 19 32.6 20 19.1 21 11.1 22 28.1 23 10.6 24 20.0 25 18.2 26 14.5 27 26.7 28 11.8 29 25.5 30 18.0 31 20.9 32 17.4 33 19.3 34 36.9 35 19.9 36 14.5 37 15.2 38 27.4 39 18.4 40 25.2 41 16.6 42 31.8 43 13.0 44 19.4 45 15.2 46 20.5 47 22.8 48 15.9 49 15.0 50 26.6 51 11.8 52 26.0 53 20.6 54 17.8 55 21.3 56 10.0 57 25.5 58 14.0 59 13.4 60 21.0 61 18.1 62 31.6 63 10.5 64 18.2 65 14.8 66 16.1 67 24.7 68 14.7 69 26.1 70 11.2 71 10.2 72 18.6 73 19.4 74 29.5 75 15.5 76 23.0 77 8.3 78 25.1 79 11.6 80 17.0 81 20.0 82 15.1 83 30.1 84 6.1 85 17.7 86 8.7 87 14.3 88 26.0 89 13.1 90 25.7 91 10.6 92 13.0 93 16.8 94 29.8 95 16.9 96 27.3 97 15.9 98 15.4 99 22.8 100 14.2 101 18.8 102 29.4 103 19.8 104 29.9 105 8.7 106 13.9 107 13.0 108 12.8 109 27.1 110 15.3 111 25.5 112 9.2 113 8.4 114 14.4 115 32.9 116 14.2 117 19.4 118 17.8 119 17.5 120 13.1 121 15.6 122 18.5 123 15.6 124 31.2 125 21.1 126 17.0 127 27.8 128 20.2 129 21.2 130 20.9 131 17.8 132 27.7 133 4.9 134 13.4 134 62.2 133 55.2 132 51.9 131 45.3 130 52.0 129 55.1 128 35.8 127 53.0 126 45.9 125 42.8 124 52.3 123 34.5 122 52.8 121 54.7 120 61.8 119 65.5 118 55.4 117 56.1 116 40.5 115 53.9 114 44.0 113 59.7 112 65.5 111 52.4 110 42.2 109 55.5 108 46.0 107 55.3 106 65.5 105 51.8 104 56.5 103 34.5 102 50.3 101 52.2 100 56.0 99 60.4 98 43.9 97 45.9 96 51.6 95 36.4 94 56.4 93 51.2 92 57.5 91 59.5 90 49.9 89 32.9 88 58.7 87 59.0 86 54.3 85 62.0 84 42.3 83 48.9 82 43.2 81 54.9 80 61.2 79 54.4 78 62.0 77 36.2 76 56.2 75 46.2 74 54.9 73 42.2 72 54.5 71 65.3 70 58.1 69 55.8 68 32.7 67 53.3 66 53.2 65 55.8 64 54.8 63 46.0 62 52.3 61 36.0 60 51.3 59 50.4 58 54.0 57 60.2 56 32.1 55 55.6 54 53.3 53 56.9 52 52.3 51 37.3 50 60.3 49 57.4 48 33.5 47 55.2 46 49.3 45 49.0 44 57.7 43 36.3 42 56.2 41 46.3 40 53.9 39 33.7 38 53.5 37 54.0 36 55.4 35 62.0 34 52.4 33 42.4 32 51.4 31 56.0 30 53.5 29 55.9 28 34.4 27 52.5 26 55.8 25 54.1 24 61.0 23 31.8 22 62.1 21 52.0 20 47.2 19 48.3 18 41.3 17 52.8 16 55.0 15 56.3 14 63.2 13 47.6 12 55.8 11 40.4 10 53.6 9 56.2 8 52.1 7 62.2 6 57.9 5 52.9 4 56.6 3 35.5 2 55.9 1 62.2 0 59.3Z" fill="url(#og)"/><path transform="translate(312.1 965.5)" d="M0 9.6 1 17.0 2 17.3 3 16.9 4 26.9 5 16.8 6 27.7 7 14.6 8 30.0 9 13.7 10 15.4 11 24.3 12 20.9 13 34.9 14 13.7 15 17.6 16 12.9 17 30.5 18 16.7 19 18.2 20 22.1 21 17.5 22 11.9 23 27.6 24 12.5 25 18.4 26 21.4 27 16.7 28 19.3 29 15.4 30 30.1 31 19.3 32 21.5 33 22.6 34 21.5 35 16.7 36 19.0 37 16.3 38 27.0 39 18.1 40 21.9 41 16.5 42 5.3 43 19.0 44 12.5 45 13.8 46 30.2 47 19.1 48 19.7 49 21.4 50 14.5 51 22.8 52 14.3 53 14.2 54 21.0 55 21.2 56 9.2 57 21.8 58 11.0 59 20.1 60 23.0 61 14.0 62 29.0 63 12.1 64 17.5 65 12.4 66 15.0 67 24.6 68 17.4 69 31.1 70 8.4 71 15.0 72 34.7 73 15.8 74 19.0 75 15.8 76 17.1 77 28.7 78 16.1 79 13.5 80 15.8 81 16.9 82 36.3 83 20.8 84 26.2 85 11.3 86 29.6 87 14.9 88 20.6 89 20.9 90 16.4 91 31.6 92 14.9 93 25.7 94 14.1 95 17.4 96 26.3 97 18.0 98 12.7 99 29.5 100 13.9 101 23.8 102 14.7 103 18.0 104 27.6 105 9.7 106 15.7 107 16.9 108 33.4 109 16.6 110 15.9 111 18.5 112 7.8 113 12.2 114 30.4 115 17.1 116 24.1 117 19.5 118 20.3 119 6.3 120 19.2 121 8.9 122 22.7 123 12.6 124 17.4 125 24.9 126 6.4 127 18.7 128 16.1 129 32.6 130 14.6 131 21.3 132 19.0 133 19.0 134 15.8 134 39.2 133 63.2 132 54.5 131 56.1 130 51.4 129 58.2 128 33.6 127 63.1 126 65.5 125 56.7 124 49.7 123 52.8 122 53.3 121 30.8 120 65.5 119 65.1 118 47.7 117 51.9 116 57.5 115 44.0 114 56.8 113 45.7 112 65.1 111 51.0 110 55.2 109 49.4 108 55.7 107 42.7 106 55.4 105 59.0 104 50.3 103 50.7 102 49.9 101 59.7 100 30.0 99 62.5 98 61.7 97 33.6 96 51.9 95 57.1 94 49.7 93 54.4 92 32.2 91 62.4 90 36.6 89 53.3 88 57.5 87 52.2 86 54.9 85 36.1 84 60.5 83 46.6 82 53.3 81 39.2 80 56.8 79 56.9 78 48.3 77 65.2 76 51.8 75 48.3 74 54.9 73 39.6 72 62.1 71 44.1 70 65.5 69 55.3 68 30.8 67 54.8 66 49.6 65 53.9 64 57.8 63 37.0 62 51.9 61 35.0 60 52.6 59 55.2 58 53.0 57 57.4 56 41.5 55 31.7 54 55.5 53 56.0 52 53.8 51 59.4 50 30.6 49 65.5 48 55.4 47 38.5 46 51.8 45 53.1 44 61.7 43 57.2 42 44.5 41 52.5 40 49.7 39 39.1 38 57.4 37 43.9 36 55.8 35 60.2 34 40.2 33 53.4 32 54.5 31 49.3 30 53.7 29 40.7 28 62.1 27 38.2 26 50.6 25 54.7 24 46.0 23 56.7 22 32.8 21 57.2 20 49.8 19 51.6 18 44.1 17 57.8 16 41.7 15 62.2 14 65.5 13 52.3 12 44.3 11 56.8 10 51.9 9 53.7 8 57.7 7 30.3 6 53.7 5 33.4 4 56.0 3 54.2 2 50.1 1 56.6 0 44.7Z" fill="url(#og)"/><path transform="translate(458.3 898.5)" d="M0 0.6 1 6.3 2 28.0 3 12.7 4 23.8 5 12.1 6 9.5 7 30.1 8 11.0 9 18.5 10 19.6 11 14.8 12 20.1 13 13.6 14 22.5 15 13.4 16 15.1 17 21.8 18 14.1 19 10.1 20 30.9 21 18.0 22 18.2 23 17.9 24 9.4 25 16.2 26 14.0 27 27.4 28 15.7 29 19.5 30 32.6 31 8.7 32 14.2 33 8.7 34 16.3 35 31.4 36 11.7 37 7.1 38 34.3 39 15.5 40 19.3 41 19.0 42 15.3 43 8.5 44 24.6 45 12.1 46 19.4 47 18.0 48 16.6 49 8.0 50 27.7 51 13.8 52 12.6 53 21.1 54 1.2 55 15.5 56 7.3 57 12.2 58 26.3 59 14.0 60 20.6 61 8.2 62 12.1 63 17.5 64 13.9 65 30.1 66 7.5 67 2.9 68 11.5 69 26.8 70 16.5 71 24.6 72 5.0 73 31.1 74 10.3 75 20.9 76 11.0 77 14.0 78 18.3 79 4.4 80 13.1 81 19.9 82 12.6 83 30.6 84 20.6 85 9.0 86 10.0 87 13.4 88 12.1 89 33.0 90 25.2 91 12.5 92 25.5 93 13.8 94 18.6 95 21.8 96 30.9 97 13.0 98 17.9 99 12.8 100 17.1 101 27.1 102 34.4 103 9.4 104 13.3 105 13.5 106 15.2 107 33.5 108 29.2 109 8.4 110 12.2 111 14.4 112 14.5 113 34.2 114 9.6 115 20.6 116 17.5 117 23.6 118 13.4 119 15.1 120 9.2 121 15.5 122 12.8 123 36.5 124 18.6 125 19.1 126 0.5 127 4.9 128 25.4 129 15.3 130 22.9 131 19.0 132 13.9 133 11.2 134 30.4 134 59.5 133 43.4 132 59.7 131 53.7 130 59.3 129 34.0 128 62.9 127 63.7 126 64.6 125 56.2 124 42.4 123 53.6 122 39.8 121 61.7 120 62.3 119 54.5 118 47.8 117 57.2 116 32.9 115 58.3 114 58.8 113 50.6 112 44.6 111 56.8 110 57.6 109 49.0 108 63.8 107 55.4 106 47.3 105 53.5 104 59.5 103 45.3 102 65.5 101 54.7 100 52.5 99 50.6 98 56.1 97 46.1 96 62.8 95 50.7 94 57.4 93 54.8 92 57.5 91 30.7 90 61.5 89 51.1 88 42.1 87 56.0 86 61.5 85 54.4 84 65.5 83 57.4 82 36.4 81 58.8 80 64.0 79 62.2 78 65.5 77 48.7 76 52.7 75 60.8 74 40.1 73 59.4 72 50.2 71 51.7 70 31.3 69 55.7 68 51.6 67 65.5 66 65.5 65 55.4 64 37.3 63 54.4 62 55.2 61 56.3 60 62.0 59 32.1 58 55.8 57 53.2 56 59.8 55 64.1 54 50.2 53 51.2 52 52.8 51 45.7 50 56.7 49 41.0 48 65.5 47 52.2 46 50.6 45 49.1 44 59.1 43 31.9 42 61.2 41 52.7 40 53.3 39 49.9 38 61.6 37 44.3 36 65.5 35 51.9 34 48.6 33 58.7 32 63.7 31 49.1 30 65.5 29 56.0 28 46.3 27 54.0 26 33.2 25 56.0 24 65.5 23 53.3 22 57.4 21 41.7 20 59.9 19 44.6 18 61.5 17 52.3 16 51.2 15 46.9 14 59.8 13 34.3 12 62.7 11 41.8 10 53.1 9 58.6 8 53.4 7 62.6 6 32.7 5 54.7 4 54.8 3 41.7 2 63.3 1 53.5 0 63.3Z" fill="url(#og)"/><path transform="translate(458.3 965.5)" d="M0 0.9 1 30.2 2 6.8 3 15.7 4 17.0 5 12.3 6 5.1 7 16.3 8 13.9 9 12.6 10 24.2 11 17.5 12 31.0 13 14.4 14 23.3 15 12.0 16 15.4 17 20.8 18 8.5 19 10.7 20 15.0 21 13.1 22 30.3 23 19.7 24 35.2 25 8.2 26 14.7 27 12.9 28 13.3 29 27.9 30 13.9 31 10.4 32 11.2 33 21.7 34 13.6 35 25.5 36 8.4 37 13.7 38 14.9 39 29.8 40 17.4 41 24.9 42 6.5 43 7.1 44 16.9 45 15.1 46 33.1 47 12.2 48 8.0 49 8.4 50 36.1 51 14.7 52 20.9 53 17.2 54 34.8 55 9.5 56 19.3 57 14.8 58 12.9 59 30.8 60 25.9 61 10.1 62 14.1 63 20.6 64 18.8 65 36.0 66 18.7 67 11.1 68 14.0 69 19.7 70 19.3 71 29.9 72 10.4 73 23.2 74 12.1 75 29.7 76 17.3 77 18.5 78 7.0 79 27.1 80 11.6 81 23.5 82 14.8 83 15.1 84 10.0 85 28.6 86 11.9 87 19.4 88 13.5 89 16.1 90 31.7 91 11.1 92 13.1 93 11.6 94 17.0 95 32.3 96 9.8 97 23.4 98 13.1 99 17.6 100 16.9 101 16.0 102 5.3 103 13.3 104 16.1 105 15.2 106 29.7 107 13.2 108 0.5 109 11.5 110 31.8 111 16.8 112 21.8 113 13.0 114 7.1 115 12.5 116 13.8 117 12.8 118 35.1 119 19.0 120 21.8 121 10.8 122 27.0 123 15.4 124 15.1 125 24.2 126 6.8 127 19.2 128 9.4 129 15.6 130 25.6 131 18.2 132 1.0 133 7.7 134 12.8 134 60.8 133 64.6 132 60.8 131 32.9 130 54.6 129 48.1 128 60.1 127 61.1 126 45.3 125 53.3 124 53.8 123 51.7 122 58.9 121 31.8 120 62.0 119 42.5 118 54.9 117 41.3 116 59.1 115 63.5 114 58.8 113 50.1 112 55.8 111 37.3 110 57.3 109 57.0 108 65.5 107 46.4 106 55.9 105 40.7 104 57.6 103 65.5 102 57.9 101 39.8 100 55.0 99 55.3 98 54.3 97 58.5 96 36.0 95 49.3 94 52.7 93 57.6 92 52.7 91 44.4 90 58.4 89 55.8 88 51.7 87 54.2 86 31.1 85 60.5 84 56.0 83 52.6 82 49.0 81 55.6 80 36.5 79 62.1 78 53.5 77 54.4 76 44.0 75 49.8 74 33.7 73 57.1 72 61.2 71 54.1 70 35.9 69 52.8 68 57.5 67 59.3 66 65.5 65 50.0 64 37.2 63 57.0 62 57.1 61 55.7 60 62.3 59 54.3 58 52.5 57 58.6 56 56.7 55 42.8 54 61.3 53 55.9 52 57.8 51 39.0 50 62.9 49 47.7 48 65.5 47 44.5 46 57.9 45 40.8 44 60.3 43 62.9 42 54.5 41 53.9 40 35.2 39 54.4 38 45.1 37 62.4 36 65.5 35 56.9 34 35.1 33 57.1 32 53.0 31 57.1 30 65.5 29 56.5 28 43.7 27 60.1 26 60.9 25 50.9 24 64.7 23 38.6 22 52.8 21 46.5 20 50.7 19 59.3 18 49.5 17 54.3 16 51.7 15 51.0 14 58.1 13 33.2 12 60.2 11 36.2 10 56.2 9 51.8 8 61.2 7 61.9 6 41.5 5 43.8 4 50.7 3 61.7 2 48.2 1 63.0 0 39.6Z" fill="url(#og)"/><path transform="translate(604.5 898.5)" d="M0 4.9 1 16.6 2 6.9 3 11.4 4 21.8 5 11.2 6 29.2 7 6.8 8 15.6 9 14.9 10 32.2 11 13.6 12 17.1 13 15.1 14 5.2 15 20.2 16 7.5 17 11.6 18 22.1 19 12.2 20 26.9 21 32.5 22 8.5 23 17.3 24 15.8 25 15.2 26 24.4 27 12.9 28 5.4 29 20.1 30 7.3 31 22.0 32 11.6 33 14.0 34 15.2 35 6.8 36 16.4 37 9.7 38 15.7 39 28.7 40 14.2 41 23.0 42 7.5 43 14.4 44 10.9 45 15.0 46 24.6 47 15.2 48 21.5 49 8.3 50 13.6 51 14.9 52 34.5 53 11.3 54 15.1 55 12.7 56 8.8 57 21.5 58 9.2 59 26.2 60 13.5 61 12.5 62 17.9 63 6.8 64 21.7 65 8.4 66 10.0 67 19.4 68 12.6 69 30.9 70 17.0 71 8.6 72 30.2 73 11.9 74 13.2 75 19.4 76 17.9 77 15.2 78 7.1 79 9.8 80 23.1 81 13.3 82 29.0 83 14.4 84 3.1 85 7.0 86 18.8 87 12.8 88 29.1 89 16.5 90 13.0 91 10.3 92 8.6 93 13.9 94 27.7 95 15.9 96 19.4 97 14.6 98 28.6 99 13.4 100 14.6 101 12.8 102 11.8 103 27.6 104 15.3 105 8.1 106 38.5 107 7.5 108 17.7 109 12.3 110 13.7 111 31.4 112 33.0 113 9.9 114 15.6 115 10.2 116 14.9 117 29.9 118 13.7 119 28.4 120 6.5 121 18.0 122 9.3 123 11.9 124 20.8 125 17.3 126 5.4 127 9.7 128 19.3 129 9.5 130 31.3 131 13.9 132 16.0 133 6.7 134 34.5 134 64.2 133 55.9 132 58.9 131 45.6 130 61.6 129 41.1 128 58.1 127 65.5 126 60.2 125 30.6 124 62.1 123 57.5 122 63.1 121 64.6 120 37.0 119 65.5 118 32.7 117 59.1 116 51.2 115 57.3 114 61.2 113 45.1 112 65.5 111 53.1 110 47.1 109 58.8 108 63.7 107 42.2 106 65.5 105 52.3 104 32.7 103 60.3 102 57.2 101 56.2 100 64.7 99 38.8 98 64.8 97 52.3 96 59.2 95 36.1 94 57.3 93 55.8 92 57.3 91 65.5 90 57.9 89 54.0 88 60.6 87 36.1 86 64.4 85 63.9 84 62.1 83 55.6 82 60.1 81 31.2 80 61.4 79 58.9 78 64.2 77 63.8 76 44.7 75 53.1 74 57.2 73 53.9 72 61.0 71 34.1 70 65.5 69 61.5 68 43.4 67 63.0 66 58.4 65 61.3 64 65.5 63 31.6 62 58.3 61 61.1 60 55.0 59 62.2 58 29.8 57 59.3 56 61.6 55 57.3 54 53.1 53 45.5 52 55.9 51 43.1 50 62.5 49 62.0 48 54.8 47 34.5 46 60.8 45 56.5 44 57.6 43 62.7 42 37.9 41 55.8 40 37.2 39 57.1 38 50.9 37 61.7 36 60.9 35 50.7 34 60.8 33 60.9 32 55.5 31 62.5 30 34.8 29 65.5 28 65.5 27 35.5 26 58.2 25 48.5 24 56.7 23 60.1 22 47.6 21 65.5 20 56.8 19 33.8 18 56.1 17 55.6 16 57.8 15 65.5 14 31.7 13 57.2 12 57.6 11 41.7 10 60.3 9 42.9 8 62.8 7 62.5 6 56.5 5 29.8 4 58.3 3 61.2 2 61.1 1 65.5 0 38.2Z" fill="url(#og)"/><path transform="translate(604.5 965.5)" d="M0 6.2 1 11.1 2 7.9 3 36.0 4 9.7 5 15.7 6 17.4 7 24.4 8 8.8 9 15.8 10 8.4 11 10.2 12 20.8 13 17.0 14 33.0 15 12.1 16 15.6 17 13.2 18 15.7 19 24.1 20 11.9 21 8.5 22 11.4 23 26.2 24 9.8 25 26.5 26 12.4 27 13.6 28 15.0 29 9.1 30 11.6 31 28.2 32 13.2 33 19.0 34 15.8 35 32.7 36 10.3 37 15.2 38 11.0 39 17.2 40 25.8 41 13.3 42 11.1 43 28.4 44 9.7 45 15.6 46 14.7 47 13.0 48 23.5 49 8.9 50 30.5 51 12.1 52 17.5 53 15.2 54 15.9 55 30.3 56 26.6 57 9.4 58 19.6 59 14.5 60 14.5 61 20.7 62 13.6 63 6.6 64 9.4 65 28.2 66 13.8 67 19.2 68 13.3 69 14.5 70 6.5 71 9.7 72 29.2 73 11.7 74 21.4 75 10.4 76 12.5 77 15.1 78 7.1 79 29.0 80 11.1 81 12.3 82 13.9 83 14.2 84 11.7 85 9.6 86 31.5 87 14.1 88 20.8 89 13.5 90 14.8 91 7.7 92 24.7 93 9.2 94 19.9 95 11.4 96 10.8 97 21.2 98 25.1 99 8.1 100 23.1 101 14.4 102 13.6 103 18.4 104 12.9 105 22.3 106 10.8 107 13.4 108 18.8 109 15.4 110 31.0 111 11.7 112 5.4 113 35.4 114 10.1 115 17.4 116 10.0 117 10.3 118 31.6 119 9.3 120 15.7 121 12.4 122 14.7 123 28.0 124 13.1 125 22.5 126 10.9 127 29.6 128 11.8 129 16.2 130 16.3 131 14.4 132 36.4 133 1.8 134 9.3 134 65.5 133 47.2 132 55.7 131 47.2 130 52.3 129 58.2 128 48.6 127 64.5 126 33.3 125 55.6 124 38.7 123 58.5 122 47.8 121 57.6 120 62.0 119 45.7 118 54.1 117 54.3 116 63.4 115 61.9 114 49.0 113 65.5 112 52.7 111 44.7 110 58.5 109 40.7 108 60.6 107 57.9 106 54.4 105 59.3 104 34.1 103 61.0 102 59.2 101 60.1 100 63.0 99 32.8 98 65.5 97 56.7 96 55.7 95 55.2 94 60.4 93 31.6 92 61.3 91 65.5 90 54.3 89 59.2 88 57.1 87 41.7 86 58.4 85 50.4 84 64.1 83 47.6 82 57.6 81 57.3 80 54.0 79 58.9 78 38.9 77 62.7 76 55.6 75 55.9 74 58.7 73 38.2 72 62.7 71 53.1 70 65.5 69 52.1 68 58.9 67 56.3 66 33.8 65 63.7 64 56.0 63 63.4 62 33.0 61 55.5 60 62.9 59 61.0 58 65.4 57 37.9 56 65.5 55 53.6 54 50.6 53 60.2 52 63.1 51 50.0 50 65.5 49 45.8 48 58.0 47 57.7 46 58.9 45 58.7 44 38.0 43 60.1 42 54.2 41 30.9 40 54.3 39 53.8 38 56.5 37 58.7 36 41.4 35 62.3 34 55.2 33 55.3 32 32.0 31 58.8 30 50.6 29 58.0 28 65.5 27 53.2 26 54.9 25 59.8 24 34.1 23 60.7 22 61.5 21 64.9 20 33.0 19 60.5 18 52.6 17 55.9 16 59.7 15 39.4 14 65.5 13 33.6 12 56.6 11 61.4 10 62.7 9 62.4 8 38.0 7 65.5 6 56.6 5 60.1 4 42.7 3 60.0 2 49.3 1 64.6 0 65.5Z" fill="url(#og)"/></svg>
<div class="t" style="left:27.8px;top:256.8px;font-size:13px;line-height:16px;font-weight:bold;color:#e8e8e8;text-shadow:0 0 2px #000,1px 1px 1px #000">ch 1</div>
<div class="t" style="left:27.8px;top:323.8px;font-size:13px;line-height:16px;font-weight:bold;color:#e8e8e8;text-shadow:0 0 2px #000,1px 1px 1px #000">ch 2</div>
<div class="t" style="left:173.9px;top:256.8px;font-size:13px;line-height:16px;font-weight:bold;color:#e8e8e8;text-shadow:0 0 2px #000,1px 1px 1px #000">ch 1</div>
<div class="t" style="left:173.9px;top:323.8px;font-size:13px;line-height:16px;font-weight:bold;color:#e8e8e8;text-shadow:0 0 2px #000,1px 1px 1px #000">ch 2</div>
<div class="t" style="left:320.1px;top:256.8px;font-size:13px;line-height:16px;font-weight:bold;color:#e8e8e8;text-shadow:0 0 2px #000,1px 1px 1px #000">ch 1</div>
<div class="t" style="left:320.1px;top:323.8px;font-size:13px;line-height:16px;font-weight:bold;color:#e8e8e8;text-shadow:0 0 2px #000,1px 1px 1px #000">ch 2</div>
<div class="t" style="left:466.3px;top:256.8px;font-size:13px;line-height:16px;font-weight:bold;color:#e8e8e8;text-shadow:0 0 2px #000,1px 1px 1px #000">ch 1</div>
<div class="t" style="left:466.3px;top:323.8px;font-size:13px;line-height:16px;font-weight:bold;color:#e8e8e8;text-shadow:0 0 2px #000,1px 1px 1px #000">ch 2</div>
<div class="t" style="left:612.5px;top:256.8px;font-size:13px;line-height:16px;font-weight:bold;color:#e8e8e8;text-shadow:0 0 2px #000,1px 1px 1px #000">ch 1</div>
<div class="t" style="left:612.5px;top:323.8px;font-size:13px;line-height:16px;font-weight:bold;color:#e8e8e8;text-shadow:0 0 2px #000,1px 1px 1px #000">ch 2</div>
<div class="t" style="left:27.8px;top:418.9px;font-size:13px;line-height:16px;font-weight:bold;color:#e8e8e8;text-shadow:0 0 2px #000,1px 1px 1px #000">ch 1</div>
<div class="t" style="left:27.8px;top:485.9px;font-size:13px;line-height:16px;font-weight:bold;color:#e8e8e8;text-shadow:0 0 2px #000,1px 1px 1px #000">ch 2</div>
<div class="t" style="left:173.9px;top:418.9px;font-size:13px;line-height:16px;font-weight:bold;color:#e8e8e8;text-shadow:0 0 2px #000,1px 1px 1px #000">ch 1</div>
<div class="t" style="left:173.9px;top:485.9px;font-size:13px;line-height:16px;font-weight:bold;color:#e8e8e8;text-shadow:0 0 2px #000,1px 1px 1px #000">ch 2</div>
<div class="t" style="left:320.1px;top:418.9px;font-size:13px;line-height:16px;font-weight:bold;color:#e8e8e8;text-shadow:0 0 2px #000,1px 1px 1px #000">ch 1</div>
<div class="t" style="left:320.1px;top:485.9px;font-size:13px;line-height:16px;font-weight:bold;color:#e8e8e8;text-shadow:0 0 2px #000,1px 1px 1px #000">ch 2</div>
<div class="t" style="left:466.3px;top:418.9px;font-size:13px;line-height:16px;font-weight:bold;color:#e8e8e8;text-shadow:0 0 2px #000,1px 1px 1px #000">ch 1</div>
<div class="t" style="left:466.3px;top:485.9px;font-size:13px;line-height:16px;font-weight:bold;color:#e8e8e8;text-shadow:0 0 2px #000,1px 1px 1px #000">ch 2</div>
<div class="t" style="left:612.5px;top:418.9px;font-size:13px;line-height:16px;font-weight:bold;color:#e8e8e8;text-shadow:0 0 2px #000,1px 1px 1px #000">ch 1</div>
<div class="t" style="left:612.5px;top:485.9px;font-size:13px;line-height:16px;font-weight:bold;color:#e8e8e8;text-shadow:0 0 2px #000,1px 1px 1px #000">ch 2</div>
<div class="t" style="left:27.8px;top:581.1px;font-size:13px;line-height:16px;font-weight:bold;color:#e8e8e8;text-shadow:0 0 2px #000,1px 1px 1px #000">ch 1</div>
<div class="t" style="left:27.8px;top:648.1px;font-size:13px;line-height:16px;font-weight:bold;color:#e8e8e8;text-shadow:0 0 2px #000,1px 1px 1px #000">ch 2</div>
<div class="t" style="left:173.9px;top:581.1px;font-size:13px;line-height:16px;font-weight:bold;color:#e8e8e8;text-shadow:0 0 2px #000,1px 1px 1px #000">ch 1</div>
<div class="t" style="left:173.9px;top:648.1px;font-size:13px;line-height:16px;font-weight:bold;color:#e8e8e8;text-shadow:0 0 2px #000,1px 1px 1px #000">ch 2</div>
<div class="t" style="left:320.1px;top:581.1px;font-size:13px;line-height:16px;font-weight:bold;color:#e8e8e8;text-shadow:0 0 2px #000,1px 1px 1px #000">ch 1</div>
<div class="t" style="left:320.1px;top:648.1px;font-size:13px;line-height:16px;font-weight:bold;color:#e8e8e8;text-shadow:0 0 2px #000,1px 1px 1px #000">ch 2</div>
<div class="t" style="left:466.3px;top:581.1px;font-size:13px;line-height:16px;font-weight:bold;color:#e8e8e8;text-shadow:0 0 2px #000,1px 1px 1px #000">ch 1</div>
<div class="t" style="left:466.3px;top:648.1px;font-size:13px;line-height:16px;font-weight:bold;color:#e8e8e8;text-shadow:0 0 2px #000,1px 1px 1px #000">ch 2</div>
<div class="t" style="left:612.5px;top:581.1px;font-size:13px;line-height:16px;font-weight:bold;color:#e8e8e8;text-shadow:0 0 2px #000,1px 1px 1px #000">ch 1</div>
<div class="t" style="left:612.5px;top:648.1px;font-size:13px;line-height:16px;font-weight:bold;color:#e8e8e8;text-shadow:0 0 2px #000,1px 1px 1px #000">ch 2</div>
<div class="t" style="left:27.8px;top:743.3px;font-size:13px;line-height:16px;font-weight:bold;color:#e8e8e8;text-shadow:0 0 2px #000,1px 1px 1px #000">ch 1</div>
<div class="t" style="left:27.8px;top:810.3px;font-size:13px;line-height:16px;font-weight:bold;color:#e8e8e8;text-shadow:0 0 2px #000,1px 1px 1px #000">ch 2</div>
<div class="t" style="left:173.9px;top:743.3px;font-size:13px;line-height:16px;font-weight:bold;color:#e8e8e8;text-shadow:0 0 2px #000,1px 1px 1px #000">ch 1</div>
<div class="t" style="left:173.9px;top:810.3px;font-size:13px;line-height:16px;font-weight:bold;color:#e8e8e8;text-shadow:0 0 2px #000,1px 1px 1px #000">ch 2</div>
<div class="t" style="left:320.1px;top:743.3px;font-size:13px;line-height:16px;font-weight:bold;color:#e8e8e8;text-shadow:0 0 2px #000,1px 1px 1px #000">ch 1</div>
<div class="t" style="left:320.1px;top:810.3px;font-size:13px;line-height:16px;font-weight:bold;color:#e8e8e8;text-shadow:0 0 2px #000,1px 1px 1px #000">ch 2</div>
<div class="t" style="left:466.3px;top:743.3px;font-size:13px;line-height:16px;font-weight:bold;color:#e8e8e8;text-shadow:0 0 2px #000,1px 1px 1px #000">ch 1</div>
<div class="t" style="left:466.3px;top:810.3px;font-size:13px;line-height:16px;font-weight:bold;color:#e8e8e8;text-shadow:0 0 2px #000,1px 1px 1px #000">ch 2</div>
<div class="t" style="left:612.5px;top:743.3px;font-size:13px;line-height:16px;font-weight:bold;color:#e8e8e8;text-shadow:0 0 2px #000,1px 1px 1px #000">ch 1</div>
<div class="t" style="left:612.5px;top:810.3px;font-size:13px;line-height:16px;font-weight:bold;color:#e8e8e8;text-shadow:0 0 2px #000,1px 1px 1px #000">ch 2</div>
<div class="t" style="left:27.8px;top:905.5px;font-size:13px;line-height:16px;font-weight:bold;color:#e8e8e8;text-shadow:0 0 2px #000,1px 1px 1px #000">ch 1</div>
<div class="t" style="left:27.8px;top:972.5px;font-size:13px;line-height:16px;font-weight:bold;color:#e8e8e8;text-shadow:0 0 2px #000,1px 1px 1px #000">ch 2</div>
<div class="t" style="left:173.9px;top:905.5px;font-size:13px;line-height:16px;font-weight:bold;color:#e8e8e8;text-shadow:0 0 2px #000,1px 1px 1px #000">ch 1</div>
<div class="t" style="left:173.9px;top:972.5px;font-size:13px;line-height:16px;font-weight:bold;color:#e8e8e8;text-shadow:0 0 2px #000,1px 1px 1px #000">ch 2</div>
<div class="t" style="left:320.1px;top:905.5px;font-size:13px;line-height:16px;font-weight:bold;color:#e8e8e8;text-shadow:0 0 2px #000,1px 1px 1px #000">ch 1</div>
<div class="t" style="left:320.1px;top:972.5px;font-size:13px;line-height:16px;font-weight:bold;color:#e8e8e8;text-shadow:0 0 2px #000,1px 1px 1px #000">ch 2</div>
<div class="t" style="left:466.3px;top:905.5px;font-size:13px;line-height:16px;font-weight:bold;color:#e8e8e8;text-shadow:0 0 2px #000,1px 1px 1px #000">ch 1</div>
<div class="t" style="left:466.3px;top:972.5px;font-size:13px;line-height:16px;font-weight:bold;color:#e8e8e8;text-shadow:0 0 2px #000,1px 1px 1px #000">ch 2</div>
<div class="t" style="left:612.5px;top:905.5px;font-size:13px;line-height:16px;font-weight:bold;color:#e8e8e8;text-shadow:0 0 2px #000,1px 1px 1px #000">ch 1</div>
<div class="t" style="left:612.5px;top:972.5px;font-size:13px;line-height:16px;font-weight:bold;color:#e8e8e8;text-shadow:0 0 2px #000,1px 1px 1px #000">ch 2</div>
<div class="t" style="left:178.5px;top:1053.0px;width:400px;text-align:center;font-size:14px;line-height:18px;color:#d8d8d8;font-weight:bold;text-shadow:1px 1px 1px #000">Previewing 25 of 252 Objects</div>
<div style="left:2px;top:1075px;width:755px;height:2px;background:#242424;"></div>
<div style="left:2px;top:1077px;width:755px;height:55px;background:#3c3c3c;"></div>
<div style="left:730px;top:1081px;width:21px;height:19px;border-radius:10px;background:#2d5aa0"></div>
<svg style="left:734px;top:1084px" width="14" height="14" viewBox="0 0 14 14"><path d="M2 7l5-5h5v5l-5 5z" fill="#e0e8f5"/><circle cx="9.5" cy="4.5" r="1" fill="#2d5aa0"/></svg>
<div class="t" style="left:7px;top:1109.0px;font-size:14px;line-height:18px;color:#bdbdbd;font-weight:normal;">AssetBundle</div>
<div style="left:111px;top:1108px;width:492px;height:19px;background:#515151;border-radius:3px;border:1px solid #333"></div>
<div class="t" style="left:115px;top:1108.5px;font-size:14px;line-height:18px;color:#d2d2d2;font-weight:normal;">None</div>
<svg style="left:587px;top:1113px" width="10" height="10" viewBox="0 0 10 10"><path d="M1 3h8l-4 5z" fill="#c4c4c4"/></svg>
<div style="left:611px;top:1108px;width:142px;height:19px;background:#515151;border-radius:3px;border:1px solid #333"></div>
<div class="t" style="left:615px;top:1108.5px;font-size:14px;line-height:18px;color:#d2d2d2;font-weight:normal;">None</div>
<svg style="left:737px;top:1113px" width="10" height="10" viewBox="0 0 10 10"><path d="M1 3h8l-4 5z" fill="#c4c4c4"/></svg>
<div style="left:759px;top:55px;width:1429px;height:22px;background:#282828;"></div>
<div style="left:759px;top:55px;width:85px;height:22px;background:#3c3c3c;border-radius:3px 3px 0 0"></div>
<div style="left:759px;top:55px;width:85px;height:2px;background:#3a7bc4;border-radius:2px 2px 0 0"></div>
<svg style="left:767px;top:61px" width="17" height="11" viewBox="0 0 17 11"><rect x="0.5" y="1" width="16" height="9" rx="4.5" fill="#c4c4c4"/><path d="M3 5.5h4M5 3.5v4" stroke="#3c3c3c" stroke-width="1.3"/><circle cx="11.5" cy="4.5" r="1" fill="#3c3c3c"/><circle cx="13" cy="6.5" r="1" fill="#3c3c3c"/></svg>
<div class="t" style="left:787px;top:58.0px;font-size:14px;line-height:18px;color:#c4c4c4;font-weight:normal;">Game</div>
<svg style="left:2168px;top:59px" width="8" height="14" viewBox="0 0 8 14"><circle cx="4" cy="2.5" r="1.3" fill="#c4c4c4"/><circle cx="4" cy="7" r="1.3" fill="#c4c4c4"/><circle cx="4" cy="11.5" r="1.3" fill="#c4c4c4"/></svg>
<div style="left:759px;top:77px;width:1429px;height:23px;background:#3c3c3c;"></div>
<div class="t" style="left:764px;top:80.0px;font-size:14px;line-height:18px;color:#c4c4c4;font-weight:normal;">Game</div>
<svg style="left:847px;top:83px" width="12" height="12" viewBox="0 0 12 12"><path d="M1 3.5h10l-5 5.5z" fill="#c4c4c4"/></svg>
<div style="left:862px;top:77px;width:1px;height:23px;background:#2a2a2a;"></div>
<div class="t" style="left:873px;top:80.0px;font-size:14px;line-height:18px;color:#c4c4c4;font-weight:normal;">Display 1</div>
<svg style="left:945px;top:83px" width="12" height="12" viewBox="0 0 12 12"><path d="M1 3.5h10l-5 5.5z" fill="#c4c4c4"/></svg>
<div style="left:960px;top:77px;width:1px;height:23px;background:#2a2a2a;"></div>
<div class="t" style="left:964px;top:80.0px;font-size:14px;line-height:18px;color:#c4c4c4;font-weight:normal;">16:10 Aspect</div>
<svg style="left:1127px;top:83px" width="12" height="12" viewBox="0 0 12 12"><path d="M1 3.5h10l-5 5.5z" fill="#c4c4c4"/></svg>
<div style="left:1142px;top:77px;width:1px;height:23px;background:#2a2a2a;"></div>
<div class="t" style="left:1150px;top:80.0px;font-size:14px;line-height:18px;color:#c4c4c4;font-weight:normal;">Scale</div>
<div style="left:1199px;top:88px;width:165px;height:2px;background:#5a5a5a;"></div>
<div style="left:1193px;top:83px;width:12px;height:12px;border-radius:6px;background:#999"></div>
<div class="t" style="left:1371px;top:80.0px;font-size:14px;line-height:18px;color:#c4c4c4;font-weight:normal;">1x</div>
<div style="left:1880px;top:77px;width:1px;height:23px;background:#2a2a2a;"></div>
<div class="t" style="left:1884px;top:80.0px;font-size:14px;line-height:18px;color:#c4c4c4;font-weight:normal;">Play Unfocused</div>
<svg style="left:1990px;top:83px" width="12" height="12" viewBox="0 0 12 12"><path d="M1 3.5h10l-5 5.5z" fill="#c4c4c4"/></svg>
<div style="left:2005px;top:77px;width:1px;height:23px;background:#2a2a2a;"></div>
<svg style="left:2012px;top:82px" width="16" height="14" viewBox="0 0 16 14"><path d="M1 5h3l4-3v10l-4-3H1z" fill="#c4c4c4"/><path d="M10 4.5q1.5 2.5 0 5M12 3q2.5 4 0 8" fill="none" stroke="#c4c4c4" stroke-width="1.3"/></svg>
<div style="left:2035px;top:77px;width:1px;height:23px;background:#2a2a2a;"></div>
<svg style="left:2041px;top:82px" width="17" height="13" viewBox="0 0 17 13"><rect x="1" y="1" width="15" height="11" fill="none" stroke="#c4c4c4" stroke-width="1.3"/><path d="M3 4h11M3 6.5h11M3 9h11" stroke="#c4c4c4" stroke-width="1" stroke-dasharray="1.2 1"/></svg>
<div style="left:2063px;top:77px;width:1px;height:23px;background:#2a2a2a;"></div>
<div class="t" style="left:2069px;top:80.0px;font-size:14px;line-height:18px;color:#c4c4c4;font-weight:normal;">Stats</div>
<div style="left:2108px;top:77px;width:1px;height:23px;background:#2a2a2a;"></div>
<div class="t" style="left:2113px;top:80.0px;font-size:14px;line-height:18px;color:#c4c4c4;font-weight:normal;">Gizmos</div>
<div style="left:2166px;top:82px;width:1px;height:14px;background:#555;"></div>
<svg style="left:2171px;top:83px" width="12" height="12" viewBox="0 0 12 12"><path d="M1 3.5h10l-5 5.5z" fill="#c4c4c4"/></svg>
<div style="left:759px;top:100px;width:1429px;height:67px;background:#252525;"></div>
<div style="left:1420px;top:100px;width:106px;height:67px;background:linear-gradient(#3a5f8c 0%,#6f95bf 35%,#c6dced 55%,#dde7ee 57%,#6c655e 58%,#6a635c 100%)"></div>
<div style="left:759px;top:170px;width:1429px;height:21px;background:#282828;"></div>
<div style="left:759px;top:170px;width:92px;height:21px;background:#3c3c3c;border-radius:3px 3px 0 0"></div>
<svg style="left:767px;top:174px" width="15" height="13" viewBox="0 0 15 13"><path d="M0.5 1h5l1.5 2h7.5v9.5h-14z" fill="#c4c4c4"/></svg>
<div class="t" style="left:787px;top:172.0px;font-size:14px;line-height:18px;color:#c4c4c4;font-weight:normal;">Project</div>
<svg style="left:861px;top:174px" width="14" height="13" viewBox="0 0 14 13"><path d="M2.5 0.5v12M7 0.5v12M11.5 0.5v12" stroke="#c4c4c4" stroke-width="1.3"/><path d="M1 3.5h3M5.5 8h3M10 4.5h3" stroke="#c4c4c4" stroke-width="2.2"/></svg>
<div class="t" style="left:880px;top:172.0px;font-size:14px;line-height:18px;color:#c4c4c4;font-weight:normal;">Audio Mixer</div>
<svg style="left:2147px;top:173px" width="14" height="14" viewBox="0 0 14 14"><path d="M4 6V4a3 3 0 0 1 6 0" fill="none" stroke="#c4c4c4" stroke-width="1.4"/><rect x="2.5" y="6.5" width="9" height="6" fill="none" stroke="#c4c4c4" stroke-width="1.4"/></svg>
<svg style="left:2169px;top:174px" width="8" height="14" viewBox="0 0 8 14"><circle cx="4" cy="2.5" r="1.3" fill="#c4c4c4"/><circle cx="4" cy="7" r="1.3" fill="#c4c4c4"/><circle cx="4" cy="11.5" r="1.3" fill="#c4c4c4"/></svg>
<div style="left:759px;top:191px;width:1429px;height:22px;background:#3c3c3c;"></div>
<svg style="left:766px;top:195px" width="30" height="14" viewBox="0 0 30 14"><path d="M1 7h12M7 1v12" stroke="#d0d0d0" stroke-width="1.6"/><path d="M19 5h7l-3.5 4z" fill="#c4c4c4"/></svg>
<div style="left:1696px;top:194px;width:362px;height:17px;background:#2a2a2a;border-radius:4px;border:1px solid #232323"></div>
<svg style="left:1700px;top:197px" width="10" height="10" viewBox="0 0 10 10"><circle cx="4" cy="4" r="2.5" fill="none" stroke="#c4c4c4" stroke-width="1.3"/><path d="M6 6l3 3" stroke="#c4c4c4" stroke-width="1.5"/></svg>
<svg style="left:2040px;top:195px" width="15" height="15" viewBox="0 0 15 15"><rect x="3" y="1" width="11" height="11" fill="none" stroke="#c4c4c4" stroke-width="1.2"/><rect x="1" y="8" width="6" height="6" fill="#2a2a2a" stroke="#c4c4c4" stroke-width="1.2"/><path d="M7 8l5-5M9 3h3v3" fill="none" stroke="#c4c4c4" stroke-width="1.2"/></svg>
<div style="left:2060px;top:192px;width:1px;height:21px;background:#2a2a2a;"></div>
<div style="left:2090px;top:192px;width:1px;height:21px;background:#2a2a2a;"></div>
<div style="left:2119px;top:192px;width:1px;height:21px;background:#2a2a2a;"></div>
<div style="left:2149px;top:192px;width:1px;height:21px;background:#2a2a2a;"></div>
<svg style="left:2067px;top:195px" width="16" height="15" viewBox="0 0 16 15"><path d="M1 1h5v6H1z" fill="#c4c4c4"/><circle cx="4.5" cy="11" r="3.5" fill="#c4c4c4"/><path d="M9 8l3.5-6 3.5 6z" fill="#c4c4c4"/></svg>
<svg style="left:2097px;top:195px" width="14" height="14" viewBox="0 0 14 14"><path d="M1.5 7.5l6-6h5v5l-6 6z" fill="#c4c4c4"/><circle cx="10" cy="4" r="1" fill="#3c3c3c"/></svg>
<svg style="left:2127px;top:195px" width="14" height="14" viewBox="0 0 14 14"><path d="M7 0.5l1.9 4.3 4.6.4-3.5 3 1.1 4.5L7 10.3 2.9 12.7 4 8.2.5 5.2l4.6-.4z" fill="#8a8a8a"/></svg>
<svg style="left:2154px;top:195px" width="16" height="14" viewBox="0 0 16 14"><path d="M1 7q7-7 14 0q-7 7-14 0z" fill="none" stroke="#c4c4c4" stroke-width="1.2"/><circle cx="8" cy="7" r="2" fill="#c4c4c4"/><path d="M2 13L14 1" stroke="#c4c4c4" stroke-width="1.3"/></svg>
<div class="t" style="left:2174px;top:193.0px;font-size:14px;line-height:18px;color:#c4c4c4;font-weight:normal;">3</div>
<div style="left:759px;top:213px;width:490px;height:919px;background:#383838;"></div>
<div style="left:759px;top:322px;width:490px;height:256px;background:#4d4d4d;"></div>
<svg style="left:764px;top:218px" width="12" height="12" viewBox="0 0 12 12"><path d="M2.5 1.5l8 4.5-8 4.5z" fill="#6b6b6b"/></svg>
<svg style="left:779px;top:217px" width="15" height="14" viewBox="0 0 15 14"><path d="M7.5 0.5l2 4.4 4.8.5-3.6 3.2 1 4.7-4.2-2.4-4.2 2.4 1-4.7L.7 5.4l4.8-.5z" fill="#c4c4c4"/></svg>
<div class="t" style="left:799px;top:215.0px;font-size:14px;line-height:18px;color:#c4c4c4;font-weight:bold;">Favorites</div>
<svg style="left:763.0px;top:253.5px" width="12" height="12" viewBox="0 0 12 12"><path d="M1.5 2.5h9l-4.5 8z" fill="#6b6b6b"/></svg>
<svg style="left:780.0px;top:252.5px" width="16" height="13" viewBox="0 0 16 13"><path d="M0.5 1h5l1.5 2h6v2.5" fill="none" stroke="#c4c4c4" stroke-width="1.2"/><path d="M0.5 1v11h12l3-7H3.5l-3 7" fill="#c4c4c4" stroke="#c4c4c4" stroke-width="1"/></svg>
<div class="t" style="left:799.0px;top:250.5px;font-size:14px;line-height:18px;color:#c4c4c4;font-weight:bold;">Assets</div>
<svg style="left:778.8px;top:271.75px" width="12" height="12" viewBox="0 0 12 12"><path d="M1.5 2.5h9l-4.5 8z" fill="#6b6b6b"/></svg>
<svg style="left:795.8px;top:270.75px" width="16" height="13" viewBox="0 0 16 13"><path d="M0.5 1h5l1.5 2h6v2.5" fill="none" stroke="#c4c4c4" stroke-width="1.2"/><path d="M0.5 1v11h12l3-7H3.5l-3 7" fill="#c4c4c4" stroke="#c4c4c4" stroke-width="1"/></svg>
<div class="t" style="left:814.8px;top:268.8px;font-size:14px;line-height:18px;color:#c4c4c4;font-weight:normal;">Motorbike_Engine_Sounds-Vol2</div>
<svg style="left:794.6px;top:290.0px" width="12" height="12" viewBox="0 0 12 12"><path d="M1.5 2.5h9l-4.5 8z" fill="#6b6b6b"/></svg>
<svg style="left:811.6px;top:289.0px" width="16" height="13" viewBox="0 0 16 13"><path d="M0.5 1h5l1.5 2h6v2.5" fill="none" stroke="#c4c4c4" stroke-width="1.2"/><path d="M0.5 1v11h12l3-7H3.5l-3 7" fill="#c4c4c4" stroke="#c4c4c4" stroke-width="1"/></svg>
<div class="t" style="left:830.6px;top:287.0px;font-size:14px;line-height:18px;color:#c4c4c4;font-weight:normal;">Assets</div>
<svg style="left:810.4px;top:308.25px" width="12" height="12" viewBox="0 0 12 12"><path d="M1.5 2.5h9l-4.5 8z" fill="#6b6b6b"/></svg>
<svg style="left:827.4px;top:307.25px" width="16" height="13" viewBox="0 0 16 13"><path d="M0.5 1h5l1.5 2h6v2.5" fill="none" stroke="#c4c4c4" stroke-width="1.2"/><path d="M0.5 1v11h12l3-7H3.5l-3 7" fill="#c4c4c4" stroke="#c4c4c4" stroke-width="1"/></svg>
<div class="t" style="left:846.4px;top:305.2px;font-size:14px;line-height:18px;color:#c4c4c4;font-weight:normal;">Sounds</div>
<svg style="left:826.2px;top:326.5px" width="12" height="12" viewBox="0 0 12 12"><path d="M1.5 2.5h9l-4.5 8z" fill="#6b6b6b"/></svg>
<svg style="left:843.2px;top:325.5px" width="16" height="13" viewBox="0 0 16 13"><path d="M0.5 1h5l1.5 2h6v2.5" fill="none" stroke="#c4c4c4" stroke-width="1.2"/><path d="M0.5 1v11h12l3-7H3.5l-3 7" fill="#c4c4c4" stroke="#c4c4c4" stroke-width="1"/></svg>
<div class="t" style="left:862.2px;top:323.5px;font-size:14px;line-height:18px;color:#c4c4c4;font-weight:normal;">125cc_Dirt</div>
<svg style="left:859.0px;top:343.75px" width="16" height="13" viewBox="0 0 16 13"><path d="M0.5 1h5l1.5 2h7.5v9.5h-14z" fill="#c4c4c4"/></svg>
<div class="t" style="left:878.0px;top:341.8px;font-size:14px;line-height:18px;color:#c4c4c4;font-weight:normal;">Helmet</div>
<svg style="left:826.2px;top:363.0px" width="12" height="12" viewBox="0 0 12 12"><path d="M1.5 2.5h9l-4.5 8z" fill="#6b6b6b"/></svg>
<svg style="left:843.2px;top:362.0px" width="16" height="13" viewBox="0 0 16 13"><path d="M0.5 1h5l1.5 2h6v2.5" fill="none" stroke="#c4c4c4" stroke-width="1.2"/><path d="M0.5 1v11h12l3-7H3.5l-3 7" fill="#c4c4c4" stroke="#c4c4c4" stroke-width="1"/></svg>
<div class="t" style="left:862.2px;top:360.0px;font-size:14px;line-height:18px;color:#c4c4c4;font-weight:normal;">300cc_Moped</div>
<svg style="left:859.0px;top:380.25px" width="16" height="13" viewBox="0 0 16 13"><path d="M0.5 1h5l1.5 2h7.5v9.5h-14z" fill="#c4c4c4"/></svg>
<div class="t" style="left:878.0px;top:378.2px;font-size:14px;line-height:18px;color:#c4c4c4;font-weight:normal;">Helmet</div>
<svg style="left:826.2px;top:399.5px" width="12" height="12" viewBox="0 0 12 12"><path d="M1.5 2.5h9l-4.5 8z" fill="#6b6b6b"/></svg>
<svg style="left:843.2px;top:398.5px" width="16" height="13" viewBox="0 0 16 13"><path d="M0.5 1h5l1.5 2h6v2.5" fill="none" stroke="#c4c4c4" stroke-width="1.2"/><path d="M0.5 1v11h12l3-7H3.5l-3 7" fill="#c4c4c4" stroke="#c4c4c4" stroke-width="1"/></svg>
<div class="t" style="left:862.2px;top:396.5px;font-size:14px;line-height:18px;color:#c4c4c4;font-weight:normal;">535cc_Cruiser</div>
<svg style="left:859.0px;top:416.75px" width="16" height="13" viewBox="0 0 16 13"><path d="M0.5 1h5l1.5 2h7.5v9.5h-14z" fill="#c4c4c4"/></svg>
<div class="t" style="left:878.0px;top:414.8px;font-size:14px;line-height:18px;color:#c4c4c4;font-weight:normal;">Helmet</div>
<svg style="left:826.2px;top:436.0px" width="12" height="12" viewBox="0 0 12 12"><path d="M1.5 2.5h9l-4.5 8z" fill="#6b6b6b"/></svg>
<svg style="left:843.2px;top:435.0px" width="16" height="13" viewBox="0 0 16 13"><path d="M0.5 1h5l1.5 2h6v2.5" fill="none" stroke="#c4c4c4" stroke-width="1.2"/><path d="M0.5 1v11h12l3-7H3.5l-3 7" fill="#c4c4c4" stroke="#c4c4c4" stroke-width="1"/></svg>
<div class="t" style="left:862.2px;top:433.0px;font-size:14px;line-height:18px;color:#c4c4c4;font-weight:normal;">600cc_Sport</div>
<svg style="left:859.0px;top:453.25px" width="16" height="13" viewBox="0 0 16 13"><path d="M0.5 1h5l1.5 2h7.5v9.5h-14z" fill="#c4c4c4"/></svg>
<div class="t" style="left:878.0px;top:451.2px;font-size:14px;line-height:18px;color:#c4c4c4;font-weight:normal;">Helmet</div>
<svg style="left:826.2px;top:472.5px" width="12" height="12" viewBox="0 0 12 12"><path d="M1.5 2.5h9l-4.5 8z" fill="#6b6b6b"/></svg>
<svg style="left:843.2px;top:471.5px" width="16" height="13" viewBox="0 0 16 13"><path d="M0.5 1h5l1.5 2h6v2.5" fill="none" stroke="#c4c4c4" stroke-width="1.2"/><path d="M0.5 1v11h12l3-7H3.5l-3 7" fill="#c4c4c4" stroke="#c4c4c4" stroke-width="1"/></svg>
<div class="t" style="left:862.2px;top:469.5px;font-size:14px;line-height:18px;color:#c4c4c4;font-weight:normal;">850cc_Cruiser</div>
<svg style="left:859.0px;top:489.75px" width="16" height="13" viewBox="0 0 16 13"><path d="M0.5 1h5l1.5 2h7.5v9.5h-14z" fill="#c4c4c4"/></svg>
<div class="t" style="left:878.0px;top:487.8px;font-size:14px;line-height:18px;color:#c4c4c4;font-weight:normal;">Helmet</div>
<svg style="left:826.2px;top:509.0px" width="12" height="12" viewBox="0 0 12 12"><path d="M1.5 2.5h9l-4.5 8z" fill="#6b6b6b"/></svg>
<svg style="left:843.2px;top:508.0px" width="16" height="13" viewBox="0 0 16 13"><path d="M0.5 1h5l1.5 2h6v2.5" fill="none" stroke="#c4c4c4" stroke-width="1.2"/><path d="M0.5 1v11h12l3-7H3.5l-3 7" fill="#c4c4c4" stroke="#c4c4c4" stroke-width="1"/></svg>
<div class="t" style="left:862.2px;top:506.0px;font-size:14px;line-height:18px;color:#c4c4c4;font-weight:normal;">1200cc_Sport</div>
<svg style="left:859.0px;top:526.25px" width="16" height="13" viewBox="0 0 16 13"><path d="M0.5 1h5l1.5 2h7.5v9.5h-14z" fill="#c4c4c4"/></svg>
<div class="t" style="left:878.0px;top:524.2px;font-size:14px;line-height:18px;color:#c4c4c4;font-weight:normal;">Helmet</div>
<svg style="left:826.2px;top:545.5px" width="12" height="12" viewBox="0 0 12 12"><path d="M1.5 2.5h9l-4.5 8z" fill="#6b6b6b"/></svg>
<svg style="left:843.2px;top:544.5px" width="16" height="13" viewBox="0 0 16 13"><path d="M0.5 1h5l1.5 2h6v2.5" fill="none" stroke="#c4c4c4" stroke-width="1.2"/><path d="M0.5 1v11h12l3-7H3.5l-3 7" fill="#c4c4c4" stroke="#c4c4c4" stroke-width="1"/></svg>
<div class="t" style="left:862.2px;top:542.5px;font-size:14px;line-height:18px;color:#c4c4c4;font-weight:normal;">Shifting_Sounds-Vol2</div>
<svg style="left:859.0px;top:562.75px" width="16" height="13" viewBox="0 0 16 13"><path d="M0.5 1h5l1.5 2h7.5v9.5h-14z" fill="#c4c4c4"/></svg>
<div class="t" style="left:878.0px;top:560.8px;font-size:14px;line-height:18px;color:#c4c4c4;font-weight:normal;">Helmet</div>
<svg style="left:811.6px;top:581.0px" width="16" height="13" viewBox="0 0 16 13"><path d="M0.5 1h5l1.5 2h7.5v9.5h-14z" fill="#c4c4c4"/></svg>
<div class="t" style="left:830.6px;top:579.0px;font-size:14px;line-height:18px;color:#c4c4c4;font-weight:normal;">Assets_ES2</div>
<svg style="left:811.6px;top:599.25px" width="16" height="13" viewBox="0 0 16 13"><path d="M0.5 1h5l1.5 2h7.5v9.5h-14z" fill="#c4c4c4"/></svg>
<div class="t" style="left:830.6px;top:597.2px;font-size:14px;line-height:18px;color:#c4c4c4;font-weight:normal;">Documentation</div>
<svg style="left:764px;top:618.5px" width="12" height="12" viewBox="0 0 12 12"><path d="M2.5 1.5l8 4.5-8 4.5z" fill="#6b6b6b"/></svg>
<svg style="left:780px;top:617.5px" width="16" height="13" viewBox="0 0 16 13"><path d="M0.5 1h5l1.5 2h7.5v9.5h-14z" fill="#c4c4c4"/></svg>
<div class="t" style="left:799.0px;top:615.5px;font-size:14px;line-height:18px;color:#c4c4c4;font-weight:bold;">Packages</div>
<div style="left:1249px;top:213px;width:2px;height:919px;background:#232323;"></div>
<div style="left:1251px;top:213px;width:937px;height:896px;background:#333333;"></div>
<div style="left:1251px;top:215px;width:937px;height:23px;background:#3c3c3c;border-bottom:1px solid #2a2a2a"></div>
<div class="t" style="left:1257px;top:218.5px;font-size:12px;line-height:16px;color:#bdbdbd;font-weight:normal;">Showing multiple folders...</div>
<svg style="left:2175px;top:240px" width="14" height="870" viewBox="0 0 14 870"><path d="M2.5 11h8l-4-5z" fill="#c4c4c4"/><rect x="2" y="17" width="10" height="653" rx="5" fill="#5e5e5e"/><path d="M2.5 855h8l-4 5z" fill="#c4c4c4"/></svg>
<svg style="left:0;top:0;width:0;height:0"><defs><pattern id="stp" width="3" height="32" patternUnits="userSpaceOnUse"><rect x="2" width="1" height="32" fill="#4a4d56" fill-opacity="0.3"/></pattern><symbol id="w0" viewBox="0 0 32 32"><rect width="32" height="32" fill="#4a4d56"/><path transform="translate(1 0.5)" d="M0 1.1 1.5 5.1 3 3.4 4.5 4.8 6 2.6 7.5 4.3 9 1.5 10.5 4.1 12 2.7 13.5 5.3 15 2.9 16.5 5.5 18 2.8 19.5 4.6 21 4.6 22.5 4.3 24 2.3 25.5 3.7 27 0.5 28.5 4.5 30 2.1 30 14.2 28.5 10.3 27 8.7 25.5 9.8 24 10.0 22.5 10.4 21 11.2 19.5 10.5 18 11.6 16.5 9.8 15 12.4 13.5 10.0 12 12.8 10.5 9.6 9 11.1 7.5 11.0 6 12.4 4.5 10.7 3 11.5 1.5 10.0 0 11.7Z" fill="#e2ad00"/><path transform="translate(1 16.5)" d="M0 0.5 1.5 6.0 3 3.5 4.5 4.7 6 4.6 7.5 4.7 9 3.2 10.5 5.2 12 5.1 13.5 5.0 15 0.7 16.5 5.4 18 2.4 19.5 6.0 21 1.8 22.5 4.5 24 1.8 25.5 5.0 27 1.5 28.5 4.9 30 0.5 30 13.1 28.5 9.6 27 11.1 25.5 9.7 24 12.1 22.5 10.5 21 11.8 19.5 10.4 18 13.9 16.5 9.2 15 11.8 13.5 9.0 12 11.7 10.5 10.8 9 10.0 7.5 10.2 6 11.5 4.5 10.1 3 11.2 1.5 11.6 0 12.3Z" fill="#e2ad00"/><rect x="1" y="1" width="30" height="30" fill="url(#stp)"/></symbol><symbol id="w1" viewBox="0 0 32 32"><rect width="32" height="32" fill="#4a4d56"/><path transform="translate(1 0.5)" d="M0 2.5 1.5 2.3 3 1.2 4.5 5.6 6 5.0 7.5 6.9 9 6.4 10.5 5.2 12 1.1 13.5 2.6 15 2.5 16.5 4.4 18 3.4 19.5 7.8 21 4.6 22.5 5.0 24 2.3 25.5 2.9 27 0.5 28.5 5.4 30 3.7 30 11.8 28.5 8.2 27 8.0 25.5 6.7 24 9.2 22.5 9.9 21 13.3 19.5 11.8 18 12.2 16.5 8.7 15 8.9 13.5 7.3 12 9.5 10.5 11.2 9 12.9 7.5 11.6 6 11.5 4.5 8.6 3 9.0 1.5 7.7 0 10.3Z" fill="#e2ad00"/><path transform="translate(1 16.5)" d="M0 2.1 1.5 2.3 3 0.8 4.5 4.4 6 6.7 7.5 7.5 9 5.4 10.5 5.2 12 2.4 13.5 2.7 15 1.9 16.5 4.4 18 4.8 19.5 7.6 21 6.9 22.5 6.5 24 1.1 25.5 1.9 27 1.4 28.5 4.3 30 2.5 30 12.1 28.5 9.3 27 8.8 25.5 6.7 24 10.7 22.5 9.7 21 13.5 19.5 11.4 18 12.7 16.5 9.3 15 8.7 13.5 7.2 12 9.7 10.5 10.1 9 11.7 7.5 11.9 6 11.5 4.5 9.5 3 8.8 1.5 7.1 0 10.3Z" fill="#e2ad00"/><rect x="1" y="1" width="30" height="30" fill="url(#stp)"/></symbol><symbol id="w2" viewBox="0 0 32 32"><rect width="32" height="32" fill="#4a4d56"/><path transform="translate(1 0.5)" d="M0 1.3 1.5 2.5 3 2.0 4.5 3.0 6 0.5 7.5 1.9 9 2.0 10.5 3.8 12 1.7 13.5 4.4 15 1.6 16.5 1.7 18 1.1 19.5 1.2 21 1.6 22.5 3.5 24 1.1 25.5 1.8 27 1.5 28.5 3.0 30 1.6 30 11.8 28.5 10.7 27 13.4 25.5 10.4 24 13.9 22.5 11.7 21 11.6 19.5 11.2 18 14.3 16.5 11.3 15 13.8 13.5 10.5 12 11.9 10.5 11.4 9 10.6 7.5 11.2 6 13.7 4.5 12.1 3 13.5 1.5 9.5 0 12.5Z" fill="#e2ad00"/><path transform="translate(1 16.5)" d="M0 0.5 1.5 2.2 3 2.5 4.5 3.7 6 2.4 7.5 2.5 9 3.0 10.5 1.8 12 0.7 13.5 2.5 15 1.4 16.5 2.7 18 0.7 19.5 2.7 21 1.1 22.5 2.3 24 1.5 25.5 5.9 27 0.5 28.5 3.8 30 1.2 30 11.3 28.5 11.8 27 13.5 25.5 11.7 24 12.4 22.5 10.9 21 13.5 19.5 10.0 18 12.0 16.5 10.7 15 12.0 13.5 11.5 12 11.4 10.5 11.6 9 11.1 7.5 11.2 6 12.7 4.5 11.2 3 13.4 1.5 10.5 0 12.8Z" fill="#e2ad00"/><rect x="1" y="1" width="30" height="30" fill="url(#stp)"/></symbol><symbol id="w3" viewBox="0 0 32 32"><rect width="32" height="32" fill="#4a4d56"/><path transform="translate(1 0.5)" d="M0 3.6 1.5 6.7 3 2.7 4.5 6.6 6 5.9 7.5 5.6 9 5.4 10.5 5.0 12 4.9 13.5 5.7 15 6.0 16.5 6.8 18 3.9 19.5 6.6 21 1.8 22.5 6.7 24 4.4 25.5 6.9 27 6.3 28.5 6.2 30 6.0 30 9.0 28.5 8.4 27 10.1 25.5 8.4 24 11.8 22.5 8.2 21 10.6 19.5 8.3 18 9.6 16.5 8.6 15 9.2 13.5 10.0 12 8.6 10.5 10.6 9 8.9 7.5 9.5 6 11.6 4.5 8.8 3 13.5 1.5 8.5 0 10.0Z" fill="#e2ad00"/><path transform="translate(1 16.5)" d="M0 4.9 1.5 6.7 3 6.0 4.5 6.3 6 3.8 7.5 6.3 9 6.3 10.5 5.7 12 5.6 13.5 5.2 15 5.4 16.5 6.8 18 3.2 19.5 6.8 21 0.9 22.5 6.0 24 5.6 25.5 6.4 27 6.3 28.5 6.0 30 5.8 30 8.7 28.5 8.4 27 9.9 25.5 8.1 24 10.0 22.5 8.2 21 11.0 19.5 8.1 18 9.7 16.5 8.3 15 10.5 13.5 10.1 12 8.8 10.5 9.9 9 9.0 7.5 8.7 6 8.7 4.5 8.3 3 10.6 1.5 8.6 0 10.9Z" fill="#e2ad00"/><rect x="1" y="1" width="30" height="30" fill="url(#stp)"/></symbol><symbol id="w4" viewBox="0 0 32 32"><rect width="32" height="32" fill="#4a4d56"/><path transform="translate(1 0.5)" d="M0 2.7 1.5 4.0 3 1.0 4.5 4.4 6 0.5 7.5 5.2 9 1.3 10.5 3.9 12 1.0 13.5 4.2 15 0.5 16.5 4.6 18 2.2 19.5 4.3 21 0.8 22.5 4.5 24 2.3 25.5 4.4 27 2.0 28.5 5.2 30 0.5 30 12.9 28.5 10.3 27 11.5 25.5 9.8 24 12.3 22.5 9.6 21 13.6 19.5 9.9 18 12.7 16.5 9.2 15 12.8 13.5 10.1 12 12.0 10.5 10.1 9 11.6 7.5 9.9 6 14.5 4.5 10.7 3 12.2 1.5 10.0 0 12.3Z" fill="#e2ad00"/><path transform="translate(1 16.5)" d="M0 3.2 1.5 5.0 3 1.3 4.5 4.2 6 2.5 7.5 4.6 9 0.9 10.5 4.8 12 2.6 13.5 4.9 15 2.7 16.5 4.3 18 2.6 19.5 5.0 21 2.9 22.5 5.3 24 1.8 25.5 4.9 27 0.5 28.5 5.7 30 0.5 30 12.1 28.5 10.2 27 13.4 25.5 10.4 24 11.4 22.5 10.4 21 12.3 19.5 9.5 18 12.3 16.5 10.3 15 11.2 13.5 9.2 12 11.8 10.5 10.0 9 12.0 7.5 10.3 6 11.5 4.5 10.2 3 10.9 1.5 10.3 0 10.6Z" fill="#e2ad00"/><rect x="1" y="1" width="30" height="30" fill="url(#stp)"/></symbol><symbol id="w5" viewBox="0 0 32 32"><rect width="32" height="32" fill="#4a4d56"/><path transform="translate(1 0.5)" d="M0 1.9 1.5 4.5 3 5.5 4.5 2.3 6 2.9 7.5 5.5 9 6.4 10.5 4.0 12 4.1 13.5 6.0 15 2.2 16.5 5.6 18 6.0 19.5 2.6 21 4.7 22.5 6.3 24 6.1 25.5 3.5 27 4.6 28.5 7.2 30 0.5 30 9.7 28.5 10.1 27 10.3 25.5 8.8 24 11.0 22.5 10.5 21 10.0 19.5 8.5 18 10.9 16.5 9.5 15 8.2 13.5 10.6 12 10.1 10.5 8.8 9 10.8 7.5 10.0 6 10.6 4.5 9.4 3 10.2 1.5 9.6 0 9.4Z" fill="#e2ad00"/><path transform="translate(1 16.5)" d="M0 2.6 1.5 5.9 3 6.1 4.5 3.2 6 4.4 7.5 6.2 9 0.5 10.5 4.2 12 5.2 13.5 6.5 15 0.5 16.5 4.5 18 6.2 19.5 3.4 21 3.6 22.5 5.4 24 6.4 25.5 3.5 27 4.7 28.5 6.6 30 0.5 30 9.1 28.5 9.6 27 10.0 25.5 9.1 24 11.3 22.5 10.0 21 10.4 19.5 10.8 18 10.8 16.5 9.2 15 8.9 13.5 10.0 12 10.4 10.5 8.2 9 10.4 7.5 9.4 6 10.5 4.5 8.3 3 11.5 1.5 9.8 0 8.4Z" fill="#e2ad00"/><rect x="1" y="1" width="30" height="30" fill="url(#stp)"/></symbol><symbol id="w6" viewBox="0 0 32 32"><rect width="32" height="32" fill="#4a4d56"/><path transform="translate(1 0.5)" d="M0 3.9 1.5 6.1 3 5.7 4.5 4.8 6 5.0 7.5 4.8 9 5.3 10.5 6.8 12 5.6 13.5 6.9 15 7.2 16.5 7.0 18 6.9 19.5 6.9 21 6.7 22.5 7.1 24 6.5 25.5 7.0 27 6.7 28.5 7.3 30 6.7 30 7.9 28.5 7.8 27 8.2 25.5 7.9 24 8.1 22.5 7.7 21 7.9 19.5 7.7 18 8.2 16.5 7.7 15 8.1 13.5 7.9 12 9.5 10.5 8.1 9 10.2 7.5 10.7 6 8.8 4.5 8.9 3 8.6 1.5 8.7 0 12.2Z" fill="#e2ad00"/><path transform="translate(1 16.5)" d="M0 2.0 1.5 5.4 3 6.0 4.5 6.4 6 5.7 7.5 4.9 9 4.4 10.5 6.9 12 4.3 13.5 6.9 15 6.6 16.5 7.0 18 6.6 19.5 7.0 21 6.7 22.5 7.0 24 6.8 25.5 7.3 27 6.7 28.5 7.2 30 6.6 30 8.1 28.5 7.7 27 7.7 25.5 7.8 24 8.2 22.5 8.0 21 7.9 19.5 7.8 18 8.4 16.5 8.0 15 8.0 13.5 8.1 12 9.0 10.5 7.8 9 8.6 7.5 9.6 6 8.9 4.5 8.9 3 8.7 1.5 8.9 0 11.1Z" fill="#e2ad00"/><rect x="1" y="1" width="30" height="30" fill="url(#stp)"/></symbol><symbol id="w7" viewBox="0 0 32 32"><rect width="32" height="32" fill="#4a4d56"/><path transform="translate(1 0.5)" d="M0 2.4 1.5 1.5 3 0.8 4.5 3.7 6 0.8 7.5 3.4 9 2.8 10.5 3.6 12 0.5 13.5 3.5 15 1.8 16.5 3.4 18 2.3 19.5 4.1 21 3.5 22.5 3.6 24 1.3 25.5 2.8 27 1.4 28.5 3.3 30 1.2 30 11.3 28.5 10.6 27 13.0 25.5 9.4 24 13.6 22.5 11.1 21 11.8 19.5 12.2 18 12.6 16.5 10.2 15 12.6 13.5 11.2 12 12.9 10.5 11.7 9 11.7 7.5 11.5 6 13.8 4.5 11.6 3 12.7 1.5 11.0 0 12.1Z" fill="#e2ad00"/><path transform="translate(1 16.5)" d="M0 1.4 1.5 3.2 3 1.1 4.5 2.8 6 2.4 7.5 2.7 9 1.4 10.5 3.8 12 2.0 13.5 8.2 15 1.2 16.5 3.6 18 2.0 19.5 2.4 21 1.5 22.5 4.7 24 1.1 25.5 4.0 27 2.1 28.5 3.7 30 2.1 30 12.9 28.5 11.3 27 11.8 25.5 11.6 24 14.3 22.5 11.4 21 10.3 19.5 11.6 18 14.5 16.5 12.0 15 12.3 13.5 12.6 12 12.7 10.5 10.6 9 11.8 7.5 10.4 6 13.5 4.5 10.6 3 10.8 1.5 11.6 0 11.3Z" fill="#e2ad00"/><rect x="1" y="1" width="30" height="30" fill="url(#stp)"/></symbol><symbol id="w8" viewBox="0 0 32 32"><rect width="32" height="32" fill="#4a4d56"/><path transform="translate(1 0.5)" d="M0 3.8 1.5 4.3 3 3.9 4.5 5.9 6 3.1 7.5 6.6 9 0.5 10.5 4.6 12 3.8 13.5 5.4 15 1.1 16.5 5.7 18 2.4 19.5 6.4 21 2.4 22.5 6.0 24 5.2 25.5 6.5 27 3.5 28.5 5.8 30 2.6 30 6.9 28.5 8.8 27 9.7 25.5 9.5 24 12.1 22.5 9.4 21 9.8 19.5 9.5 18 10.5 16.5 9.6 15 11.6 13.5 8.8 12 11.5 10.5 10.9 9 12.0 7.5 8.6 6 9.9 4.5 9.3 3 11.6 1.5 8.9 0 12.9Z" fill="#e2ad00"/><path transform="translate(1 16.5)" d="M0 3.1 1.5 4.1 3 4.2 4.5 4.2 6 5.4 7.5 5.9 9 1.9 10.5 4.3 12 3.4 13.5 4.6 15 3.9 16.5 5.8 18 3.8 19.5 5.5 21 2.9 22.5 6.1 24 1.4 25.5 5.4 27 3.4 28.5 4.6 30 3.3 30 12.7 28.5 9.2 27 10.7 25.5 9.0 24 11.4 22.5 9.5 21 11.0 19.5 7.7 18 10.9 16.5 9.0 15 11.5 13.5 9.0 12 12.3 10.5 8.0 9 11.2 7.5 8.6 6 11.9 4.5 9.6 3 11.8 1.5 7.3 0 10.5Z" fill="#e2ad00"/><rect x="1" y="1" width="30" height="30" fill="url(#stp)"/></symbol><symbol id="w9" viewBox="0 0 32 32"><rect width="32" height="32" fill="#4a4d56"/><path transform="translate(1 0.5)" d="M0 2.6 1.5 2.2 3 2.1 4.5 2.5 6 1.8 7.5 1.8 9 1.2 10.5 1.8 12 1.9 13.5 2.4 15 1.3 16.5 2.6 18 1.2 19.5 2.4 21 2.2 22.5 2.7 24 0.5 25.5 4.6 27 2.5 28.5 2.6 30 0.7 30 12.6 28.5 12.2 27 13.5 25.5 12.0 24 13.2 22.5 11.0 21 13.8 19.5 11.8 18 12.7 16.5 11.8 15 12.0 13.5 12.3 12 12.3 10.5 12.3 9 11.9 7.5 9.5 6 13.2 4.5 11.2 3 12.2 1.5 9.3 0 12.0Z" fill="#e2ad00"/><path transform="translate(1 16.5)" d="M0 1.2 1.5 2.4 3 1.7 4.5 2.4 6 0.7 7.5 2.0 9 2.2 10.5 2.8 12 1.2 13.5 3.0 15 3.0 16.5 2.7 18 1.3 19.5 3.0 21 1.5 22.5 2.4 24 1.2 25.5 2.9 27 2.0 28.5 2.8 30 1.7 30 12.3 28.5 11.5 27 13.8 25.5 11.1 24 13.9 22.5 12.2 21 13.4 19.5 11.3 18 13.7 16.5 12.0 15 12.1 13.5 11.9 12 12.3 10.5 11.6 9 12.5 7.5 12.6 6 13.3 4.5 10.8 3 12.5 1.5 11.2 0 13.4Z" fill="#e2ad00"/><rect x="1" y="1" width="30" height="30" fill="url(#stp)"/></symbol><symbol id="w10" viewBox="0 0 32 32"><rect width="32" height="32" fill="#4a4d56"/><path transform="translate(1 0.5)" d="M0 7.1 1.5 5.7 3 0.5 4.5 7.1 6 7.1 7.5 0.8 9 3.6 10.5 7.3 12 7.1 13.5 5.9 15 5.2 16.5 6.8 18 7.0 19.5 3.5 21 1.3 22.5 6.8 24 7.0 25.5 4.1 27 0.5 28.5 6.7 30 7.1 30 7.9 28.5 7.8 27 10.2 25.5 13.9 24 7.9 22.5 7.7 21 11.5 19.5 12.0 18 7.9 16.5 7.6 15 9.4 13.5 9.3 12 7.6 10.5 7.8 9 12.4 7.5 10.6 6 7.7 4.5 7.9 3 11.2 1.5 11.7 0 7.9Z" fill="#e2ad00"/><path transform="translate(1 16.5)" d="M0 6.8 1.5 4.7 3 2.4 4.5 6.9 6 7.0 7.5 3.8 9 1.4 10.5 6.5 12 7.3 13.5 5.0 15 3.1 16.5 6.9 18 6.9 19.5 4.2 21 3.9 22.5 6.9 24 6.8 25.5 5.8 27 4.4 28.5 7.2 30 6.9 30 7.7 28.5 7.6 27 8.8 25.5 10.6 24 8.0 22.5 7.8 21 11.2 19.5 9.7 18 7.9 16.5 7.7 15 10.1 13.5 10.6 12 8.0 10.5 7.7 9 11.6 7.5 11.6 6 8.0 4.5 7.8 3 9.4 1.5 12.0 0 7.9Z" fill="#e2ad00"/><rect x="1" y="1" width="30" height="30" fill="url(#stp)"/></symbol></defs></svg>
<svg style="left:1251px;top:238px" width="924" height="871" viewBox="1251 238 924 871"><path transform="translate(1274.0 256.5)" d="M0 3a2.5 2.5 0 0 1 2.5-2.5h8l3 4h12a2.5 2.5 0 0 1 2.5 2.5v14a2.5 2.5 0 0 1-2.5 2.5H2.5A2.5 2.5 0 0 1 0 21z" fill="#c2c2c2"/><path transform="translate(1327.0 256.5)" d="M0 3a2.5 2.5 0 0 1 2.5-2.5h8l3 4h12a2.5 2.5 0 0 1 2.5 2.5v14a2.5 2.5 0 0 1-2.5 2.5H2.5A2.5 2.5 0 0 1 0 21z" fill="#c2c2c2"/><path transform="translate(1380.0 256.5)" d="M0 3a2.5 2.5 0 0 1 2.5-2.5h8l3 4h12a2.5 2.5 0 0 1 2.5 2.5v14a2.5 2.5 0 0 1-2.5 2.5H2.5A2.5 2.5 0 0 1 0 21z" fill="#c2c2c2"/><path transform="translate(1433.0 256.5)" d="M0 3a2.5 2.5 0 0 1 2.5-2.5h8l3 4h12a2.5 2.5 0 0 1 2.5 2.5v14a2.5 2.5 0 0 1-2.5 2.5H2.5A2.5 2.5 0 0 1 0 21z" fill="#c2c2c2"/><path transform="translate(1486.0 256.5)" d="M0 3a2.5 2.5 0 0 1 2.5-2.5h8l3 4h12a2.5 2.5 0 0 1 2.5 2.5v14a2.5 2.5 0 0 1-2.5 2.5H2.5A2.5 2.5 0 0 1 0 21z" fill="#c2c2c2"/><path transform="translate(1539.0 256.5)" d="M0 3a2.5 2.5 0 0 1 2.5-2.5h8l3 4h12a2.5 2.5 0 0 1 2.5 2.5v14a2.5 2.5 0 0 1-2.5 2.5H2.5A2.5 2.5 0 0 1 0 21z" fill="#c2c2c2"/><path transform="translate(1592.0 256.5)" d="M0 3a2.5 2.5 0 0 1 2.5-2.5h8l3 4h12a2.5 2.5 0 0 1 2.5 2.5v14a2.5 2.5 0 0 1-2.5 2.5H2.5A2.5 2.5 0 0 1 0 21z" fill="#c2c2c2"/><use href="#w5" x="1643.0" y="252.5" width="32" height="32"/><use href="#w1" x="1696.0" y="252.5" width="32" height="32"/><use href="#w6" x="1749.0" y="252.5" width="32" height="32"/><use href="#w9" x="1802.0" y="252.5" width="32" height="32"/><use href="#w9" x="1855.0" y="252.5" width="32" height="32"/><use href="#w8" x="1908.0" y="252.5" width="32" height="32"/><use href="#w8" x="1961.0" y="252.5" width="32" height="32"/><use href="#w1" x="2014.0" y="252.5" width="32" height="32"/><use href="#w4" x="2067.0" y="252.5" width="32" height="32"/><use href="#w0" x="2120.0" y="252.5" width="32" height="32"/><use href="#w4" x="1272.0" y="321.9" width="32" height="32"/><use href="#w4" x="1325.0" y="321.9" width="32" height="32"/><use href="#w2" x="1378.0" y="321.9" width="32" height="32"/><use href="#w2" x="1431.0" y="321.9" width="32" height="32"/><use href="#w7" x="1484.0" y="321.9" width="32" height="32"/><use href="#w7" x="1537.0" y="321.9" width="32" height="32"/><use href="#w7" x="1590.0" y="321.9" width="32" height="32"/><use href="#w10" x="1643.0" y="321.9" width="32" height="32"/><use href="#w5" x="1696.0" y="321.9" width="32" height="32"/><use href="#w1" x="1749.0" y="321.9" width="32" height="32"/><use href="#w4" x="1802.0" y="321.9" width="32" height="32"/><use href="#w5" x="1855.0" y="321.9" width="32" height="32"/><use href="#w0" x="1908.0" y="321.9" width="32" height="32"/><use href="#w7" x="1961.0" y="321.9" width="32" height="32"/><use href="#w2" x="2014.0" y="321.9" width="32" height="32"/><use href="#w3" x="2067.0" y="321.9" width="32" height="32"/><use href="#w3" x="2120.0" y="321.9" width="32" height="32"/><use href="#w0" x="1272.0" y="391.4" width="32" height="32"/><use href="#w0" x="1325.0" y="391.4" width="32" height="32"/><use href="#w4" x="1378.0" y="391.4" width="32" height="32"/><use href="#w4" x="1431.0" y="391.4" width="32" height="32"/><use href="#w0" x="1484.0" y="391.4" width="32" height="32"/><use href="#w4" x="1537.0" y="391.4" width="32" height="32"/><use href="#w2" x="1590.0" y="391.4" width="32" height="32"/><use href="#w8" x="1643.0" y="391.4" width="32" height="32"/><use href="#w4" x="1696.0" y="391.4" width="32" height="32"/><use href="#w5" x="1749.0" y="391.4" width="32" height="32"/><use href="#w6" x="1802.0" y="391.4" width="32" height="32"/><use href="#w4" x="1855.0" y="391.4" width="32" height="32"/><use href="#w4" x="1908.0" y="391.4" width="32" height="32"/><use href="#w1" x="1961.0" y="391.4" width="32" height="32"/><use href="#w1" x="2014.0" y="391.4" width="32" height="32"/><use href="#w6" x="2067.0" y="391.4" width="32" height="32"/><use href="#w2" x="2120.0" y="391.4" width="32" height="32"/><use href="#w2" x="1272.0" y="460.9" width="32" height="32"/><use href="#w3" x="1325.0" y="460.9" width="32" height="32"/><use href="#w1" x="1378.0" y="460.9" width="32" height="32"/><use href="#w1" x="1431.0" y="460.9" width="32" height="32"/><use href="#w1" x="1484.0" y="460.9" width="32" height="32"/><use href="#w0" x="1537.0" y="460.9" width="32" height="32"/><use href="#w0" x="1590.0" y="460.9" width="32" height="32"/><use href="#w0" x="1643.0" y="460.9" width="32" height="32"/><use href="#w2" x="1696.0" y="460.9" width="32" height="32"/><use href="#w4" x="1749.0" y="460.9" width="32" height="32"/><use href="#w2" x="1802.0" y="460.9" width="32" height="32"/><use href="#w4" x="1855.0" y="460.9" width="32" height="32"/><use href="#w2" x="1908.0" y="460.9" width="32" height="32"/><use href="#w10" x="1961.0" y="460.9" width="32" height="32"/><use href="#w1" x="2014.0" y="460.9" width="32" height="32"/><use href="#w8" x="2067.0" y="460.9" width="32" height="32"/><use href="#w2" x="2120.0" y="460.9" width="32" height="32"/><use href="#w4" x="1272.0" y="530.3" width="32" height="32"/><use href="#w4" x="1325.0" y="530.3" width="32" height="32"/><use href="#w7" x="1378.0" y="530.3" width="32" height="32"/><use href="#w2" x="1431.0" y="530.3" width="32" height="32"/><use href="#w8" x="1484.0" y="530.3" width="32" height="32"/><use href="#w3" x="1537.0" y="530.3" width="32" height="32"/><use href="#w8" x="1590.0" y="530.3" width="32" height="32"/><use href="#w4" x="1643.0" y="530.3" width="32" height="32"/><use href="#w0" x="1696.0" y="530.3" width="32" height="32"/><use href="#w1" x="1749.0" y="530.3" width="32" height="32"/><use href="#w0" x="1802.0" y="530.3" width="32" height="32"/><use href="#w7" x="1855.0" y="530.3" width="32" height="32"/><use href="#w7" x="1908.0" y="530.3" width="32" height="32"/><use href="#w7" x="1961.0" y="530.3" width="32" height="32"/><use href="#w0" x="2014.0" y="530.3" width="32" height="32"/><use href="#w0" x="2067.0" y="530.3" width="32" height="32"/><use href="#w10" x="2120.0" y="530.3" width="32" height="32"/><use href="#w4" x="1272.0" y="599.8" width="32" height="32"/><use href="#w2" x="1325.0" y="599.8" width="32" height="32"/><use href="#w5" x="1378.0" y="599.8" width="32" height="32"/><use href="#w1" x="1431.0" y="599.8" width="32" height="32"/><use href="#w10" x="1484.0" y="599.8" width="32" height="32"/><use href="#w2" x="1537.0" y="599.8" width="32" height="32"/><use href="#w2" x="1590.0" y="599.8" width="32" height="32"/><use href="#w3" x="1643.0" y="599.8" width="32" height="32"/><use href="#w1" x="1696.0" y="599.8" width="32" height="32"/><use href="#w1" x="1749.0" y="599.8" width="32" height="32"/><use href="#w4" x="1802.0" y="599.8" width="32" height="32"/><use href="#w9" x="1855.0" y="599.8" width="32" height="32"/><use href="#w1" x="1908.0" y="599.8" width="32" height="32"/><use href="#w0" x="1961.0" y="599.8" width="32" height="32"/><use href="#w2" x="2014.0" y="599.8" width="32" height="32"/><use href="#w2" x="2067.0" y="599.8" width="32" height="32"/><use href="#w7" x="2120.0" y="599.8" width="32" height="32"/><use href="#w7" x="1272.0" y="669.2" width="32" height="32"/><use href="#w2" x="1325.0" y="669.2" width="32" height="32"/><use href="#w10" x="1378.0" y="669.2" width="32" height="32"/><use href="#w1" x="1431.0" y="669.2" width="32" height="32"/><use href="#w5" x="1484.0" y="669.2" width="32" height="32"/><use href="#w5" x="1537.0" y="669.2" width="32" height="32"/><use href="#w5" x="1590.0" y="669.2" width="32" height="32"/><use href="#w0" x="1643.0" y="669.2" width="32" height="32"/><use href="#w2" x="1696.0" y="669.2" width="32" height="32"/><use href="#w2" x="1749.0" y="669.2" width="32" height="32"/><use href="#w8" x="1802.0" y="669.2" width="32" height="32"/><use href="#w8" x="1855.0" y="669.2" width="32" height="32"/><use href="#w0" x="1908.0" y="669.2" width="32" height="32"/><use href="#w4" x="1961.0" y="669.2" width="32" height="32"/><use href="#w0" x="2014.0" y="669.2" width="32" height="32"/><use href="#w4" x="2067.0" y="669.2" width="32" height="32"/><use href="#w1" x="2120.0" y="669.2" width="32" height="32"/><use href="#w2" x="1272.0" y="738.7" width="32" height="32"/><use href="#w5" x="1325.0" y="738.7" width="32" height="32"/><use href="#w7" x="1378.0" y="738.7" width="32" height="32"/><use href="#w5" x="1431.0" y="738.7" width="32" height="32"/><use href="#w5" x="1484.0" y="738.7" width="32" height="32"/><use href="#w10" x="1537.0" y="738.7" width="32" height="32"/><use href="#w4" x="1590.0" y="738.7" width="32" height="32"/><use href="#w8" x="1643.0" y="738.7" width="32" height="32"/><use href="#w1" x="1696.0" y="738.7" width="32" height="32"/><use href="#w1" x="1749.0" y="738.7" width="32" height="32"/><use href="#w10" x="1802.0" y="738.7" width="32" height="32"/><use href="#w9" x="1855.0" y="738.7" width="32" height="32"/><use href="#w2" x="1908.0" y="738.7" width="32" height="32"/><use href="#w8" x="1961.0" y="738.7" width="32" height="32"/><use href="#w8" x="2014.0" y="738.7" width="32" height="32"/><use href="#w1" x="2067.0" y="738.7" width="32" height="32"/><use href="#w1" x="2120.0" y="738.7" width="32" height="32"/><use href="#w4" x="1272.0" y="808.1" width="32" height="32"/><use href="#w0" x="1325.0" y="808.1" width="32" height="32"/><use href="#w9" x="1378.0" y="808.1" width="32" height="32"/><use href="#w2" x="1431.0" y="808.1" width="32" height="32"/><use href="#w4" x="1484.0" y="808.1" width="32" height="32"/><use href="#w4" x="1537.0" y="808.1" width="32" height="32"/><use href="#w2" x="1590.0" y="808.1" width="32" height="32"/><use href="#w7" x="1643.0" y="808.1" width="32" height="32"/><use href="#w10" x="1696.0" y="808.1" width="32" height="32"/><use href="#w8" x="1749.0" y="808.1" width="32" height="32"/><use href="#w1" x="1802.0" y="808.1" width="32" height="32"/><use href="#w5" x="1855.0" y="808.1" width="32" height="32"/><use href="#w5" x="1908.0" y="808.1" width="32" height="32"/><use href="#w5" x="1961.0" y="808.1" width="32" height="32"/><use href="#w7" x="2014.0" y="808.1" width="32" height="32"/><use href="#w2" x="2067.0" y="808.1" width="32" height="32"/><use href="#w8" x="2120.0" y="808.1" width="32" height="32"/><use href="#w0" x="1272.0" y="877.6" width="32" height="32"/><use href="#w8" x="1325.0" y="877.6" width="32" height="32"/><use href="#w0" x="1378.0" y="877.6" width="32" height="32"/><use href="#w0" x="1431.0" y="877.6" width="32" height="32"/><use href="#w0" x="1484.0" y="877.6" width="32" height="32"/><use href="#w0" x="1537.0" y="877.6" width="32" height="32"/><use href="#w0" x="1590.0" y="877.6" width="32" height="32"/><use href="#w8" x="1643.0" y="877.6" width="32" height="32"/><use href="#w4" x="1696.0" y="877.6" width="32" height="32"/><use href="#w7" x="1749.0" y="877.6" width="32" height="32"/><use href="#w0" x="1802.0" y="877.6" width="32" height="32"/><use href="#w10" x="1855.0" y="877.6" width="32" height="32"/><use href="#w0" x="1908.0" y="877.6" width="32" height="32"/><use href="#w8" x="1961.0" y="877.6" width="32" height="32"/><use href="#w1" x="2014.0" y="877.6" width="32" height="32"/><use href="#w5" x="2067.0" y="877.6" width="32" height="32"/><use href="#w10" x="2120.0" y="877.6" width="32" height="32"/><use href="#w9" x="1272.0" y="947.0" width="32" height="32"/><use href="#w9" x="1325.0" y="947.0" width="32" height="32"/><use href="#w8" x="1378.0" y="947.0" width="32" height="32"/><use href="#w1" x="1431.0" y="947.0" width="32" height="32"/><use href="#w8" x="1484.0" y="947.0" width="32" height="32"/><use href="#w1" x="1537.0" y="947.0" width="32" height="32"/><use href="#w1" x="1590.0" y="947.0" width="32" height="32"/><use href="#w1" x="1643.0" y="947.0" width="32" height="32"/><use href="#w9" x="1696.0" y="947.0" width="32" height="32"/><use href="#w2" x="1749.0" y="947.0" width="32" height="32"/><use href="#w7" x="1802.0" y="947.0" width="32" height="32"/><use href="#w2" x="1855.0" y="947.0" width="32" height="32"/><use href="#w2" x="1908.0" y="947.0" width="32" height="32"/><use href="#w2" x="1961.0" y="947.0" width="32" height="32"/><use href="#w10" x="2014.0" y="947.0" width="32" height="32"/><use href="#w8" x="2067.0" y="947.0" width="32" height="32"/><use href="#w5" x="2120.0" y="947.0" width="32" height="32"/><use href="#w8" x="1272.0" y="1016.5" width="32" height="32"/><use href="#w4" x="1325.0" y="1016.5" width="32" height="32"/><use href="#w7" x="1378.0" y="1016.5" width="32" height="32"/><use href="#w7" x="1431.0" y="1016.5" width="32" height="32"/><use href="#w7" x="1484.0" y="1016.5" width="32" height="32"/><use href="#w0" x="1537.0" y="1016.5" width="32" height="32"/><use href="#w3" x="1590.0" y="1016.5" width="32" height="32"/><use href="#w0" x="1643.0" y="1016.5" width="32" height="32"/><use href="#w0" x="1696.0" y="1016.5" width="32" height="32"/><use href="#w0" x="1749.0" y="1016.5" width="32" height="32"/><use href="#w1" x="1802.0" y="1016.5" width="32" height="32"/><use href="#w4" x="1855.0" y="1016.5" width="32" height="32"/><use href="#w8" x="1908.0" y="1016.5" width="32" height="32"/><use href="#w0" x="1961.0" y="1016.5" width="32" height="32"/><use href="#w2" x="2014.0" y="1016.5" width="32" height="32"/><use href="#w4" x="2067.0" y="1016.5" width="32" height="32"/><use href="#w2" x="2120.0" y="1016.5" width="32" height="32"/><use href="#w7" x="1272.0" y="1085.9" width="32" height="32"/><use href="#w8" x="1325.0" y="1085.9" width="32" height="32"/><use href="#w7" x="1378.0" y="1085.9" width="32" height="32"/><use href="#w5" x="1431.0" y="1085.9" width="32" height="32"/><use href="#w7" x="1484.0" y="1085.9" width="32" height="32"/><use href="#w5" x="1537.0" y="1085.9" width="32" height="32"/><use href="#w5" x="1590.0" y="1085.9" width="32" height="32"/><use href="#w5" x="1643.0" y="1085.9" width="32" height="32"/><use href="#w5" x="1696.0" y="1085.9" width="32" height="32"/><use href="#w5" x="1749.0" y="1085.9" width="32" height="32"/><use href="#w5" x="1802.0" y="1085.9" width="32" height="32"/><use href="#w0" x="1855.0" y="1085.9" width="32" height="32"/><use href="#w7" x="1908.0" y="1085.9" width="32" height="32"/><use href="#w0" x="1961.0" y="1085.9" width="32" height="32"/><use href="#w0" x="2014.0" y="1085.9" width="32" height="32"/><use href="#w2" x="2067.0" y="1085.9" width="32" height="32"/><use href="#w0" x="2120.0" y="1085.9" width="32" height="32"/></svg>
<div class="t" style="left:1263.0px;top:288.5px;width:50px;text-align:center;font-size:12px;line-height:16px;color:#d0d0d0;font-weight:normal;">Hel...</div>
<div class="t" style="left:1316.0px;top:288.5px;width:50px;text-align:center;font-size:12px;line-height:16px;color:#d0d0d0;font-weight:normal;">Hel...</div>
<div class="t" style="left:1369.0px;top:288.5px;width:50px;text-align:center;font-size:12px;line-height:16px;color:#d0d0d0;font-weight:normal;">Hel...</div>
<div class="t" style="left:1422.0px;top:288.5px;width:50px;text-align:center;font-size:12px;line-height:16px;color:#d0d0d0;font-weight:normal;">Hel...</div>
<div class="t" style="left:1475.0px;top:288.5px;width:50px;text-align:center;font-size:12px;line-height:16px;color:#d0d0d0;font-weight:normal;">Hel...</div>
<div class="t" style="left:1528.0px;top:288.5px;width:50px;text-align:center;font-size:12px;line-height:16px;color:#d0d0d0;font-weight:normal;">Hel...</div>
<div class="t" style="left:1581.0px;top:288.5px;width:50px;text-align:center;font-size:12px;line-height:16px;color:#d0d0d0;font-weight:normal;">Hel...</div>
<div class="lb" style="left:1659.0px;top:288.5px">agg...</div>
<div class="lb" style="left:1712.0px;top:288.5px">agg...</div>
<div class="lb" style="left:1765.0px;top:288.5px">engi...</div>
<div class="lb" style="left:1818.0px;top:288.5px">high...</div>
<div class="lb" style="left:1871.0px;top:288.5px">high...</div>
<div class="lb" style="left:1924.0px;top:288.5px">idle</div>
<div class="lb" style="left:1977.0px;top:288.5px">idle_...</div>
<div class="lb" style="left:2030.0px;top:288.5px">idle_...</div>
<div class="lb" style="left:2083.0px;top:288.5px">low...</div>
<div class="lb" style="left:2136.0px;top:288.5px">low...</div>
<div class="lb" style="left:1288.0px;top:357.9px">low...</div>
<div class="lb" style="left:1341.0px;top:357.9px">low...</div>
<div class="lb" style="left:1394.0px;top:357.9px">max...</div>
<div class="lb" style="left:1447.0px;top:357.9px">med...</div>
<div class="lb" style="left:1500.0px;top:357.9px">med...</div>
<div class="lb" style="left:1553.0px;top:357.9px">med...</div>
<div class="lb" style="left:1606.0px;top:357.9px">med...</div>
<div class="lb" style="left:1659.0px;top:357.9px">star...</div>
<div class="lb" style="left:1712.0px;top:357.9px">ver...</div>
<div class="lb" style="left:1765.0px;top:357.9px">ver...</div>
<div class="lb" style="left:1818.0px;top:357.9px">int_...</div>
<div class="lb" style="left:1871.0px;top:357.9px">int_...</div>
<div class="lb" style="left:1924.0px;top:357.9px">int_...</div>
<div class="lb" style="left:1977.0px;top:357.9px">int_h...</div>
<div class="lb" style="left:2030.0px;top:357.9px">int_h...</div>
<div class="lb" style="left:2083.0px;top:357.9px">int_i...</div>
<div class="lb" style="left:2136.0px;top:357.9px">int_i...</div>
<div class="lb" style="left:1288.0px;top:427.4px">int_i...</div>
<div class="lb" style="left:1341.0px;top:427.4px">int_l...</div>
<div class="lb" style="left:1394.0px;top:427.4px">int_l...</div>
<div class="lb" style="left:1447.0px;top:427.4px">int_l...</div>
<div class="lb" style="left:1500.0px;top:427.4px">int_l...</div>
<div class="lb" style="left:1553.0px;top:427.4px">int_...</div>
<div class="lb" style="left:1606.0px;top:427.4px">int_...</div>
<div class="lb" style="left:1659.0px;top:427.4px">int_...</div>
<div class="lb" style="left:1712.0px;top:427.4px">int_...</div>
<div class="lb" style="left:1765.0px;top:427.4px">int_...</div>
<div class="lb" style="left:1818.0px;top:427.4px">int_s...</div>
<div class="lb" style="left:1871.0px;top:427.4px">int_...</div>
<div class="lb" style="left:1924.0px;top:427.4px">int_...</div>
<div class="lb" style="left:1977.0px;top:427.4px">agg...</div>
<div class="lb" style="left:2030.0px;top:427.4px">agg...</div>
<div class="lb" style="left:2083.0px;top:427.4px">engi...</div>
<div class="lb" style="left:2136.0px;top:427.4px">high...</div>
<div class="lb" style="left:1288.0px;top:496.9px">high...</div>
<div class="lb" style="left:1341.0px;top:496.9px">idle</div>
<div class="lb" style="left:1394.0px;top:496.9px">idle_...</div>
<div class="lb" style="left:1447.0px;top:496.9px">idle_...</div>
<div class="lb" style="left:1500.0px;top:496.9px">low...</div>
<div class="lb" style="left:1553.0px;top:496.9px">low...</div>
<div class="lb" style="left:1606.0px;top:496.9px">low...</div>
<div class="lb" style="left:1659.0px;top:496.9px">low...</div>
<div class="lb" style="left:1712.0px;top:496.9px">max...</div>
<div class="lb" style="left:1765.0px;top:496.9px">med...</div>
<div class="lb" style="left:1818.0px;top:496.9px">med...</div>
<div class="lb" style="left:1871.0px;top:496.9px">med...</div>
<div class="lb" style="left:1924.0px;top:496.9px">med...</div>
<div class="lb" style="left:1977.0px;top:496.9px">star...</div>
<div class="lb" style="left:2030.0px;top:496.9px">ver...</div>
<div class="lb" style="left:2083.0px;top:496.9px">ver...</div>
<div class="lb" style="left:2136.0px;top:496.9px">int_...</div>
<div class="lb" style="left:1288.0px;top:566.3px">int_...</div>
<div class="lb" style="left:1341.0px;top:566.3px">int_...</div>
<div class="lb" style="left:1394.0px;top:566.3px">int_h...</div>
<div class="lb" style="left:1447.0px;top:566.3px">int_h...</div>
<div class="lb" style="left:1500.0px;top:566.3px">int_i...</div>
<div class="lb" style="left:1553.0px;top:566.3px">int_i...</div>
<div class="lb" style="left:1606.0px;top:566.3px">int_i...</div>
<div class="lb" style="left:1659.0px;top:566.3px">int_l...</div>
<div class="lb" style="left:1712.0px;top:566.3px">int_l...</div>
<div class="lb" style="left:1765.0px;top:566.3px">int_l...</div>
<div class="lb" style="left:1818.0px;top:566.3px">int_l...</div>
<div class="lb" style="left:1871.0px;top:566.3px">int_...</div>
<div class="lb" style="left:1924.0px;top:566.3px">int_...</div>
<div class="lb" style="left:1977.0px;top:566.3px">int_...</div>
<div class="lb" style="left:2030.0px;top:566.3px">int_...</div>
<div class="lb" style="left:2083.0px;top:566.3px">int_...</div>
<div class="lb" style="left:2136.0px;top:566.3px">int_s...</div>
<div class="lb" style="left:1288.0px;top:635.8px">int_...</div>
<div class="lb" style="left:1341.0px;top:635.8px">int_...</div>
<div class="lb" style="left:1394.0px;top:635.8px">agg...</div>
<div class="lb" style="left:1447.0px;top:635.8px">agg...</div>
<div class="lb" style="left:1500.0px;top:635.8px">engi...</div>
<div class="lb" style="left:1553.0px;top:635.8px">high...</div>
<div class="lb" style="left:1606.0px;top:635.8px">high...</div>
<div class="lb" style="left:1659.0px;top:635.8px">idle</div>
<div class="lb" style="left:1712.0px;top:635.8px">idle_...</div>
<div class="lb" style="left:1765.0px;top:635.8px">idle_...</div>
<div class="lb" style="left:1818.0px;top:635.8px">low...</div>
<div class="lb" style="left:1871.0px;top:635.8px">low...</div>
<div class="lb" style="left:1924.0px;top:635.8px">low...</div>
<div class="lb" style="left:1977.0px;top:635.8px">low...</div>
<div class="lb" style="left:2030.0px;top:635.8px">max...</div>
<div class="lb" style="left:2083.0px;top:635.8px">med...</div>
<div class="lb" style="left:2136.0px;top:635.8px">med...</div>
<div class="lb" style="left:1288.0px;top:705.2px">med...</div>
<div class="lb" style="left:1341.0px;top:705.2px">med...</div>
<div class="lb" style="left:1394.0px;top:705.2px">star...</div>
<div class="lb" style="left:1447.0px;top:705.2px">ver...</div>
<div class="lb" style="left:1500.0px;top:705.2px">ver...</div>
<div class="lb" style="left:1553.0px;top:705.2px">int_...</div>
<div class="lb" style="left:1606.0px;top:705.2px">int_...</div>
<div class="lb" style="left:1659.0px;top:705.2px">int_...</div>
<div class="lb" style="left:1712.0px;top:705.2px">int_h...</div>
<div class="lb" style="left:1765.0px;top:705.2px">int_h...</div>
<div class="lb" style="left:1818.0px;top:705.2px">int_i...</div>
<div class="lb" style="left:1871.0px;top:705.2px">int_i...</div>
<div class="lb" style="left:1924.0px;top:705.2px">int_i...</div>
<div class="lb" style="left:1977.0px;top:705.2px">int_l...</div>
<div class="lb" style="left:2030.0px;top:705.2px">int_l...</div>
<div class="lb" style="left:2083.0px;top:705.2px">int_l...</div>
<div class="lb" style="left:2136.0px;top:705.2px">int_l...</div>
<div class="lb" style="left:1288.0px;top:774.7px">int_...</div>
<div class="lb" style="left:1341.0px;top:774.7px">int_...</div>
<div class="lb" style="left:1394.0px;top:774.7px">int_...</div>
<div class="lb" style="left:1447.0px;top:774.7px">int_...</div>
<div class="lb" style="left:1500.0px;top:774.7px">int_...</div>
<div class="lb" style="left:1553.0px;top:774.7px">int_s...</div>
<div class="lb" style="left:1606.0px;top:774.7px">int_...</div>
<div class="lb" style="left:1659.0px;top:774.7px">int_...</div>
<div class="lb" style="left:1712.0px;top:774.7px">agg...</div>
<div class="lb" style="left:1765.0px;top:774.7px">agg...</div>
<div class="lb" style="left:1818.0px;top:774.7px">engi...</div>
<div class="lb" style="left:1871.0px;top:774.7px">high...</div>
<div class="lb" style="left:1924.0px;top:774.7px">high...</div>
<div class="lb" style="left:1977.0px;top:774.7px">idle</div>
<div class="lb" style="left:2030.0px;top:774.7px">idle_...</div>
<div class="lb" style="left:2083.0px;top:774.7px">idle_...</div>
<div class="lb" style="left:2136.0px;top:774.7px">low...</div>
<div class="lb" style="left:1288.0px;top:844.1px">low...</div>
<div class="lb" style="left:1341.0px;top:844.1px">low...</div>
<div class="lb" style="left:1394.0px;top:844.1px">low...</div>
<div class="lb" style="left:1447.0px;top:844.1px">max...</div>
<div class="lb" style="left:1500.0px;top:844.1px">med...</div>
<div class="lb" style="left:1553.0px;top:844.1px">med...</div>
<div class="lb" style="left:1606.0px;top:844.1px">med...</div>
<div class="lb" style="left:1659.0px;top:844.1px">med...</div>
<div class="lb" style="left:1712.0px;top:844.1px">star...</div>
<div class="lb" style="left:1765.0px;top:844.1px">ver...</div>
<div class="lb" style="left:1818.0px;top:844.1px">ver...</div>
<div class="lb" style="left:1871.0px;top:844.1px">int_...</div>
<div class="lb" style="left:1924.0px;top:844.1px">int_...</div>
<div class="lb" style="left:1977.0px;top:844.1px">int_...</div>
<div class="lb" style="left:2030.0px;top:844.1px">int_h...</div>
<div class="lb" style="left:2083.0px;top:844.1px">int_h...</div>
<div class="lb" style="left:2136.0px;top:844.1px">int_i...</div>
<div class="lb" style="left:1288.0px;top:913.6px">int_i...</div>
<div class="lb" style="left:1341.0px;top:913.6px">int_i...</div>
<div class="lb" style="left:1394.0px;top:913.6px">int_l...</div>
<div class="lb" style="left:1447.0px;top:913.6px">int_l...</div>
<div class="lb" style="left:1500.0px;top:913.6px">int_l...</div>
<div class="lb" style="left:1553.0px;top:913.6px">int_l...</div>
<div class="lb" style="left:1606.0px;top:913.6px">int_...</div>
<div class="lb" style="left:1659.0px;top:913.6px">int_...</div>
<div class="lb" style="left:1712.0px;top:913.6px">int_...</div>
<div class="lb" style="left:1765.0px;top:913.6px">int_...</div>
<div class="lb" style="left:1818.0px;top:913.6px">int_...</div>
<div class="lb" style="left:1871.0px;top:913.6px">int_s...</div>
<div class="lb" style="left:1924.0px;top:913.6px">int_...</div>
<div class="lb" style="left:1977.0px;top:913.6px">int_...</div>
<div class="lb" style="left:2030.0px;top:913.6px">agg...</div>
<div class="lb" style="left:2083.0px;top:913.6px">agg...</div>
<div class="lb" style="left:2136.0px;top:913.6px">engi...</div>
<div class="lb" style="left:1288.0px;top:983.0px">high...</div>
<div class="lb" style="left:1341.0px;top:983.0px">high...</div>
<div class="lb" style="left:1394.0px;top:983.0px">idle</div>
<div class="lb" style="left:1447.0px;top:983.0px">idle_...</div>
<div class="lb" style="left:1500.0px;top:983.0px">idle_...</div>
<div class="lb" style="left:1553.0px;top:983.0px">low...</div>
<div class="lb" style="left:1606.0px;top:983.0px">low...</div>
<div class="lb" style="left:1659.0px;top:983.0px">low...</div>
<div class="lb" style="left:1712.0px;top:983.0px">low...</div>
<div class="lb" style="left:1765.0px;top:983.0px">max...</div>
<div class="lb" style="left:1818.0px;top:983.0px">med...</div>
<div class="lb" style="left:1871.0px;top:983.0px">med...</div>
<div class="lb" style="left:1924.0px;top:983.0px">med...</div>
<div class="lb" style="left:1977.0px;top:983.0px">med...</div>
<div class="lb" style="left:2030.0px;top:983.0px">star...</div>
<div class="lb" style="left:2083.0px;top:983.0px">ver...</div>
<div class="lb" style="left:2136.0px;top:983.0px">ver...</div>
<div class="lb" style="left:1288.0px;top:1052.5px">int_...</div>
<div class="lb" style="left:1341.0px;top:1052.5px">int_...</div>
<div class="lb" style="left:1394.0px;top:1052.5px">int_...</div>
<div class="lb" style="left:1447.0px;top:1052.5px">int_h...</div>
<div class="lb" style="left:1500.0px;top:1052.5px">int_h...</div>
<div class="lb" style="left:1553.0px;top:1052.5px">int_i...</div>
<div class="lb" style="left:1606.0px;top:1052.5px">int_i...</div>
<div class="lb" style="left:1659.0px;top:1052.5px">int_i...</div>
<div class="lb" style="left:1712.0px;top:1052.5px">int_l...</div>
<div class="lb" style="left:1765.0px;top:1052.5px">int_l...</div>
<div class="lb" style="left:1818.0px;top:1052.5px">int_l...</div>
<div class="lb" style="left:1871.0px;top:1052.5px">int_l...</div>
<div class="lb" style="left:1924.0px;top:1052.5px">int_...</div>
<div class="lb" style="left:1977.0px;top:1052.5px">int_...</div>
<div class="lb" style="left:2030.0px;top:1052.5px">int_...</div>
<div class="lb" style="left:2083.0px;top:1052.5px">int_...</div>
<div class="lb" style="left:2136.0px;top:1052.5px">int_...</div>
<div style="left:1251px;top:1109px;width:937px;height:23px;background:#3c3c3c;"></div>
<svg style="left:1257px;top:1113px" width="14" height="15" viewBox="0 0 14 15"><path d="M4 11V2l8-1.5v9" fill="none" stroke="#e2ad00" stroke-width="1.8"/><circle cx="2.8" cy="11.5" r="2.3" fill="#e2ad00"/><circle cx="10.8" cy="10" r="2.3" fill="#e2ad00"/></svg>
<div class="t" style="left:1274px;top:1111.4px;font-size:14.2px;line-height:18.2px;color:#c8c8c8;font-weight:normal;">Assets/Motorbike_Engine_Sounds-Vol2/Assets/Sounds/125cc_Dirt/aggressiveness_off_fx.wav</div>
<div style="left:2108px;top:1120px;width:63px;height:1px;background:#5a5a5a;"></div>
<div style="left:2117px;top:1115px;width:11px;height:11px;border-radius:6px;background:#999"></div>
<div style="left:0px;top:537px;width:2191px;height:95px;background:rgba(0,0,0,0.5);"></div>
<div class="t" style="left:824.6px;top:537px;font-size:77px;line-height:104px;font-weight:bold;color:#fff;transform-origin:0 78px;transform:scale(1.027,1.000);text-shadow:0 0 1.5px #000,0 0 1px #000">2</div>
<div class="t" style="left:874.8px;top:537px;font-size:77px;line-height:104px;font-weight:bold;color:#fff;transform-origin:0 78px;transform:scale(0.982,1.000);text-shadow:0 0 1.5px #000,0 0 1px #000">5</div>
<div class="t" style="left:924.7px;top:537px;font-size:77px;line-height:104px;font-weight:bold;color:#fff;transform-origin:0 78px;transform:scale(1.008,1.000);text-shadow:0 0 1.5px #000,0 0 1px #000">2</div>
<div class="t" style="left:1001.5px;top:537px;font-size:77px;line-height:104px;font-weight:bold;color:#fff;transform-origin:0 78px;transform:scale(0.917,1.000);text-shadow:0 0 1.5px #000,0 0 1px #000">w</div>
<div class="t" style="left:1065.8px;top:537px;font-size:77px;line-height:104px;font-weight:bold;color:#fff;transform-origin:0 78px;transform:scale(0.893,1.000);text-shadow:0 0 1.5px #000,0 0 1px #000">a</div>
<div class="t" style="left:1114.5px;top:537px;font-size:77px;line-height:104px;font-weight:bold;color:#fff;transform-origin:0 78px;transform:scale(0.840,1.000);text-shadow:0 0 1.5px #000,0 0 1px #000">v</div>
<div class="t" style="left:1182.6px;top:537px;font-size:77px;line-height:104px;font-weight:bold;color:#fff;transform-origin:0 78px;transform:scale(1.132,0.947);text-shadow:0 0 1.5px #000,0 0 1px #000">f</div>
<div class="t" style="left:1215.7px;top:537px;font-size:77px;line-height:104px;font-weight:bold;color:#fff;transform-origin:0 78px;transform:scale(1.000,0.947);text-shadow:0 0 1.5px #000,0 0 1px #000">i</div>
<div class="t" style="left:1243.5px;top:537px;font-size:77px;line-height:104px;font-weight:bold;color:#fff;transform-origin:0 78px;transform:scale(0.909,0.947);text-shadow:0 0 1.5px #000,0 0 1px #000">l</div>
<div class="t" style="left:1269.7px;top:537px;font-size:77px;line-height:104px;font-weight:bold;color:#fff;transform-origin:0 78px;transform:scale(1.011,1.000);text-shadow:0 0 1.5px #000,0 0 1px #000">e</div>
<div class="t" style="left:1319.7px;top:537px;font-size:77px;line-height:104px;font-weight:bold;color:#fff;transform-origin:0 78px;transform:scale(0.892,1.000);text-shadow:0 0 1.5px #000,0 0 1px #000">s</div>
</body></html>
